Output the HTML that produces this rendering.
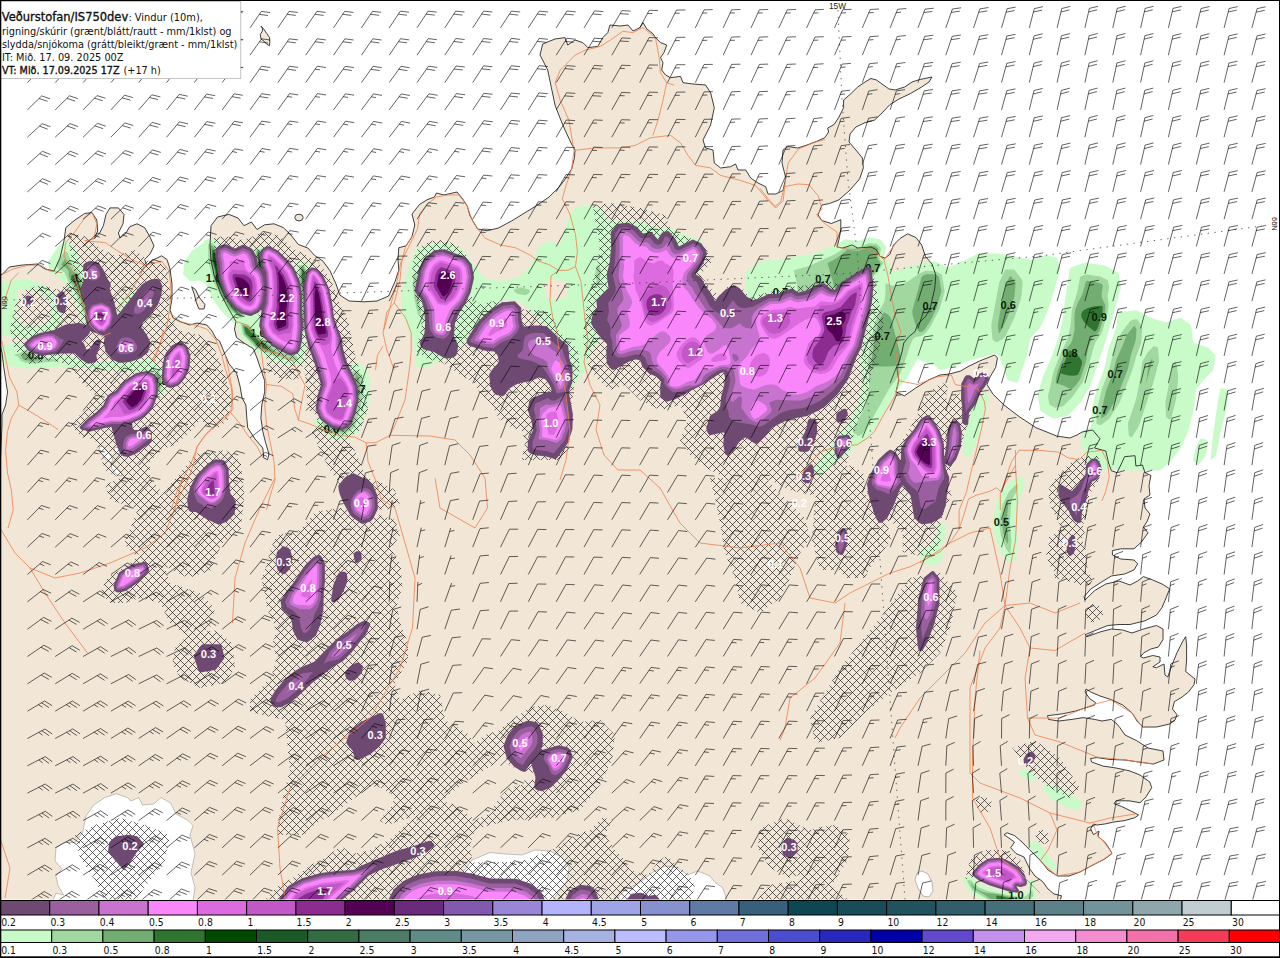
<!DOCTYPE html>
<html lang="is"><head><meta charset="utf-8"><title>Veðurstofan IS750dev</title>
<style>html,body{margin:0;padding:0;background:#fff}body{width:1280px;height:958px;overflow:hidden}</style>
</head><body>
<svg width="1280" height="958" viewBox="0 0 1280 958" style="display:block">
<defs>
<clipPath id="mapclip"><rect x="0" y="0" width="1280" height="900"/></clipPath>
</defs>
<rect width="1280" height="958" fill="#fff"/>
<g clip-path="url(#mapclip)">
<path d="M0 275 L2 274.6 L9.4 267 L22.5 265 L37.6 264 L45 269 L54 271 L60 258 L64 240.8 L65.8 227.6 L75 220 L84.6 213.5 L92 212.6 L96.8 220 L97.7 231 L94 239 L99.6 233 L103.4 225.7 L106 214.4 L110 207.9 L118.4 207.9 L124 214.4 L123 223.8 L118.4 233 L120 238 L126 233 L129.7 226.7 L137 223.8 L144.7 227.6 L150 237 L154 246 L150 254 L144.7 259.5 L146.6 265 L154 259.5 L161.6 255.8 L167 259.5 L170 269 L172 284 L172 299 L170 310 L173 317.8 L180 321.6 L189.8 325 L197 323 L206.8 325 L212 331 L216 338.5 L219.5 341 L225 354.4 L229 363.8 L236.5 373 L240 386 L242 397.7 L245.9 405 L246.8 418 L247.7 427.7 L255 439 L262.8 448 L263.7 457.8 L267.5 459.7 L269 454 L265.6 442.8 L262.8 431.5 L260.9 418 L261.8 405 L264.7 392 L264.7 380.7 L260.9 369.5 L257 358 L253.4 348.8 L244 343 L236.5 337.5 L234.5 329 L236 321.6 L227 306 L220 292 L214 275 L211 260 L210 246 L211 225.7 L217.6 217 L228.9 214.4 L238 218 L244 225.7 L251.4 222 L257 229.5 L264.6 224.8 L274 223.8 L283.4 227.6 L290.9 235 L298.4 244.5 L307.8 248 L315 255.8 L322.9 261 L330 270.8 L336 284 L339.8 295 L349 301 L364 301.8 L377 301 L388.6 296 L395 281.6 L398.8 270 L398 259 L398.8 247.7 L406 245.9 L412 236.5 L414.8 225 L412 214 L419.5 204.5 L427 199.8 L434.5 197 L436.4 193 L444 195 L457 192 L462.7 198.9 L467.4 206.4 L470 215.8 L474 223 L477.7 229 L487 230.8 L498.4 228 L511.6 221 L522.9 214 L536 206 L549 197 L558.6 187.6 L566 178 L571.7 168.8 L574.5 157.5 L575 150 L571.5 144 L565 130 L560 118 L555 105 L551.4 87.7 L547.7 70 L540 55 L542.7 44 L555 39 L565 37.6 L567.7 45 L575 40 L582.8 42.6 L587.8 47.6 L597.8 46.4 L602.8 37.6 L607.8 32.6 L610 25 L620 26 L628 25 L633 31 L640 27.6 L643 22.6 L646.7 28.8 L653 33.8 L655.4 37.6 L660.5 42.6 L666.7 45 L664 52.6 L660.5 57.6 L663 62.7 L661.7 70 L665.5 75 L670.5 77.7 L680.5 76.4 L683 82.7 L693 84 L705.6 85 L710.6 92.7 L714.3 107.8 L710.6 125 L703 140 L705.6 148 L713 150 L714.3 163 L720.6 168 L730.6 166.7 L735.6 164 L738 170 L745.7 170 L750.7 178 L758 183 L765.7 186.7 L768 194 L775.7 194 L783 190.5 L785.8 178 L782 163 L783 150 L788 146.6 L797.6 148 L807 145 L816.4 141.5 L824.8 137.7 L828.6 132 L827.7 128 L834 124.6 L839 117 L843.6 107.7 L843.6 100 L850 94.5 L857.7 87 L865 82 L871 78.5 L876.5 80 L882 84 L888.8 88.9 L895 90 L904.7 87 L912 82 L919.8 79.5 L932 77 L929 82 L921.7 87 L910.4 93.6 L899 99 L889.7 104.8 L882 113 L874.7 120 L865 122.7 L855.9 127 L850 134 L849 142 L855.9 150 L862.4 158 L863.4 167.8 L859.6 179 L850 190 L839 199.8 L829.5 203.5 L822 205 L818 214.8 L822 220.7 L831.4 223.5 L840.8 219.7 L840.8 230 L839 239.5 L837 247 L842.7 248 L852 245 L857.7 248 L871 247 L876.5 249.8 L880 256.4 L885 258 L889.7 254.5 L893.5 245 L900 238.5 L907.6 233.8 L916 237.6 L921.7 245 L925.4 256.4 L932 264 L935.8 275 L934.8 288 L930 309 L925.4 316.5 L917.9 324 L915 331.6 L908.5 337 L903.8 342.9 L902 352 L899 361.7 L897 369 L898.8 379.8 L896 392 L904.4 395.8 L915.7 388 L928.9 379.8 L940 375 L949.5 374 L960.8 371 L968 366.6 L979.6 361 L994.7 355 L997.5 358 L995.6 367.6 L990 377 L987 384.5 L992.8 394 L1004 405 L1019 416.5 L1036 427.7 L1056.7 436 L1069.8 438 L1077 435 L1082 432 L1092.6 430 L1100 438.8 L1094.5 448 L1105.8 451 L1108.6 463 L1111.4 470.8 L1117 472.6 L1120.8 465 L1124.6 456.7 L1135 455.7 L1135.9 466 L1142.4 465 L1145 472.6 L1150.9 475.5 L1149 485.8 L1150 495 L1144 499 L1145 508 L1150 514 L1147 521.5 L1143.4 527 L1148 532.8 L1141.5 542 L1134 548.8 L1120.8 548.8 L1112.4 550.6 L1112.4 555 L1120.8 559 L1134 560 L1137.7 563.8 L1134 570 L1124.6 574 L1111.4 576 L1102 581.7 L1090.8 589 L1084 596.7 L1085 600 L1094.5 590.7 L1105.8 584 L1119 581 L1130 585 L1137.7 581 L1143.4 576.6 L1152.8 580 L1162 584 L1169.7 588.8 L1166 598 L1162 607.6 L1156.5 615 L1145 620.8 L1130 624.5 L1119 624.5 L1107.7 625.5 L1096.4 630 L1085 634.8 L1087 636.7 L1100 632 L1111.4 629 L1122.7 630 L1132 633 L1143.4 629 L1156.5 625.5 L1163 629 L1163 639.5 L1158.4 647 L1150.9 649 L1144 652.7 L1140.6 656.5 L1143.4 658 L1152.8 655.5 L1160 657 L1160 662 L1152.8 666.8 L1156.5 667.7 L1164 664 L1165 675 L1167.8 677 L1171.6 665.9 L1177 652.7 L1182.9 641 L1185.7 636.7 L1186.6 645 L1186.6 660 L1185.7 671.5 L1190 675 L1195 679 L1194 684.7 L1188.5 692 L1181 697.8 L1174.4 701.6 L1172.5 709 L1177 714.7 L1175 720 L1169.7 724 L1156.5 727 L1143.4 727 L1137.7 722 L1132 712.9 L1122.7 705 L1111.4 699.7 L1100 696 L1090.8 692 L1086 689 L1085 692 L1089.8 698.8 L1095.5 702.5 L1094.5 705 L1085 708 L1075.7 711 L1062.6 713.8 L1047.5 715.7 L1048.5 719.4 L1058.8 721 L1072 719.4 L1083 717.6 L1094.5 719.4 L1102 721 L1111.4 719.4 L1117 724 L1119.8 727.5 L1125 735 L1136.7 740.7 L1148 748 L1163 751 L1164 760 L1153.6 764 L1138.6 762 L1125 760 L1110 759.5 L1097 757.6 L1090.6 758.5 L1091.6 762 L1102.8 766 L1116 768 L1129 770.7 L1140 775 L1149.8 782 L1151.7 787.7 L1146 797 L1140 802.7 L1129 800.8 L1116 800.8 L1114 803.6 L1121.6 806.5 L1133 812 L1138.6 815 L1134.8 817.7 L1125 820.5 L1114 822 L1104.7 824 L1097 825 L1093.5 824 L1090.6 829 L1093.5 834.7 L1099 831 L1098 836.5 L1104.7 842 L1110 849.7 L1112 853.5 L1104.7 859 L1091.6 865.7 L1080 872 L1069 876 L1057.7 876 L1048 870 L1040.8 861 L1035 855 L1029.5 849.7 L1022 842 L1014.5 835.6 L1007 832.8 L1004 834.7 L1008.9 838 L1014.5 842 L1010.7 847.8 L1016 853.5 L1024 857 L1029.5 868.5 L1035 876 L1042.7 881.6 L1048 889 L1054 894 L1061.5 895.7 L1060 901 L0 901 L0 470 L2 424 L2 414.6 L5.6 405 L7.5 392 L3.8 367.6 L2 352.6 L0 345.0Z" fill="#f2e7d7"/>
<path d="M261.1 26.2 L263.5 28.8 L266.8 33.5 L269.6 37.7 L269.8 42.9 L269.4 45.7 L266.8 44.3 L264.4 41.5 L261.1 39.1 L260.2 34.4 L262.1 31.6 L262.6 28.8Z" fill="#f2e7d7"/>
<path d="M191.7 286.8 L195.5 289.6 L199 297 L205 304.7 L204 309 L199 309 L196.4 302.8 L194.5 295.0Z" fill="#f2e7d7"/>
<path d="M294.7 217.5 L296 215 L299 214.2 L302 215 L303.2 217.5 L302 220 L299 221 L296 220.0Z" fill="#f2e7d7"/>
<path d="M52.5 901 L56 893 L63.7 895 L58 885.6 L56 876 L61.9 868.7 L55 861 L56 848 L63.7 842.5 L75 842.5 L82.5 833 L86 816 L93.7 805 L105 797.5 L116 793.7 L127.5 797.5 L131 801 L138.7 797.5 L142.5 805 L153.7 804 L161 797.5 L170.6 803 L176 814 L187.5 820 L193 825.6 L190 835 L195 853.7 L191 872.5 L195 887.5 L193 901.0Z" fill="#fff" stroke="#999" stroke-width="0.6"/>
<path d="M455 901 L463 872 L472 860 L490 852.5 L505 854 L522 855 L535 850 L550 851 L562 857.5 L569 867.5 L567.5 880 L560 890 L552 901.0Z" fill="#fff" stroke="#999" stroke-width="0.6"/>
<path d="M615 901 L625 890 L640 882.5 L652.5 872.5 L665 866 L677.5 867.5 L687.5 875 L697.5 871 L710 876 L715 882.5 L722.5 887.5 L727.5 901.0Z" fill="#fff" stroke="#999" stroke-width="0.6"/>
<path d="M917 873 L922 871 L928 874 L932 882 L933 891 L929 897 L923 896 L918 888 L915 880.0Z" fill="#fff" stroke="#777" stroke-width="0.5"/>
<path d="M99 447 L103 446 L108 452 L113 459 L111 463 L106 460 L101 453.0Z" fill="#fff" stroke="#777" stroke-width="0.5"/>
<path d="M111 463 L116 467 L121 472 L122 476 L117 475 L112 469.0Z" fill="#fff" stroke="#777" stroke-width="0.5"/>
<path d="M115 447 L119 448 L120 453 L116 454 L114 450.0Z" fill="#fff" stroke="#777" stroke-width="0.5"/>
<g id="green">
<path d="M579.2 206.2L590.8 205.2L600.4 209.2L610.2 221.9L624.8 222L626.2 221.6L640.2 221.1L654.8 226.9L670.8 228.2L687.8 235.9L700.2 240.2L706.3 250.2L700.3 270.2L690.8 279.9L689.2 280.8L640.8 300.3L597.5 300.8L593.6 312.2L592.5 317.2L594.6 330.2L599.3 338.2L599.8 340.8L591.8 350.5L590.1 353.2L584.3 372.2L572.2 387.9L571.2 387.8L560.8 380.8L560.1 379.8L564.9 350.2L545.6 325.8L521.8 301.9L518.8 300.9L515.2 300.5L500.8 300.5L496.8 303.4L480.2 318.5L470.8 335.9L460.5 345.2L456.3 356.2L454.8 358.3L440.2 360.6L424.8 368.4L417.8 366.8L416.2 365.9L415.6 362.8L413.9 341.8L408.2 329.8L403.2 317.8L401 299.2L403.7 283.8L409.7 261.2L418.1 248.2L429.8 244.2L445.8 242.2L460.8 248.6L473.2 263.1L485.2 278.9L502.8 281L517.8 277.4L519.8 276.6L530 266.2L538.6 247.8L548.8 240.6L550.2 240.7L559.2 245.4L560.2 245L563.7 232.2L570.2 212.2ZM549.2 279.6L544.4 284.2L543.7 285.8L546.9 298.2L549.2 299.4L556.8 300.5L565.8 297.1L566.9 295.2L568.5 285.8L568.2 285L560.8 279.6ZM211.7 236.8L213.2 237.2L224.3 248.2L226.5 271.2L231.1 289.8L235.2 297.6L250.2 310L280.8 320.2L297.2 328.5L298 327.8L298 298.8L296 282.2L296 263.2L296.8 262.2L297.8 262L305.2 262L306.8 263.1L312.5 275.2L312.5 302.2L310.3 325.8L304.8 337.2L303.5 338.2L306.4 346.2L303 356.2L305.8 361.2L305.3 362.8L291.8 366.3L273.2 360.8L254.8 350.8L240.2 336.2L237.8 326L235.2 324.3L224.8 314.8L220.2 309.8L212.7 299.2L206.1 284.8L200.2 280.5L190.2 281.3L183.2 274.3L184.2 262.2L191.8 250.7L203.1 243.2L204.8 240.2L207.8 239.5ZM868.7 237.2L880.2 239.2L885.3 245.8L886.1 247.8L883.7 256.8L884.2 257.9L885.3 258.2L888.8 261.8L889 264.8L892.5 270.8L893.8 271.6L895.2 271.5L911.2 265.7L918.8 263.7L925.2 262.1L929.8 262.6L934.8 261.3L948.2 267.5L963.2 261L978.2 253.6L996.8 253.6L1008.2 255.1L1032.2 260.1L1045.8 255.1L1055.2 257.2L1056.8 258.2L1060.4 267.8L1053.2 294.2L1046.7 313.2L1040.2 327.8L1030.5 337.8L1026.8 355.7L1017.8 382.2L1015.8 382.4L1009.3 380.8L1007.3 379.2L1002.5 364.8L998.5 355.2L997.8 354L996.8 353.6L971.2 360L956.7 365.8L940.8 370.1L939.8 369.7L935.2 365.5L921.2 360.7L917.8 358.5L905.8 379.8L895 392.8L884.8 411.8L867.8 438.8L843.8 456.8L831.4 465.2L823.3 472.8L820.8 474.8L819.8 474.9L812.8 470.8L812.7 469.2L823.8 453.2L848 425.2L858.5 403.8L862.1 385.8L860.1 359.8L872.1 300.8L872.1 284.8L871.8 284.2L871.2 284.4L850.2 300.3L799.2 305.4L760.8 310.4L745.3 300.2L745.1 272.8L745.7 271.8L760.2 261.2L782.8 259.1L797.8 256.1L812.8 254L823.8 249.2L834.2 245.5L845.2 239.2L858.2 241.1ZM65.7 240.8L67.2 241.1L73.9 247.8L75.8 251.2L80.3 261.8L91.3 296.2L96.4 317.8L92.8 331.2L92.2 331.8L90.8 331.3L84.2 326.2L77.9 307.8L70 290.2L60.2 278.4L50.8 272.8L49.7 270.8L48.1 262.8L49.2 260.2L57.8 246.7ZM254.8 247.6L261.9 246.2L262.9 247.8L266.5 262.2L266.5 279.2L265.9 280.8L260.8 284L259.1 282.2L254.1 270.8L253 249.8L253.2 248.6ZM1084.7 262.8L1103.8 265.2L1117.8 272.2L1118.9 275.2L1120.9 287.8L1106.3 339.2L1090.8 384.2L1088.8 388.2L1080.8 402.3L1068.2 415.3L1065.8 416.4L1053.2 418.4L1040.2 410.8L1037.6 395.2L1042.7 377.2L1050 360.8L1057.5 340.8L1062.5 320.8L1064.6 302.8L1069.7 269.2L1071.2 267.2ZM13.6 279.2L17.8 279.1L19.2 279.5L30.2 280.1L44.2 285.2L46.8 286.6L57.9 297.8L62.4 314.2L58.8 328.8L57.9 330.8L43.8 338.4L23.2 338.4L8.2 336.4L2.6 334.2L2.1 332.8L2.1 283.2L3.8 281.7ZM18.8 290L18 290.8L17.5 293.8L16 314.2L22 326.2L40.2 326.5L50.1 318.8L50.5 317.8L50.5 302.2L38.8 290.4L37.8 290ZM131.8 290.8L133.2 290.8L139.2 295.3L139.9 297.2L134.2 310.2L125.8 317.2L123.8 317.8L116.7 312.6L116.7 310.3L120.3 300.2ZM1120.8 312.1L1136.2 310.3L1151.8 318L1165.2 322.5L1180.8 317.8L1189.8 324.3L1190.7 325.3L1191.4 327.8L1193 340.8L1193.8 342.7L1208.2 347.8L1215.7 355.2L1213.2 370.2L1202.8 380.8L1196 390.2L1193.4 410.8L1188.2 431.2L1180.8 448.2L1171.3 460.2L1161.2 469.8L1159.8 470.4L1093.3 470.3L1084.3 453.8L1080.2 443.7L1082.8 432.3L1084.2 430.3L1091 427.2L1092 408.8L1095.6 392.8L1097.1 387.2L1103.9 369.8L1108.6 348.2L1116 328.2L1118.2 313.3ZM3.2 345.7L15.2 342.1L26.2 344.2L37.2 350.5L42.2 352.5L67.8 355.6L99.8 362.1L130.8 362.1L150.2 358.2L159.8 365.7L166.3 378.2L164.3 392.2L157.2 397.8L155.7 397.8L150.2 388.2L150 373.2L149.2 372.4L132.2 371.4L130.8 370.9L124.8 370.9L123.2 370.4L117.2 370.4L115.8 369.9L109.8 369.9L108.2 369.4L102.2 369.4L100.8 368.9L94.8 368.9L93.2 368.4L87.2 368.4L85.8 367.9L79.8 367.9L78.2 367.4L72.2 367.4L70.8 366.9L64.8 366.9L63.2 366.4L29.2 368.4L10.2 366.3L3.2 362.8L2.2 361.8L2.1 347.2ZM347.2 365.7L357.8 362.4L358.8 362.8L368.4 372.8L370.4 392.8L366.3 412.8L359.3 430.2L357.8 432.8L344.8 440.4L330.2 438.3L317.6 427.8L312.7 421.2L312.7 420.2L325.2 415.5L339.8 405.1L340.5 403.8L344.1 385.8L346.2 366.8ZM1220.9 388.2L1222.8 388.2L1227.2 389.7L1228.3 390.8L1227.4 405.2L1220.5 432.2L1216.3 454.2L1215.3 456.2L1211.2 460.1L1210.6 458.8L1212.1 442.2L1217.6 402.8L1220.1 389.8ZM984.9 390.8L985.8 390.9L989.3 397.8L987.8 404.2L980.3 430.2L974.3 446.8L969.3 456.8L967.8 457.3L963.2 454.2L962.6 452.2L964.6 434.8L969.7 410.2L970.2 408.7L981.8 395.6ZM1200.4 438.8L1202.2 438.6L1207.2 440.2L1208.2 441.8L1205.7 455.8L1198.2 465.4L1193.1 460.2L1195.7 447.8ZM1018.7 476.8L1023.8 477.7L1024.8 478.8L1024.9 479.8L1023.3 491.8L1017.5 502.8L1016.9 506.8L1015.9 523.8L1017.4 537.8L1017.4 542.2L1016.4 550.2L1016.4 555.2L1015.2 559.4L1008.8 562.6L1007.8 562.2L1001.2 552.8L994.7 537.2L992.6 521.2L996.7 502.2L1003.7 488.2L1011.7 480.2ZM940.2 522.2L941.2 522.2L943.8 523.7L945.9 525.8L944.3 540.2L939.2 549.8L943.2 552.3L941.9 560.2L940.2 562.7L930.2 566.2L926.8 564L924.8 564.3L920.2 559.8L920.6 552.8L920.1 549.2L920.8 548.3L922.3 547.8L929.2 546.5L933.2 542.1L935 539.2ZM1018.9 769.2L1028.2 770.2L1036.6 775.8L1036.8 776.8L1034.2 780.3L1032.8 781.1L1023.2 777.8L1021.7 776.8L1018.7 770.8ZM1044.8 784.2L1056.2 786.2L1069.8 793.7L1081.6 801.8L1081.8 803.2L1078.7 809.2L1078.2 809.8L1076.2 809.9L1065.2 806.8L1050.7 798.8L1043.3 790.2L1043.7 785.8ZM1030.2 841.7L1035.8 840.4L1037.2 841.2L1046.8 852.7L1055.8 865.2L1055.3 867.8L1052.8 870.8L1051.7 870.8L1043.8 863.8L1032.2 852.2L1029.7 844.8L1029.6 842.8ZM963.8 877.2L971.4 876.2L981.8 885.4L993.2 888.9L1007.8 892.4L1022.8 894.5L1023.8 894.4L1027.2 891.5L1029.3 888.8L1026.1 881.8L1026.2 880.2L1032.8 880.1L1033.9 881.8L1036.4 896.8L1030.2 903.8L988 903.8L987.8 903.1L969.8 892.8L968.7 891.8L962.1 878.2Z" fill="#c8fbc8" fill-rule="evenodd"/>
<path d="M209.7 243.2L212.8 243L220.2 252.2L222.5 271.8L225.2 279.8L227.5 289.8L235.8 305.2L244.3 315.8L240.8 318.5L239.8 318.5L236.2 315.6L230.4 310.8L228.8 308.6L220.4 295.8L213.7 282.2L208.2 260.8L208.2 244.2ZM869 243.2L876.8 243.8L880.6 247.8L880.8 249.2L879.3 257.2L880.6 260.2L883 262.2L883.4 263.2L877.2 272.8L867.2 281.8L847.2 292.9L824.8 293.5L811.8 292.5L799.2 292.8L797.6 292.2L796.5 281.8L793.6 270.2L808.2 266.2L815.2 263.3L834.8 254.3L846.8 246.5L856.2 247.5L859.2 247.4ZM255.8 249.9L260.2 249L260.8 249.6L264.2 263.2L264.2 278.2L263.2 279.6L261.2 280.6L256.4 269.8L255.8 263.2L255.3 250.7ZM64.8 251.2L65.8 250.9L67.6 252.8L74.2 268.2L79 272.8L81.5 278.2L88.9 301.2L92.4 316.8L92.4 319.2L90.2 325.9L87.1 323.8L81.2 306.2L73.5 288.2L68 280.8L64.7 272.8L57 267.2L56.7 263.2ZM299.1 265.2L304.3 265.2L309.5 276.2L309.5 301.2L308 320.2L307.4 324.8L303.8 332.2L302.8 331.5L301 328.8L301 298.2L299 280.8ZM597.5 265.2L598.8 265.4L601.1 269.8L599.9 280.2L599.2 282.8L597.8 284.3L596.6 282.8L595.3 272.8L596.5 266.2ZM1005 269.8L1006.2 269.4L1014.2 269.5L1022.2 280L1022.6 283.8L1021.6 294.8L1020.9 299.2L1014 318.8L1005.1 336.8L1004.2 337.9L997.2 342.2L993.5 340.8L992.6 339.8L991.2 325.8L999.2 282.6ZM925.4 270.8L935.8 271.2L942 274.8L944.6 291.8L939.5 309.2L930.7 326.2L926.2 332.4L922.2 335.7L915.2 337.2L912.9 339.2L910.4 344.8L905.2 360.8L899.5 375.2L889 388.8L878.6 407.8L866.8 428.1L862.2 434.3L858.2 436.2L852.8 432L852.7 431.2L858.2 419.3L864.4 408.3L865.5 405.2L869.2 386.8L867.6 361.2L867.9 359.2L871.9 336.2L875.3 321.2L878.8 311.8L883.6 303.2L884.5 300.8L885.4 293.2L885.6 283.2L891.8 285.5L898.8 285.7L907.8 281.4L918.2 274.3ZM414 274.2L415.8 273.6L416.2 274.2L419.6 281.2L418.1 297.2L421.5 311.8L419.8 315.8L418.2 315.2L417.5 313.2L414.5 299.8L413 288.8L412.6 285.2L413 281.8ZM1085.2 274.8L1087.2 274.5L1100.2 276.4L1107.8 280.2L1109.2 287.2L1107.6 295.8L1108.7 305.7L1107.7 312.8L1102.3 331.2L1100.8 334.4L1096 341.2L1094.1 345.8L1089.2 363.8L1083 381.8L1072.5 396.8L1063.8 405.8L1062.2 406.6L1054.8 407.8L1049.3 404.2L1047.9 396.2L1050.5 386.2L1052.2 376.8L1054.4 369.2L1060.8 352.8L1066.5 341.2L1068.5 335.2L1070.6 324.8L1072 308.8L1077.1 292.8L1080.2 276.8ZM514.3 289.2L520.8 287.3L528.8 289.6L529.7 290.7L529.9 292.2L526 295.2L517.8 294.1L514.8 291.9L513.7 290.2ZM1132.6 319.8L1137.2 319.3L1142.3 327.8L1141.2 342.7L1136.5 355.8L1132.1 370.8L1120.2 401.3L1109.7 418.2L1101.8 424.4L1099.8 425.1L1096.5 423.8L1096.4 415.8L1097 409.8L1101.8 389.2L1108.6 371.2L1111.8 358.3L1114.3 350.3L1121.3 332.8L1130.2 321ZM240.5 322.8L248.8 324.9L260.8 338.7L268.8 343.3L275.2 348.6L279.8 351L296.8 356L298.7 359.2L292.8 361.3L289.8 360.7L274.8 356.2L261.8 351L256.2 348.1L243 334.8ZM1153.6 346.2L1157.2 347L1158.1 348.2L1159.1 360.2L1158.8 361.8L1153.8 381.2L1140.3 421.8L1137.9 427.8L1132.5 436.2L1131.2 437L1129.3 436.2L1128.8 435.3L1127.9 423.2L1136 399.8L1140.1 379.2L1142.3 361.8L1147.2 353.1ZM24.2 350.2L26.8 350.5L38.8 356.8L54.8 359.5L58.4 360.2L58.4 360.8L53.8 361.6L31.8 363.4L25.2 362.7L21 360.8L18.2 356.9L13.7 354.8L19.8 353.2ZM1175 361.2L1175.8 361.2L1176 361.8L1178 373.8L1178.1 380.2L1176 399.8L1171.3 418.2L1169.2 419.7L1166 416.8L1165.4 401.8L1172.9 364.2ZM352.8 371.1L356.8 370.2L361.7 375.2L363.5 391.8L359.9 410.2L354.9 425.8L353.8 428.4L344.2 434.5L333.2 433.3L324.8 426.8L321.5 423.2L328.2 420.1L342.2 411.1L345.8 407.9L347 405.2L350.6 387.2L352.2 371.8ZM153.8 374.1L158.8 371.3L159.2 371.8L162.7 379.2L161.1 390.2L157.2 393.2L153.4 386.8L153.4 375.2ZM1016.5 484.8L1017.8 484.8L1017.3 489.8L1011.9 500.2L1010.9 505.8L1009.9 524.8L1011.4 540.8L1010.4 553.2L1009.8 554L1005.8 548.2L1000.7 535.2L999 521.8L1002.8 503.8L1008.9 491.8L1014.7 485.8ZM967.2 880.2L970.2 879.9L978.8 887.8L988.8 891.2L1010.3 895.5L1023.8 897.1L1025.2 896.6L1028.7 893.8L1032.2 889.8L1033.4 895.8L1027.9 902.2L1027.5 903.8L990.9 903.8L990.5 901.8L989.2 900.3L971.8 889.9L967.2 881.2ZM1030.1 882.8L1031.2 883L1031.8 886.5L1030.2 884.4Z" fill="#a0d8a0" fill-rule="evenodd"/>
<path d="M210.8 245.2L212.2 245.5L218.1 252.8L220.4 271.8L223.5 279.8L225.9 290.2L234.8 306.2L242.1 315.2L240.8 316.9L239.8 316.7L234.2 312.1L229.9 307.8L221.7 294.8L215.3 281.8L213.5 271.8L210.3 260.8L210.2 246.2ZM870 245.8L875.8 246.2L878.2 248.8L877.1 257.2L878.1 259.8L880.8 263.8L875.4 271.8L870.2 276.6L865.8 279.9L846.7 288.8L844.8 289.1L834.8 288.2L828.2 265.6L827.8 263.8L828.2 262.8L836.2 258.4L847.2 250L855.8 250.8L859.8 250.5ZM257.4 250.8L259.8 250.8L263 263.2L263 277.2L262.2 278.8L260.9 277.2L257.5 269.2L256.5 251.8ZM65 258.8L67.4 264.2L70.4 269.2L72.5 271.2L76.8 273.5L79 277.2L88.1 305.2L90.8 317.8L89.2 323L88.2 321.8L82.9 305.8L77.5 291.8L74.9 286.8L69.6 279.2L68.7 275.8L68.5 270.8L66.2 267.9L61.1 264.8ZM300.6 266.8L303.4 266.8L308 276.8L308 301.2L306.5 319.8L305.9 324.2L303.2 329.2L302.5 327.8L302.5 298.2L300.5 280.8ZM925.8 274.2L934.2 274.3L938.8 276.6L941.4 291.2L936.5 308.2L930.8 320.2L924.6 329.8L922.2 331.8L919.8 332.3L918.2 330.8L914.7 322.2L912.6 314.8L912.3 310.8L921.5 277.2L922.9 275.8ZM1009.8 276.2L1011.2 276.6L1015.7 282.7L1014.3 297.2L1007.8 316.8L1000.2 332.2L998.8 333.4L997.8 325.8L999.6 314.2L1005.7 284.8ZM1086.1 280.8L1098.7 282.8L1102.3 284.2L1102.8 286.8L1101.8 291.2L1101.6 296.2L1102.2 298.8L1105.3 304.8L1105.5 309.2L1103.2 319.2L1099.7 330.3L1097.7 333.2L1092.5 337.2L1090.1 342.2L1087.7 350.2L1085.7 362.8L1080.4 378.8L1076.3 384.8L1073.2 388.1L1071.2 389.4L1064.1 385.8L1056.2 383.2L1055.7 382.2L1056 377.8L1057.7 370.8L1065.5 350.8L1067.6 347.2L1070.6 343.8L1072.2 340.2L1074.6 329.8L1074.4 317.2L1075.3 309.2L1076.8 304.9L1082.6 293.8ZM883.5 312.8L884.8 312.5L888.2 314.7L890 316.8L891.2 319.2L900.6 355.8L900.8 359.3L898.8 364.7L896.2 365.8L890.2 366.4L872.2 366.4L871.7 365.8L871.3 360.7L876.1 332.2L879.5 319.8ZM242.5 325.2L243.8 325L247.8 326.2L259.6 339.8L267.8 344.6L273.8 350.4L279.9 354.2L275.8 353.7L266.8 351.2L257 346.8L244.5 334.2ZM1126.5 335.2L1134.2 325.8L1134.8 326.2L1136.4 329.2L1136 337.8L1135.3 341.8L1131.1 354.2L1127.8 369.2L1115.9 399.8L1106.6 414.8L1101.2 418.5L1101.5 410.8L1105.8 391.8L1112.9 372.8L1116.5 359.2L1122.6 345.8ZM24.2 352.8L27.8 353.6L39.6 359.8L38.8 360.4L31.2 361L24.8 360L22.6 358.8L21.7 357.2L22.7 353.8ZM1152.2 358.2L1152.2 360.8L1146.2 383.3L1146.8 378.2L1147.2 377.8L1147.2 373.7L1147.7 373.2L1147.8 369.7L1148.2 369.2L1148.2 365.2ZM157.6 373.8L158.8 374.5L161 379.8L159.8 388.8L158.8 390.2L157.8 390.7L155.4 387.2L155 385.8L155.1 375.8L155.7 374.8ZM355.6 374.2L356.8 374.7L358.9 377.2L360.2 391.8L356.8 409.2L352.2 425L350.8 427.2L343.2 431.9L334.2 430.8L326.4 424.2L344.9 412.8L347.4 410.8L349.2 408.2L350.2 405.8L353.8 388.2ZM1008.7 499.2L1006.9 518.8L1006.9 525.2L1008.4 540.2L1007.8 543.8L1006.4 541.8L1003.6 534.2L1002 521.8L1005.5 505.2ZM970.7 883.2L977.2 889.5L981.8 891.7L987.2 893.1L997.2 893.9L1006.8 896.2L1016.2 897.4L1018.9 898.2L1020.5 903.8L992.2 903.8L991.8 901.2L990.8 899.6L984.2 894.4L973.2 888.3Z" fill="#72ae72" fill-rule="evenodd"/>
<path d="M212.2 249.8L212.8 249.3L213.2 249.7L216.3 253.8L218.6 272.2L222 280.2L224.7 291.2L233.6 306.8L239.1 313.8L238.2 313.7L234.8 310.9L230.8 306.8L223.1 294.2L216.9 281.8L215.3 271.2L212.2 260.2ZM257.7 252.2L258.8 251.8L259.2 252.9L261.9 263.8L261.8 275.2L260.2 273L258.6 268.8ZM302.1 268.2L303.2 269.5L306.6 277.2L306.6 300.8L304.2 324.1L303.9 297.8L301.9 280.2ZM71.2 275.8L74.2 274.3L75.2 274.8L77.2 277.9L84.2 298.7L85.2 305.1L83.2 301.7L77 286.8L71.2 278.2ZM1100.6 305.8L1102.2 306L1102.8 307.2L1102.4 312.2L1097.8 328.1L1096.2 330.6L1094.8 331.5L1089 327.2L1083.9 321.8L1081.4 317.2L1081.2 313.8L1083 310.8L1087 308.2L1093.2 306.5ZM244.2 327.2L244.8 326.8L247.2 327.8L258.6 340.8L267.2 346.2L268 347.8L267.2 348.9L266.2 349.2L263.2 348.4L257.4 345.2L245.8 333.5ZM1070.2 350.2L1073.1 351.8L1076.9 354.8L1079.8 357.8L1082.1 361.2L1081.8 364.5L1079.8 370.9L1078.2 374.3L1076.8 375.2L1072.8 375.8L1068.2 375.5L1061.8 373.8L1060.8 372.8L1067.1 355.2L1068.8 351.6ZM996.2 895.8L999.4 895.8L1011.2 898.5L1011.9 899.2L1009.8 903.8L998.3 903.8L996.6 899.8Z" fill="#2f752f" fill-rule="evenodd"/>
<path d="M213.2 252.2L213.8 252.1L214.9 253.2L215.8 255.4L216.9 268.8L217.9 273.2L221.2 280.5L224.1 291.8L229.2 300.7L229.8 303L223.7 293.8L217.2 280.3L216.3 271.2L213.2 260.2ZM258.7 255.2L259.2 255.5L261.3 263.8L261.2 272.8L259.2 268.8Z" fill="#004a00" fill-rule="evenodd"/>
</g>
<clipPath id="hclip"><path d="M380 821 L395 802.5 L425 783.7 L455 757.5 L485 735 L507.5 727.5 L515 742.5 L492.5 765 L462.5 783.7 L440 802.5 L410 817.5 L387.5 825.0ZM124 544 L139 506.5 L161.6 495 L180.5 472.6 L195.5 453.8 L225.6 450 L240.6 461.4 L244.4 495.2 L240.6 529 L221.8 544 L210.5 570.4 L188 577.9 L165.4 566.6 L150.4 551.6 L135.3 555.3ZM1085 610 L1092 604 L1100 606 L1104 614 L1098 622 L1090 622 L1086 617.0ZM976 800 L984 795 L992 802 L990 811 L982 814 L977 808.0ZM1035 834 L1042 829 L1050 835 L1048 843 L1040 845.0ZM800 840 L815 828 L835 825 L850 835 L848 860 L835 880 L820 901 L800 901.0ZM501.7 727.6 L516.7 716.3 L531.7 706.9 L546.8 705 L565.6 712.6 L580 722 L600 720 L615 735 L612 760 L600 785 L580 810.3 L565.6 814 L546.8 810.3 L528 819.7 L509.2 819.7 L490.4 810.3 L501.7 795.3 L509.2 787.7 L524.2 784 L535.5 791.5 L535.5 772.7 L520.5 770.8 L509.2 765.2 L503.6 752.0ZM68 232 L84 236 L100 248 L115 256 L135 250 L150 262 L165 265 L170 290 L168 315 L178 330 L200 335 L215 350 L225 375 L232 400 L228 420 L215 430 L200 420 L190 432 L175 445 L160 450 L150 462 L150 478 L160 490 L155 505 L135 508 L110 500 L105 485 L120 478 L105 470 L100 455 L95 440 L80 435 L70 425 L85 410 L95 395 L80 380 L70 365 L50 360 L30 365 L15 350 L10 330 L15 305 L25 290 L40 285 L60 290 L75 275 L70 250.0ZM214 238 L225 236 L240 240 L250 238 L262 232 L280 236 L292 248 L304 254 L318 262 L328 275 L335 290 L340 305 L348 320 L352 340 L356 360 L365 385 L368 410 L360 430 L345 440 L352 445 L360 462 L366 478 L380 482 L395 490 L400 505 L385 510 L365 508 L350 500 L340 485 L330 470 L322 455 L312 432 L318 425 L316 415 L308 410 L306 385 L304 362 L298 380 L280 378 L268 372 L266 354 L255 345 L262 330 L258 312 L240 314 L225 300 L218 280 L214 258.0ZM413 262 L418 248 L430 241 L445 240 L458 246 L466 255 L472 270 L470 295 L480.2 304.4 L495.3 300.7 L514 304.4 L525.3 310 L540.4 310 L551.7 313.8 L559.2 332.6 L570.5 340.2 L578 351.4 L579.8 370.2 L574.2 385.3 L570.5 411.6 L570.5 430.4 L568.6 449.2 L559.2 460 L521.6 460 L525.3 441.7 L521.6 430.4 L510.3 426.6 L499 419.1 L491.5 404.1 L480.2 392.8 L472.7 381.5 L465.2 377.7 L453.9 370.2 L442.6 362.7 L427.6 358.9 L416.3 351.4 L418.2 340.2 L422 327 L418.2 308.2 L414 291 L412 275.0ZM593 206 L610 203 L640 208 L665 215 L672 232 L690 238 L706 248 L712 262 L700 275 L712 290 L720 296 L730 284 L742 288 L750 298 L765 293 L790 287 L810 285 L827 281 L838 284 L850 276 L868 265 L875 280 L878 300 L884 320 L880 345 L872 370 L868 392 L862 410 L855 430 L850 450 L845 470 L830 490 L810 495 L790 490 L770 480 L750 485 L730 480 L710 470 L690 455 L680 440 L688 420 L680 405 L660 410 L640 400 L625 385 L610 390 L598 380 L588 365 L583 340 L586 310 L590 290 L596 270 L600 245 L596 225.0ZM100 593 L107.5 578 L130 563 L150 548 L165 538 L175 553 L165 568 L170 583 L200 593 L215 608 L210 628 L190 638 L170 623 L160 603 L140 598 L125 603 L110 603.0ZM175 648 L190 633 L215 630.5 L232.5 643 L235 668 L225 683 L200 688 L180 678 L172.5 663.0ZM276.4 535.6 L300 530 L315 512 L340 508 L370 512 L395 520 L400 535 L391 548.8 L400.5 563.8 L402.3 586.4 L396.7 605.2 L400.5 624 L408 642.8 L408 661.6 L400.5 672.9 L394.8 684.1 L400 700 L420 690 L440 695 L445 720 L470 735 L479 760 L479 771 L465 779 L446 779 L437 792 L427 797 L409 807 L399 816 L386 824 L381 818 L390 809 L395 797 L382 788 L371 786 L360 794 L345 805 L330 816 L315 824 L304 835 L278 835 L278 824 L281 807 L285 788 L290 771 L287 740 L285 720 L250 712 L250 699.2 L261.4 687.9 L272.6 672.9 L276.4 657.8 L272.6 642.8 L276.4 631.5 L272.6 620.2 L267 608.9 L265.1 593.9 L261.4 578.9 L267 563.8 L270.8 548.8ZM264 901 L277 887 L296 876 L311 865 L326 857 L341 846 L352 854 L371 850 L390 839 L409 822 L427 807 L442 801 L456 805 L475 820 L497.5 810 L515 795 L525 780 L575 780 L580 800 L570 810 L555 817.5 L522.5 817.5 L490 825 L475 830 L470 845 L472.5 862.5 L490 862 L520 862 L557.5 847.5 L575 835 L590 830 L602.5 817.5 L612.5 820 L605 835 L615 850 L625 860 L630 870 L647.5 875 L660 860 L667.5 855 L675 865 L690 875 L695 887.5 L690 901.0ZM75 835 L95 825 L120 818 L145 825 L170 835 L165 860 L150 880 L135 901 L105 901 L95 880 L80 858.0ZM710 478 L765 478 L785 498 L805 518 L810 538 L800 553 L790 578 L780 598 L760 613 L740 603 L735 578 L725 553 L720 523 L715 498.0ZM830 528 L850 523 L870 538 L875 558 L865 578 L845 578 L832.5 558.0ZM910 578 L940 573 L957.5 593 L950 628 L940 653 L920 673 L890 693 L865 713 L840 738 L815 743 L810 718 L825 693 L840 668 L860 643 L880 618 L895 598.0ZM1047.5 538 L1065 528 L1085 543 L1087.5 568 L1075 583 L1055 578.0ZM1012.5 748 L1035 740.5 L1060 758 L1080 788 L1070 798 L1050 788 L1030 773.0ZM760 828 L785 818 L805 828 L840 838 L845 858 L830 878 L805 873 L790 878 L770 868 L757.5 848.0ZM755 901 L770 885 L800 880 L830 885 L850 901.0ZM965 880 L970 860 L985 850 L1005 850 L1020 860 L1025 875 L1000 870 L985 872.0ZM899 446.4 L910.2 427.6 L921.5 408.8 L936.5 408.8 L951.6 397.5 L966.6 390 L976 397.5 L970.4 414.4 L966.6 427.6 L961 446.4 L951.6 465.2 L947.8 480.2 L951.6 495.3 L944 510.3 L940.3 525.3 L940.3 540.4 L932.8 555.4 L917.7 555.4 L902.7 551.7 L902.7 532.9 L891.4 521.6 L876.4 517.8 L867 502.8 L867 480.2 L876.4 465.2 L887.7 453.9ZM820 474.6 L835 469 L850 465.2 L863.2 472.7 L865.1 487.7 L867 502.8 L876.4 517.8 L887.7 525.3 L891.4 540.4 L882 551.7 L867 570 L820 570 L812 540 L815 500.0ZM919.5 405.2 L928.9 392 L942 382.6 L947.7 386.4 L945.8 397.7 L955.2 408.9 L962.7 418.3 L962.7 435.3 L955.2 442.8 L945.8 435.3 L942 424 L934.5 420.2 L925.1 420.2 L917.6 414.6ZM1057 476 L1070 463 L1083 456 L1098 456 L1102 469 L1098 482 L1089 495 L1087 514 L1083 525 L1085 536 L1078 542 L1075 560 L1090 575 L1093 585 L1078 585 L1065 578 L1052 570 L1046 555 L1055 540 L1060 525 L1050 505 L1048 490.0Z" clip-rule="nonzero"/></clipPath>
<path id="hatch" clip-path="url(#hclip)" d="M-904.00 0L-4.00 900M-896.00 0L4.00 900M-888.00 0L12.00 900M-880.00 0L20.00 900M-872.00 0L28.00 900M-864.00 0L36.00 900M-856.00 0L44.00 900M-848.00 0L52.00 900M-840.00 0L60.00 900M-832.00 0L68.00 900M-824.00 0L76.00 900M-816.00 0L84.00 900M-808.00 0L92.00 900M-800.00 0L100.00 900M-792.00 0L108.00 900M-784.00 0L116.00 900M-776.00 0L124.00 900M-768.00 0L132.00 900M-760.00 0L140.00 900M-752.00 0L148.00 900M-744.00 0L156.00 900M-736.00 0L164.00 900M-728.00 0L172.00 900M-720.00 0L180.00 900M-712.00 0L188.00 900M-704.00 0L196.00 900M-696.00 0L204.00 900M-688.00 0L212.00 900M-680.00 0L220.00 900M-672.00 0L228.00 900M-664.00 0L236.00 900M-656.00 0L244.00 900M-648.00 0L252.00 900M-640.00 0L260.00 900M-632.00 0L268.00 900M-624.00 0L276.00 900M-616.00 0L284.00 900M-608.00 0L292.00 900M-600.00 0L300.00 900M-592.00 0L308.00 900M-584.00 0L316.00 900M-576.00 0L324.00 900M-568.00 0L332.00 900M-560.00 0L340.00 900M-552.00 0L348.00 900M-544.00 0L356.00 900M-536.00 0L364.00 900M-528.00 0L372.00 900M-520.00 0L380.00 900M-512.00 0L388.00 900M-504.00 0L396.00 900M-496.00 0L404.00 900M-488.00 0L412.00 900M-480.00 0L420.00 900M-472.00 0L428.00 900M-464.00 0L436.00 900M-456.00 0L444.00 900M-448.00 0L452.00 900M-440.00 0L460.00 900M-432.00 0L468.00 900M-424.00 0L476.00 900M-416.00 0L484.00 900M-408.00 0L492.00 900M-400.00 0L500.00 900M-392.00 0L508.00 900M-384.00 0L516.00 900M-376.00 0L524.00 900M-368.00 0L532.00 900M-360.00 0L540.00 900M-352.00 0L548.00 900M-344.00 0L556.00 900M-336.00 0L564.00 900M-328.00 0L572.00 900M-320.00 0L580.00 900M-312.00 0L588.00 900M-304.00 0L596.00 900M-296.00 0L604.00 900M-288.00 0L612.00 900M-280.00 0L620.00 900M-272.00 0L628.00 900M-264.00 0L636.00 900M-256.00 0L644.00 900M-248.00 0L652.00 900M-240.00 0L660.00 900M-232.00 0L668.00 900M-224.00 0L676.00 900M-216.00 0L684.00 900M-208.00 0L692.00 900M-200.00 0L700.00 900M-192.00 0L708.00 900M-184.00 0L716.00 900M-176.00 0L724.00 900M-168.00 0L732.00 900M-160.00 0L740.00 900M-152.00 0L748.00 900M-144.00 0L756.00 900M-136.00 0L764.00 900M-128.00 0L772.00 900M-120.00 0L780.00 900M-112.00 0L788.00 900M-104.00 0L796.00 900M-96.00 0L804.00 900M-88.00 0L812.00 900M-80.00 0L820.00 900M-72.00 0L828.00 900M-64.00 0L836.00 900M-56.00 0L844.00 900M-48.00 0L852.00 900M-40.00 0L860.00 900M-32.00 0L868.00 900M-24.00 0L876.00 900M-16.00 0L884.00 900M-8.00 0L892.00 900M0.00 0L900.00 900M8.00 0L908.00 900M16.00 0L916.00 900M24.00 0L924.00 900M32.00 0L932.00 900M40.00 0L940.00 900M48.00 0L948.00 900M56.00 0L956.00 900M64.00 0L964.00 900M72.00 0L972.00 900M80.00 0L980.00 900M88.00 0L988.00 900M96.00 0L996.00 900M104.00 0L1004.00 900M112.00 0L1012.00 900M120.00 0L1020.00 900M128.00 0L1028.00 900M136.00 0L1036.00 900M144.00 0L1044.00 900M152.00 0L1052.00 900M160.00 0L1060.00 900M168.00 0L1068.00 900M176.00 0L1076.00 900M184.00 0L1084.00 900M192.00 0L1092.00 900M200.00 0L1100.00 900M208.00 0L1108.00 900M216.00 0L1116.00 900M224.00 0L1124.00 900M232.00 0L1132.00 900M240.00 0L1140.00 900M248.00 0L1148.00 900M256.00 0L1156.00 900M264.00 0L1164.00 900M272.00 0L1172.00 900M280.00 0L1180.00 900M288.00 0L1188.00 900M296.00 0L1196.00 900M304.00 0L1204.00 900M312.00 0L1212.00 900M320.00 0L1220.00 900M328.00 0L1228.00 900M336.00 0L1236.00 900M344.00 0L1244.00 900M352.00 0L1252.00 900M360.00 0L1260.00 900M368.00 0L1268.00 900M376.00 0L1276.00 900M384.00 0L1284.00 900M392.00 0L1292.00 900M400.00 0L1300.00 900M408.00 0L1308.00 900M416.00 0L1316.00 900M424.00 0L1324.00 900M432.00 0L1332.00 900M440.00 0L1340.00 900M448.00 0L1348.00 900M456.00 0L1356.00 900M464.00 0L1364.00 900M472.00 0L1372.00 900M480.00 0L1380.00 900M488.00 0L1388.00 900M496.00 0L1396.00 900M504.00 0L1404.00 900M512.00 0L1412.00 900M520.00 0L1420.00 900M528.00 0L1428.00 900M536.00 0L1436.00 900M544.00 0L1444.00 900M552.00 0L1452.00 900M560.00 0L1460.00 900M568.00 0L1468.00 900M576.00 0L1476.00 900M584.00 0L1484.00 900M592.00 0L1492.00 900M600.00 0L1500.00 900M608.00 0L1508.00 900M616.00 0L1516.00 900M624.00 0L1524.00 900M632.00 0L1532.00 900M640.00 0L1540.00 900M648.00 0L1548.00 900M656.00 0L1556.00 900M664.00 0L1564.00 900M672.00 0L1572.00 900M680.00 0L1580.00 900M688.00 0L1588.00 900M696.00 0L1596.00 900M704.00 0L1604.00 900M712.00 0L1612.00 900M720.00 0L1620.00 900M728.00 0L1628.00 900M736.00 0L1636.00 900M744.00 0L1644.00 900M752.00 0L1652.00 900M760.00 0L1660.00 900M768.00 0L1668.00 900M776.00 0L1676.00 900M784.00 0L1684.00 900M792.00 0L1692.00 900M800.00 0L1700.00 900M808.00 0L1708.00 900M816.00 0L1716.00 900M824.00 0L1724.00 900M832.00 0L1732.00 900M840.00 0L1740.00 900M848.00 0L1748.00 900M856.00 0L1756.00 900M864.00 0L1764.00 900M872.00 0L1772.00 900M880.00 0L1780.00 900M888.00 0L1788.00 900M896.00 0L1796.00 900M904.00 0L1804.00 900M912.00 0L1812.00 900M920.00 0L1820.00 900M928.00 0L1828.00 900M936.00 0L1836.00 900M944.00 0L1844.00 900M952.00 0L1852.00 900M960.00 0L1860.00 900M968.00 0L1868.00 900M976.00 0L1876.00 900M984.00 0L1884.00 900M992.00 0L1892.00 900M1000.00 0L1900.00 900M1008.00 0L1908.00 900M1016.00 0L1916.00 900M1024.00 0L1924.00 900M1032.00 0L1932.00 900M1040.00 0L1940.00 900M1048.00 0L1948.00 900M1056.00 0L1956.00 900M1064.00 0L1964.00 900M1072.00 0L1972.00 900M1080.00 0L1980.00 900M1088.00 0L1988.00 900M1096.00 0L1996.00 900M1104.00 0L2004.00 900M1112.00 0L2012.00 900M1120.00 0L2020.00 900M1128.00 0L2028.00 900M1136.00 0L2036.00 900M1144.00 0L2044.00 900M1152.00 0L2052.00 900M1160.00 0L2060.00 900M1168.00 0L2068.00 900M1176.00 0L2076.00 900M1184.00 0L2084.00 900M1192.00 0L2092.00 900M1200.00 0L2100.00 900M1208.00 0L2108.00 900M1216.00 0L2116.00 900M1224.00 0L2124.00 900M1232.00 0L2132.00 900M1240.00 0L2140.00 900M1248.00 0L2148.00 900M1256.00 0L2156.00 900M1264.00 0L2164.00 900M1272.00 0L2172.00 900M1280.00 0L2180.00 900M1288.00 0L2188.00 900M1.00 0L-899.00 900M9.00 0L-891.00 900M17.00 0L-883.00 900M25.00 0L-875.00 900M33.00 0L-867.00 900M41.00 0L-859.00 900M49.00 0L-851.00 900M57.00 0L-843.00 900M65.00 0L-835.00 900M73.00 0L-827.00 900M81.00 0L-819.00 900M89.00 0L-811.00 900M97.00 0L-803.00 900M105.00 0L-795.00 900M113.00 0L-787.00 900M121.00 0L-779.00 900M129.00 0L-771.00 900M137.00 0L-763.00 900M145.00 0L-755.00 900M153.00 0L-747.00 900M161.00 0L-739.00 900M169.00 0L-731.00 900M177.00 0L-723.00 900M185.00 0L-715.00 900M193.00 0L-707.00 900M201.00 0L-699.00 900M209.00 0L-691.00 900M217.00 0L-683.00 900M225.00 0L-675.00 900M233.00 0L-667.00 900M241.00 0L-659.00 900M249.00 0L-651.00 900M257.00 0L-643.00 900M265.00 0L-635.00 900M273.00 0L-627.00 900M281.00 0L-619.00 900M289.00 0L-611.00 900M297.00 0L-603.00 900M305.00 0L-595.00 900M313.00 0L-587.00 900M321.00 0L-579.00 900M329.00 0L-571.00 900M337.00 0L-563.00 900M345.00 0L-555.00 900M353.00 0L-547.00 900M361.00 0L-539.00 900M369.00 0L-531.00 900M377.00 0L-523.00 900M385.00 0L-515.00 900M393.00 0L-507.00 900M401.00 0L-499.00 900M409.00 0L-491.00 900M417.00 0L-483.00 900M425.00 0L-475.00 900M433.00 0L-467.00 900M441.00 0L-459.00 900M449.00 0L-451.00 900M457.00 0L-443.00 900M465.00 0L-435.00 900M473.00 0L-427.00 900M481.00 0L-419.00 900M489.00 0L-411.00 900M497.00 0L-403.00 900M505.00 0L-395.00 900M513.00 0L-387.00 900M521.00 0L-379.00 900M529.00 0L-371.00 900M537.00 0L-363.00 900M545.00 0L-355.00 900M553.00 0L-347.00 900M561.00 0L-339.00 900M569.00 0L-331.00 900M577.00 0L-323.00 900M585.00 0L-315.00 900M593.00 0L-307.00 900M601.00 0L-299.00 900M609.00 0L-291.00 900M617.00 0L-283.00 900M625.00 0L-275.00 900M633.00 0L-267.00 900M641.00 0L-259.00 900M649.00 0L-251.00 900M657.00 0L-243.00 900M665.00 0L-235.00 900M673.00 0L-227.00 900M681.00 0L-219.00 900M689.00 0L-211.00 900M697.00 0L-203.00 900M705.00 0L-195.00 900M713.00 0L-187.00 900M721.00 0L-179.00 900M729.00 0L-171.00 900M737.00 0L-163.00 900M745.00 0L-155.00 900M753.00 0L-147.00 900M761.00 0L-139.00 900M769.00 0L-131.00 900M777.00 0L-123.00 900M785.00 0L-115.00 900M793.00 0L-107.00 900M801.00 0L-99.00 900M809.00 0L-91.00 900M817.00 0L-83.00 900M825.00 0L-75.00 900M833.00 0L-67.00 900M841.00 0L-59.00 900M849.00 0L-51.00 900M857.00 0L-43.00 900M865.00 0L-35.00 900M873.00 0L-27.00 900M881.00 0L-19.00 900M889.00 0L-11.00 900M897.00 0L-3.00 900M905.00 0L5.00 900M913.00 0L13.00 900M921.00 0L21.00 900M929.00 0L29.00 900M937.00 0L37.00 900M945.00 0L45.00 900M953.00 0L53.00 900M961.00 0L61.00 900M969.00 0L69.00 900M977.00 0L77.00 900M985.00 0L85.00 900M993.00 0L93.00 900M1001.00 0L101.00 900M1009.00 0L109.00 900M1017.00 0L117.00 900M1025.00 0L125.00 900M1033.00 0L133.00 900M1041.00 0L141.00 900M1049.00 0L149.00 900M1057.00 0L157.00 900M1065.00 0L165.00 900M1073.00 0L173.00 900M1081.00 0L181.00 900M1089.00 0L189.00 900M1097.00 0L197.00 900M1105.00 0L205.00 900M1113.00 0L213.00 900M1121.00 0L221.00 900M1129.00 0L229.00 900M1137.00 0L237.00 900M1145.00 0L245.00 900M1153.00 0L253.00 900M1161.00 0L261.00 900M1169.00 0L269.00 900M1177.00 0L277.00 900M1185.00 0L285.00 900M1193.00 0L293.00 900M1201.00 0L301.00 900M1209.00 0L309.00 900M1217.00 0L317.00 900M1225.00 0L325.00 900M1233.00 0L333.00 900M1241.00 0L341.00 900M1249.00 0L349.00 900M1257.00 0L357.00 900M1265.00 0L365.00 900M1273.00 0L373.00 900M1281.00 0L381.00 900M1289.00 0L389.00 900M1297.00 0L397.00 900M1305.00 0L405.00 900M1313.00 0L413.00 900M1321.00 0L421.00 900M1329.00 0L429.00 900M1337.00 0L437.00 900M1345.00 0L445.00 900M1353.00 0L453.00 900M1361.00 0L461.00 900M1369.00 0L469.00 900M1377.00 0L477.00 900M1385.00 0L485.00 900M1393.00 0L493.00 900M1401.00 0L501.00 900M1409.00 0L509.00 900M1417.00 0L517.00 900M1425.00 0L525.00 900M1433.00 0L533.00 900M1441.00 0L541.00 900M1449.00 0L549.00 900M1457.00 0L557.00 900M1465.00 0L565.00 900M1473.00 0L573.00 900M1481.00 0L581.00 900M1489.00 0L589.00 900M1497.00 0L597.00 900M1505.00 0L605.00 900M1513.00 0L613.00 900M1521.00 0L621.00 900M1529.00 0L629.00 900M1537.00 0L637.00 900M1545.00 0L645.00 900M1553.00 0L653.00 900M1561.00 0L661.00 900M1569.00 0L669.00 900M1577.00 0L677.00 900M1585.00 0L685.00 900M1593.00 0L693.00 900M1601.00 0L701.00 900M1609.00 0L709.00 900M1617.00 0L717.00 900M1625.00 0L725.00 900M1633.00 0L733.00 900M1641.00 0L741.00 900M1649.00 0L749.00 900M1657.00 0L757.00 900M1665.00 0L765.00 900M1673.00 0L773.00 900M1681.00 0L781.00 900M1689.00 0L789.00 900M1697.00 0L797.00 900M1705.00 0L805.00 900M1713.00 0L813.00 900M1721.00 0L821.00 900M1729.00 0L829.00 900M1737.00 0L837.00 900M1745.00 0L845.00 900M1753.00 0L853.00 900M1761.00 0L861.00 900M1769.00 0L869.00 900M1777.00 0L877.00 900M1785.00 0L885.00 900M1793.00 0L893.00 900M1801.00 0L901.00 900M1809.00 0L909.00 900M1817.00 0L917.00 900M1825.00 0L925.00 900M1833.00 0L933.00 900M1841.00 0L941.00 900M1849.00 0L949.00 900M1857.00 0L957.00 900M1865.00 0L965.00 900M1873.00 0L973.00 900M1881.00 0L981.00 900M1889.00 0L989.00 900M1897.00 0L997.00 900M1905.00 0L1005.00 900M1913.00 0L1013.00 900M1921.00 0L1021.00 900M1929.00 0L1029.00 900M1937.00 0L1037.00 900M1945.00 0L1045.00 900M1953.00 0L1053.00 900M1961.00 0L1061.00 900M1969.00 0L1069.00 900M1977.00 0L1077.00 900M1985.00 0L1085.00 900M1993.00 0L1093.00 900M2001.00 0L1101.00 900M2009.00 0L1109.00 900M2017.00 0L1117.00 900M2025.00 0L1125.00 900M2033.00 0L1133.00 900M2041.00 0L1141.00 900M2049.00 0L1149.00 900M2057.00 0L1157.00 900M2065.00 0L1165.00 900M2073.00 0L1173.00 900M2081.00 0L1181.00 900M2089.00 0L1189.00 900M2097.00 0L1197.00 900M2105.00 0L1205.00 900M2113.00 0L1213.00 900M2121.00 0L1221.00 900M2129.00 0L1229.00 900M2137.00 0L1237.00 900M2145.00 0L1245.00 900M2153.00 0L1253.00 900M2161.00 0L1261.00 900M2169.00 0L1269.00 900M2177.00 0L1277.00 900M2185.00 0L1285.00 900" fill="none" stroke="#222" stroke-width="0.68"/>
<g font-family="'Liberation Sans',sans-serif" font-weight="bold" font-size="11" text-anchor="middle">
<text x="81.0" y="282.3" fill="#0a1a0a">1.0</text>
<text x="35.7" y="358.5" fill="#0a1a0a">0.8</text>
<text x="213.5" y="282.3" fill="#0a1a0a">1.0</text>
<text x="258" y="336.9" fill="#0a1a0a">1.0</text>
<text x="358" y="393.2" fill="#0a1a0a">0.7</text>
<text x="331.4" y="432.7" fill="#0a1a0a">0.6</text>
<text x="160" y="384.8" fill="#0a1a0a">0.8</text>
<text x="780.5" y="295.7" fill="#0a1a0a">0.7</text>
<text x="823" y="283.3" fill="#0a1a0a">0.7</text>
<text x="872.8" y="272" fill="#0a1a0a">0.7</text>
<text x="930.1" y="309.7" fill="#0a1a0a">0.7</text>
<text x="882.2" y="339.7" fill="#0a1a0a">0.7</text>
<text x="1070" y="357.4" fill="#0a1a0a">0.8</text>
<text x="1115.2" y="378.2" fill="#0a1a0a">0.7</text>
<text x="1100" y="414.3" fill="#0a1a0a">0.7</text>
<text x="1008.2" y="308.7" fill="#0a1a0a">0.6</text>
<text x="1099.2" y="321" fill="#0a1a0a">0.9</text>
<text x="1001.5" y="526.3" fill="#0a1a0a">0.5</text>
<text x="1016" y="898.5" fill="#0a1a0a">1.0</text>
</g>
<g id="purple">
<path d="M617.2 223.8L628.2 222.8L636.8 226.8L642.8 233.5L651.8 232.3L658.2 239.9L660.8 234.2L662.8 232.3L667.2 231.1L668.8 231.3L675.7 239.3L678.8 246.4L692.8 239.6L701.2 243.2L705.8 250.3L706.9 253.2L703.2 263.7L695.6 274.2L699.8 276.8L702.2 279.2L705.4 285.8L710.7 292.8L715.2 301.3L717.7 297.2L725.8 289.2L733.8 285.2L735.7 285.8L740.2 288.7L746.8 296.8L753.2 299.9L759.2 298.6L768.2 294.1L778.2 294.1L783.8 290.8L791.8 288.6L793.7 289.2L798.2 292.4L805.2 291.1L808.8 289.6L816.7 284.8L823.2 283.2L824.8 283.8L830.2 288.6L834.8 290L839.2 284.2L842.2 281.8L860.3 270.2L867.3 266.8L869.8 266.8L871.4 269.2L873.4 284.2L872.4 298.8L869.4 315.2L861.2 347.7L856 358.2L848.2 379.2L837.7 394.3L824.8 406.8L818.2 410.8L806.2 416.2L796.2 417.9L784.2 421.4L773.2 426.9L770.8 429.3L766.3 435.2L757.8 443.7L755.8 443.8L754.3 443.2L745.8 437.5L744.2 437.9L739 442.2L734.2 450.2L732.8 451.8L728.2 455.2L726.8 455.3L725.7 454.8L724.8 453.1L723.2 443.8L724.5 432.8L722.8 432.4L709.9 435.2L707.8 433.2L706.2 428.2L709.8 416.3L711.2 414.8L716.8 411.5L720.1 407.2L721.1 396.8L723.6 387.8L725.1 378.2L723.8 372.5L722.2 372.5L719.8 373.4L702.8 384.8L691.2 390.5L684.2 394.8L675.2 399.2L666.8 401.8L661.8 398.7L660.2 397.1L660.2 386.2L661 380.8L657.2 376.9L649.2 373.8L642.3 366.8L640.6 361.8L639.2 359.9L635.2 359.4L629.2 361.4L614.2 369.7L611.8 369.7L607.3 364.3L606.7 362.8L606.2 350.8L607.1 344.2L600.8 337.8L591.3 324.2L591.2 322.2L592.3 315.8L597.1 307.2L596.3 299.8L608.5 287.8L606.7 274.2L609.6 262.8L611.1 248.2L610.8 231.8ZM224.3 244.2L226.2 244.3L234.8 248.4L243.2 244.6L251.2 248.3L253.2 250.2L256.7 257.2L258 265.8L261.8 268.4L262 267.8L259.1 258.2L260.8 250.8L261.8 249.2L263.8 247.8L266.8 246.2L269.7 246.2L278.2 250.7L287.3 259.8L294.2 268.2L299.8 281.3L300.9 287.2L301.9 293.8L301.9 312.8L302.9 321.8L302.9 328.8L302.4 330.2L301.9 341.2L299.7 350.8L297.2 353.7L290.2 355.4L285.3 353.2L272.2 346.2L263.3 337.2L259.1 325.8L261.5 310.8L261.2 309.5L258.8 312.2L251.7 315.8L250.2 315.9L243.3 314.2L240.8 313.2L234.2 308.3L227.3 299.8L222.8 290.8L218.8 279.2L217 264.8L215.1 256.8L215.6 250.2L216.3 248.2L218.2 246.3ZM434.2 250.3L444.7 249.2L455.2 253.5L465.2 256.8L471.7 264.2L473.9 276.2L473.9 278.8L470.7 292.2L465.2 304.2L459.9 311.8L454.9 323.2L453.9 336.2L458.3 345.2L456.8 354.2L455.8 355.8L453.8 357.2L447.2 358.8L443.8 357.8L433.8 351.9L423.3 349.2L421.8 347.8L419.8 344.2L419.8 342.8L424.1 334.2L424.6 331.2L425.1 324.2L424.6 314.8L424.1 310.2L421.5 300.2L414.6 291.2L418.8 269.3L423.8 258.8ZM89.8 260.8L97.2 262.2L99.3 263.8L103.2 269.3L107.4 278.8L110.2 282.8L110.8 284.8L109.9 287.8L109.9 289.8L114.2 301.8L117.2 314.9L119.2 313.2L138.3 288.8L142.8 283.8L148.8 280.2L152.2 279.2L157.8 278.7L159.8 280.3L162.2 285.4L162.3 287.8L161.3 295.8L159.2 301.6L157.7 305.2L153.2 311.2L142.9 322.2L141.4 327.2L146.8 334.8L150.2 341.8L150.3 343.2L148.2 352.2L140.7 358.2L130.6 361.8L122.2 362.8L119.4 362.8L112.3 359.8L105.8 352.1L103.7 343.2L104.6 337.2L104.2 336.3L90.2 331L89.3 333.8L83.8 339.8L81.6 341.2L84.2 343.8L86 349.2L86.8 349.6L90.8 348.5L93.8 342.8L96.2 340.3L98.2 339.3L99.6 339.2L100.7 340.2L100.8 342.8L99.2 348.7L96.4 355.2L97.2 360.2L95.2 362.2L88.8 363.8L86.8 363.2L80.8 359.2L74.8 353.4L62.2 353.4L42.2 355.4L34.8 353.8L28.3 350.8L24.3 345.8L24.3 343.2L31.8 336.3L40.8 332.7L54.2 330.1L65.2 324.8L67.8 324.2L79.2 322.7L85.8 325.1L87 324.8L85.2 318.2L85.6 306.8L80.2 289.2L84.6 278.2L84.6 276.8L83.1 273.2L83.2 264.8L84.7 263.3ZM311.8 267.2L316.8 268.8L319.2 270.8L323.7 276.8L329.2 288.8L332.4 304.8L334 317.8L338 329.2L341.2 336.8L343 348.2L344.5 354.2L347.5 363.8L352.7 374.2L357.4 385.8L358.4 400.8L355.2 413.7L350.7 424.8L349.2 426.2L341.8 430.4L331.2 427.7L321.8 420.7L319.8 418.7L315.6 409.2L317.6 395.2L320.9 384.8L314.5 363.2L308.2 346.2L304.6 331.2L304.1 308.2L303.6 306.2L304.1 283.2L305.6 274.2L306.7 271.8ZM61.3 291.2L62.8 291.3L64.2 292.8L66.3 297.2L66.3 307.2L65.2 311.8L63.2 313.3L59.8 312.2L57.3 309.7L55.7 303.2L56.8 294.8ZM28.4 295.2L31.8 296.7L33.7 298.8L33.8 300.2L32.8 303.7L31.2 305.3L27.2 306.3L23.3 302.7L23.2 300.2L23.8 298.2L25.2 296.7ZM502.2 302.3L514.8 301.3L521.2 307.8L521.4 319.2L523.3 326.2L526.2 326.6L531.2 325.7L538.8 325.6L546.8 326.3L559.8 338.7L568.2 345.4L569.4 358.8L572.4 367.8L572.4 382.2L569 391.2L568.9 392.8L572.9 414.2L572.4 429.2L567.8 443.2L559.7 454.8L556.8 458.2L555.2 459.2L546.2 456.4L535.8 455.2L529.8 453.2L527.7 450.8L527.8 440.8L533 430.2L531.1 419.2L527.7 410.2L529.2 401.3L531.8 398.2L548.8 391.3L551.9 392.2L550.6 386.8L546.2 380.3L544.8 378.9L538.8 377.6L530.2 381.2L519.8 382.9L515.2 384.9L509.8 388.2L504.3 395.2L502.8 396.2L495.8 394.7L493.3 392.3L490.2 386.1L489.2 374.2L492.8 368.8L498.9 362.2L498.1 357.2L497.1 354.8L494.2 351.5L483.8 350.4L469.2 345.7L467.3 343.8L466.8 342.2L466.6 340.2L467.8 337.8L478.3 321.2L491.2 308.7ZM179.3 341.8L180.8 341.8L184.2 343.8L186.3 345.2L187.7 347.2L190.4 355.8L189.4 368.2L185.2 377.7L180.8 383.2L177.8 385.7L170.2 387.9L166.8 386.7L164.7 384.8L161.8 378.2L162.6 364.8L164.8 355.3L166.3 352.2L172.2 345.3ZM135.8 373.3L147.2 370.8L153.2 373.8L155.7 375.8L157.9 383.8L157.8 394.7L153.3 406.7L148.3 413.2L140.8 419.2L133.2 422.5L132 423.8L133 429.8L133.8 430.1L138.8 430L145.8 426.6L148.2 427.2L151.8 431.8L151.8 441.2L149.8 443.2L136.7 453.2L128.2 456.9L123.3 456.2L120.3 453.8L116.8 445.8L111.2 426.5L90.2 431.4L81.8 429.7L79.8 428.2L79.8 426.8L88.2 418.2L96.8 411.7L103.2 405.2L107.7 395.8L109.8 393.8L115.8 390.7L123.8 381.2ZM982.8 372.3L985.7 372.2L986.8 373.2L988.8 377.8L988.8 379.2L985.2 386.2L979.9 393.2L975.2 404.8L969.4 412.2L968.9 413.8L968.2 424.2L967.2 425.2L965.3 425.2L963.2 423.8L962.1 422.2L962.1 406.8L961.1 398.2L961.2 383.8L964.8 376.8L966.3 375.3L969.8 375.3L974.2 378.4L979.2 373.8ZM843.8 408.8L845.6 408.8L846.7 409.8L847.8 413.2L847.7 414.8L844.7 420.2L843.2 421.7L837.8 422.7L836.2 420.8L836.3 413.8L837.8 412.3ZM926.8 415.2L929.2 415.2L930.2 416.2L934.7 422.2L940.2 431.8L943.9 444.2L944.2 458.3L945.6 450.8L948.1 427.8L949.3 425.2L952.8 420.3L955.2 420.3L958.2 421.8L959.7 423.3L961.9 432.2L960.9 446.8L956.2 459.2L950.8 466.2L948.8 466.2L945.8 463.3L945.2 463.1L944.9 463.8L946 469.2L949.2 477.3L949.3 479.8L947.4 491.2L945.8 505.2L942.2 515.8L940.2 518.2L931.2 523.2L921.8 524.3L919.2 522.7L914.2 518.1L910.6 495.8L902.8 485.2L899.9 489.2L894.2 504.2L887.2 518.2L881.7 522.7L879.2 522.7L878.2 521.7L874.2 513.7L868.2 493.8L867.1 483.8L870.8 473.2L878.3 459.8L886.2 452.2L889.8 449.8L890.8 449.8L894.7 451.8L896.8 453.8L900.8 461.2L901.1 448.2L902.8 444.8L906.3 438.8L914.5 428.8L919.8 420.2L921.7 418.3ZM809.4 418.8L814.2 418.7L816.2 420.2L816.8 423.2L817.2 432.7L814.2 442.2L808.8 450.8L807.2 451.8L799.9 451.8L798.2 449.8L798.2 442.3L803.1 435.8L804.6 432.8L806.6 427.8L807.8 420.4ZM838.8 435.8L848.2 434.7L849.8 436.3L851.9 443.8L851.8 445.2L845.8 450.8L841.8 456.3L839.3 458.7L838.3 458.8L836.8 457.2L834.6 452.8L834.8 441.8L836.8 437.8ZM1091.3 458.8L1096.2 458.6L1098.2 460.2L1100.8 464.8L1101.9 472.8L1097.2 479.3L1092 481.8L1088.4 491.2L1086.2 500.2L1081.9 512.2L1081.2 521.7L1080.2 522.8L1078.2 522.9L1075.2 521.7L1072.8 519.2L1068.6 510.8L1062.3 502.8L1059.2 497.7L1058.2 495.2L1058.7 488.2L1059.7 485.2L1061.8 484.7L1071.2 490.7L1072.2 490.7L1079.2 482.7L1085.5 474.2L1086.2 464.8ZM215.3 459.2L223.8 460.3L225.2 461.8L228.7 468.8L228.9 481.2L230.4 493.2L235.8 501.2L234.7 513.8L226.8 521.7L218.8 524.8L206.8 519.2L195.8 511.9L190.2 511.7L188.8 510.2L188.2 508.7L187.2 500.8L187.2 498.8L190.3 486.8L196.8 474.8L208.2 463.3ZM810.3 464.2L811.8 464.3L813.2 466.2L814.3 472.8L810.2 481.8L808.8 483.2L806.8 483.3L803.8 482.2L801.8 480.2L801.7 479.2L803.8 469.8ZM351.8 473.8L354.7 473.8L362.2 477.6L365.7 478.2L367.2 479.2L373.2 485.8L377.4 495.2L377.9 508.8L373.2 518.7L370.7 521.2L362.8 523.9L360.8 523.2L352.3 517.2L350.3 515.2L342.8 501.8L339.8 494.2L338.7 489.8L338.3 485.8L343.3 479.3L345.8 476.8ZM842.3 528.2L844.2 528.3L845.7 529.8L847.8 533.8L847.9 536.8L846.9 544.8L844.7 550.8L843.3 553.8L842.2 554.7L840.8 554.9L838.2 553.7L836.2 551.7L835.1 539.8L837.3 532.2ZM1072.4 534.8L1073.2 534.8L1074.7 536.2L1076.4 543.2L1074.2 552.2L1073.3 553.8L1070.2 556.3L1068.3 554.8L1066.8 550.7L1066.6 542.2L1069.8 537.2ZM283.4 546.2L288.2 547.8L290.2 549.8L292.3 557.2L292.3 559.2L290.2 568.2L287.3 571.8L284.2 574.3L281.8 573.7L277.8 570.2L275.7 562.2L276.8 552.2L281.8 547.2ZM356.3 551.2L359.2 551.2L360.3 551.8L361.2 553.8L361.8 557.2L361.3 559.2L356.8 563.3L354.8 561.6L353.7 555.2L353.8 553.2ZM317.3 555.2L319.8 555.1L321.3 556.2L324.9 563.2L324.9 582.2L323.9 591.2L323.3 609.8L320.2 625.2L315.8 635.7L308.2 641.7L306.2 642.3L299.2 640.2L296.8 638.2L292.8 630.2L291.6 620.8L288.2 615.3L281.8 609.2L280.6 601.2L285.8 592.2L294.1 581.8L301.8 569.8L306.3 563.8L313.8 556.8ZM132.2 564.3L145.2 561.8L147.2 563.8L149.3 570.2L148.3 572.2L137.8 582.7L126.8 590.2L123.8 591.4L117.8 592.4L115.8 591.8L114.2 589.7L113.6 585.2L119.2 572.2ZM931.8 571.2L933.2 571.1L934.2 571.7L939.4 578.2L939.4 603.8L934.2 624.2L927.2 642.8L923.2 649.2L921.2 651.2L920.2 651.3L918.8 650.2L918.1 648.2L916.1 630.2L916.1 625.2L918.6 597.2L923.8 577.8ZM340.4 571.8L344.8 571.7L346.7 573.2L347.3 577.2L347.2 581.7L344.2 589.8L338.7 599.8L335.2 602.2L332.4 602.2L331.3 601.2L331.2 599.8L333.2 585.3L338.2 573.8ZM363.8 620.8L365.7 620.8L368.8 622.3L370.3 624.8L366.2 633.7L351.8 652.2L342.8 661.3L333.8 666.4L311.8 683.2L298.2 696.3L290.2 702.7L280.8 707.3L274.2 707.3L272.2 705.8L270.2 699.8L270.8 697.8L275.8 689.8L285.8 678.2L295.2 670.8L301.3 667.2L314.2 661.8L336.8 638.8L347.2 631.8L356.8 624.3ZM202.4 644.2L219.8 644.2L221.7 645.8L224.3 657.2L224.2 658.6L215.8 669.7L201.8 672.3L200.2 672.2L198.3 670.2L193.7 655.8L200.3 646.2ZM355.8 662.8L358.8 662.8L362.7 665.8L362.8 667.8L361.8 673.1L354.8 680.2L348.9 680.8L346.8 678.7L345.2 675.7L345.3 673.8L348.7 667.2ZM379.3 713.2L381.6 713.2L383.2 714.8L385.8 723.2L385.8 737.2L385.2 738.7L379.3 746.8L370.3 754.2L358.8 759.7L356.2 759.7L354.8 758.2L352.6 750.8L347.8 745.2L346.2 742.6L349.8 730.8L360.3 722.2ZM527.3 720.8L529.2 720.7L536.8 722.3L538.2 723.8L542.7 732.8L542.8 744.8L540.8 749.9L541.8 750.1L557.8 745.6L566.8 747.1L568.2 747.8L570.2 749.8L572.9 757.2L567.2 769.2L560.3 778.2L551.2 787.2L541.8 791.3L536.2 789.7L534.2 787.6L535.6 777.2L531.8 766.1L531.3 762.2L525.2 771.7L523.2 771.8L520.8 770.8L514.2 766.8L506.8 758.2L503.7 746.8L504.2 743.8L507.8 734.8L513.7 727.8L516.3 725.2ZM1030.3 751.8L1032.6 751.8L1034.2 753.3L1035.3 755.8L1035.2 758.2L1032.2 763.3L1026.9 765.8L1024.8 764.2L1023.2 761.2L1023.2 759.8L1026.2 754.2ZM115.9 836.2L129.2 834.7L137.2 836.3L143.7 843.2L143.8 844.8L136.8 852.3L131.2 861.2L126.3 867.2L124.8 868.7L123.2 868.8L120.7 866.8L109.8 854.2L108.2 852.1L108.2 849.8L109.2 842.4L112.2 839.2ZM787.9 837.8L794.8 840.3L796.7 842.3L797.3 844.8L797.7 851.3L794.3 855.2L790.8 858.3L788.8 858.2L784.8 856.2L782.8 854.2L781.2 846.8L781.2 845.4L782.3 843.8L785.7 839.2ZM429.3 840.8L431.2 841.2L432.2 842.2L434.2 844.2L434.3 845.8L433.2 847.3L426.8 852.2L423.2 854.2L412.2 858.8L381.2 869.4L368.8 875.4L352.8 891.3L346.3 896.2L338.1 903.8L277.1 903.8L277.3 901.8L287.2 887.2L288.8 885.8L302.2 878.3L320.8 873.1L336.2 871.1L352.2 870.1L356.8 869L359.2 866.8L362.2 865.3L395.3 851.2L413.8 846.1ZM987.8 858.8L1000.7 857.8L1007.2 860.3L1012.8 863.3L1018.8 867.2L1024.7 874.8L1026.9 881.2L1026.7 884.3L1025.2 885.7L1020.8 886.9L1016.6 886.3L1016.5 886.8L1019.3 890.8L1017.8 892.7L1009.8 891.8L989.2 885.2L979.2 880.7L972.3 875.2L972.3 872.8L978.8 864.8ZM435.3 871.2L456.8 871.1L471.2 873.6L490.8 878.6L516.2 878.8L530.7 883.8L540.2 890.7L542.7 894.2L545.2 901.3L545.4 903.8L387.1 903.8L387.3 901.8L393.8 889.2L403.2 881.3L407.8 878.8L417.3 874.8ZM579.8 884.8L590.8 886.1L593.2 887.7L594.2 888.8L597.8 896.3L598.9 903.8L564.1 903.8L564.3 901.2L568.8 891.8L570.2 890.3ZM631.8 893.8L641.1 892.8L648.2 896.1L655.2 894.8L656.8 895.8L661.2 901.8L661.4 903.8L624.1 903.8L624.2 902.4L625.3 900.8Z" fill="#6e4a72" fill-rule="evenodd"/>
<path d="M621.4 227.8L626.8 227.3L633.8 230.5L639.2 236.7L641.2 238L645.2 238.3L649.8 237.6L654.4 243.2L657.2 244.8L659.2 244.7L661.3 243.8L662.6 242.2L664.9 236.8L667 236.2L672 241.8L675 248.8L677.2 250.2L679.8 250L692.8 243.4L699 245.8L702.9 252.2L703.1 253.8L700.4 261.8L691.8 272.8L691.2 274.8L691.4 276.8L693 279.2L696.9 282.2L699.8 289.2L705.1 296.8L709.8 306.2L715.8 311.7L719.2 313.6L722.2 313.2L725.2 311.1L732.8 300.1L735.8 304L738.8 306.8L741.2 307.8L745.8 307.9L753.2 306.5L769.2 298.2L779.3 297.9L785.2 294.6L790.8 293.1L791.8 293L795.2 295.4L797.8 296.3L806.2 294.8L810.8 292.9L817.8 288.4L822.2 287L823.2 287L829.2 291.4L832.8 292.6L835.2 292.6L837.2 291.3L842.2 284.9L861.8 272.6L868.2 269.7L869.7 275.2L870.8 287.8L869.4 301.8L866.7 314.2L858.2 346.8L852.8 356.8L843.8 377.8L832.2 391.2L820.2 400.7L810.3 405.6L803.8 407.9L791.8 409.5L782.7 412.1L780.2 413.4L763.2 425.4L759.2 426.7L751.2 424.4L736.2 422.1L732.2 419.9L729.1 417.2L728.6 412.8L726.7 406.8L725.8 401.7L726.1 397.8L729 386.2L730.2 378.2L728 371.8L726 369.8L721.8 369.4L717.8 370.9L709.9 375.8L701.9 383.8L697 386.2L680.2 391.7L674.2 392.3L672.3 391.8L665.8 385.9L664.5 383.8L664.1 379.2L659.8 374.2L651.8 369.7L647.2 363.8L645.1 357.8L642.8 355.5L640.8 354.7L635.2 354.4L624.2 357.5L618.2 357.5L614.2 354.5L613.4 352.8L612.5 348.2L612.4 341.8L610 334.8L610.7 330.8L610.5 327.8L609.5 324.2L607 320.2L609.1 311.2L607.9 303.8L614.8 293.3L615.7 290.2L615.5 286.8L612.9 275.2L614.8 263.8L615.6 249.2L615.2 233.8L619.2 228.4ZM219.2 249.3L225.8 247.4L234.2 251.5L235.8 251.4L243.2 248L249.8 251L253.8 258.2L254.7 264.8L255.6 267.2L260.2 270.8L262.8 276.2L264.2 288.2L262.2 302.2L258.3 309.8L251.2 313.6L242.2 311.6L235.2 306.4L229.1 298.8L224.9 290.2L220.8 278.2L219.7 264.2L217.9 255.8L218.5 251.2ZM267.2 248.2L269.2 248.2L276.8 252L285.6 260.8L292.5 269.2L298 282.2L300 294.8L299.8 312.8L300.7 327.8L299.5 340.2L297.4 349.8L296.2 351.3L292.8 352.4L290.2 352.7L279.8 347.8L273.2 343.9L265.2 336L261.3 325.2L263.3 312.2L266 303.2L267 285.8L265.9 272.2L263 265.2L261.1 257.8L263 250.8ZM442.6 251.8L464.2 259.4L469.2 265.7L471.3 277.2L468.1 291.2L466.6 294.8L462.8 302.3L456.8 309.8L454.9 313.2L451.2 322.2L450.1 331.2L448.8 334.4L446.8 336.9L443.8 338.7L438.8 338L436.2 336.9L433.2 334.7L430.7 330.8L429.5 327.8L428.6 313.8L427.3 307.2L424.4 298.8L417.9 290.2L421.4 270.2L426.1 260.2L435.2 253ZM87.2 266.6L91.2 264.9L96.1 266.2L99.7 271.8L100.2 273.8L99.8 276.2L98.3 278.2L95.8 280.2L91.2 280.4L90.1 279.8L89 278.2L87 272.2L86.9 267.8ZM311.5 269.2L313.2 269.2L317.6 271.2L322.4 277.8L327.7 289.2L330.9 305.2L332.5 318.2L339.2 337.8L340.3 348.8L341.9 355.2L344.9 364.8L350.2 374.8L355.3 386.2L356.4 399.8L353.3 412.8L348.9 423.8L341.8 428.1L331.8 425.6L322.6 418.8L320.6 415.8L317.7 408.8L319.8 395.8L323.5 384.2L317.1 362.2L310.5 345.2L307.9 337.2L306.2 330.8L306.1 323.2L305.6 321.2L305.1 293.2L305.7 283.8L307.7 273.2ZM152.5 287.2L154.1 287.2L154.2 290.8L153.5 294.8L150.3 302.2L144.4 309.8L141.2 312.5L138.2 313.8L134.8 313.5L134 311.8L134 309.2L134.5 307.2L136.2 304.2L146.8 290.7ZM92.2 305.1L101.8 302.8L109.2 306.6L110.7 308.2L112.7 315.8L110.7 324.8L104.8 331.7L97.8 330.9L91.2 324.8L88.3 317.7L88.2 311.2L88.8 309.7ZM512.2 304.8L513.8 305.1L517.8 309.2L518 320.2L519.5 326.8L516.8 332.8L511.2 338.4L501.8 342.3L493.8 347.9L484.8 346.9L470.7 342.2L470.3 341.2L470.7 339.8L481.2 323.2L493.2 311.6L503.2 305.7ZM536.1 332.8L543.8 333.3L555.4 344.2L562 348.8L568.9 369.2L568.8 381.2L566.2 388.8L565.2 390.8L564.2 391.4L556.8 393.6L553.7 384.8L547.8 374.5L543.2 368L538 363.8L531.8 360.9L520.7 358.8L518.4 357.8L517.8 356.8L517.6 354.8L521.2 351.7L522.9 349.2L524.2 339.2L525.7 335.8L529.8 333.8ZM48.1 333.8L53.8 334.2L56.6 335.8L60.2 338.8L64 339.8L58.7 348.2L54.8 351.3L44.2 353.1L40.2 352.5L34.2 351L30.2 349L28.8 347.9L27.3 345.8L26.8 344.8L27.2 343.8L33.2 338.3L43.2 334.6ZM125.7 337.2L129.8 337.8L133.5 340.2L137.1 345.8L137 348.2L135.8 350.7L133.2 352.2L128.2 353.8L121.2 354.3L117.2 351.9L116.3 348.8L116.5 346.2L119.8 339.5L122.2 337.9ZM178.9 344.2L180.8 344.1L184.9 346.8L185.9 348.2L188.4 356.8L187.3 367.8L183.4 376.8L179 382.2L177 383.8L170.8 385.8L167.8 384.8L166.2 383.4L163.7 377.2L164.7 365.2L166.7 356.2L168.1 353.2L173.1 347.2ZM146.1 372.8L147.2 372.9L153.8 376.3L156.1 385.2L156 393.8L154.5 398.2L151.6 405.8L146.2 412.8L139.8 417.5L136.2 419.2L129.8 421.8L122.2 423.7L111.8 423.9L90.2 429.2L82.8 427.6L82.8 426.8L89.2 420.2L97.8 413.7L104.8 406.7L109.2 397.2L110.8 395.7L116.8 392.4L124.8 382.8L136 375.2ZM983.4 375.8L984.2 375.9L985.1 377.8L984.8 379.7L982.2 384.5L977 391.8L972.4 402.8L965.8 411.7L964.4 397.3L964.4 385.8L964.8 384.2L967.8 378.6L968.8 378.6L972.8 381.5L974.7 381.8L976.8 380.9L981 376.8ZM563.9 395.2L564.8 395.2L565 395.8L569.4 416.2L568.8 428.2L564.7 440.2L553.8 453.2L547.2 451.2L537.8 450.1L533.2 448.7L532.7 447.8L532.6 442.2L536.8 430.2L535.6 422.2L535.4 415.8L533.8 409.8L535 403.8L547.8 398L551.2 400.6L554.8 400.7ZM927.7 417.2L928.2 417.3L932.9 423.2L937.2 430.2L941.5 442.8L942 445.2L942 458.2L944.3 476.2L944.1 478.8L939.7 485.8L938.5 488.8L935.3 501.8L930.8 504.4L924.8 508.9L923.2 509.1L921.8 508.4L920.5 506.2L918.7 495.2L917.6 492.2L916.1 490.2L910.4 485.8L906.2 481.1L902.6 472.2L905.9 462.2L904 449.8L905 446.2L908.3 439.8L916 430.2L921.8 421.1ZM954.2 423.2L956.7 424.2L957.5 425.8L959.1 433.3L958.6 441.8L958 446.2L954.3 456.8L950.3 462.2L949.2 462.7L947.1 460.2L950.4 431.2L951.2 427.8ZM139.8 433.2L146.2 430.5L148.4 433.2L148.7 438.8L148.2 440.1L134.2 450.7L127.8 452.9L124.3 451.8L123.2 447.8L123.1 443.8L124.6 438.8L126 436.8L130.8 434.3ZM839.8 438.1L847.2 437.2L847.8 437.8L849.3 444.2L844 449.2L839.9 454.8L838.8 455.4L837 451.8L837.2 442.2ZM890.2 452.8L893.2 454.1L894.5 455.2L897.7 461.2L897.8 473.2L900.9 481.8L893.8 490.6L888.8 494L882.2 491.2L876.8 489.7L872.2 485.1L871.6 481.8L873.5 473.8L880.5 461.2ZM1091.8 461.2L1094.8 460.8L1096.2 461.4L1098.7 465.8L1099.6 472.2L1095.8 477.7L1090.2 480.2L1087.3 485.8L1083.4 490.2L1081.9 494.8L1080.8 501.2L1077.4 511.2L1076.8 515.9L1070.2 504.6L1069.5 500.8L1070.1 499.8L1076.5 495.8L1079.2 492.8L1081 489.8L1083.7 481.2L1087.7 474.8L1088.4 465.8ZM215.5 462.2L220.2 462.4L222.6 463.2L225.9 469.8L226 488.2L223.6 497.8L221.4 501.2L215.2 506.4L208.7 509.6L206.8 508.7L201.2 503.9L197.2 502L194 493.2L193.6 487.8L194.8 484.3L199.3 475.8L209.2 465.9ZM362 488.2L367.2 488.5L370.2 490.3L374 496.2L374.7 503.8L374.6 508.2L370.2 517.1L368.8 518.3L362.8 520.1L353.8 513.7L351.8 509.8L350.6 504.8L351.6 499.2L354.1 494.8L357.2 491.5ZM839.7 533.8L843.2 531.6L843.8 532.2L845.1 535.8L844 544.2L842 549.8L840.8 551.7L838.9 550.2L837.9 540.8ZM315.2 559.6L318.2 558.3L319.2 558.8L321.8 564.2L321.9 580.8L320.6 599.2L318.2 607.2L314.3 614.2L312.2 622.6L309.1 630.2L305.2 633.2L303.2 632.5L301 628.2L299.5 618.8L298 615.8L294 611.2L286.9 606.8L285.2 601.8L288.8 594.1L296.4 583.8L304.6 571.2L311.2 563ZM132.8 566.4L144.2 564L145.2 564.8L146.9 570.2L145.9 571.8L136.8 580.8L125.8 588.3L120.2 589.8L116.8 589.8L115.8 585.8L120.8 573.7ZM931.7 574.8L932.8 574.5L936.6 579.2L936.6 595.2L936 602.2L932.2 616.8L928.8 623.8L922.8 639.1L922.2 637.8L921.2 628.2L921.6 624.2L920.9 614.8L921.6 598.2L926 579.8ZM364.7 624.8L365.6 625.2L365.6 625.8L361.9 633.2L348.8 650L341.8 657L340.2 658.3L336.2 660.1L329.2 661.3L323.8 663.5L329.6 651.8L338.2 642.5L349.2 634.9L357.2 628.6ZM302.2 673.5L312.9 671.8L309.5 675.8L307.1 679.8L295.2 692.1L286.8 698.7L279.8 702.2L277.2 702.3L276.2 701.8L275.7 699.8L278.6 694.8L288.8 682.4L298.8 674.9ZM527.5 726.8L530.8 726.6L533.2 727.1L534 727.8L537.4 734.8L537.4 743.2L534.5 749.2L526.7 758.8L523.2 764.6L522.2 765L517.2 762.1L511.8 755.5L509.4 746.2L512.6 737.8L518.4 730.8L519.8 729.7ZM557.3 749.2L560.8 749.3L566.7 750.7L569.3 757.2L564.8 766.8L563.1 769.2L558.8 773.6L556.2 774.9L554.8 775.1L552.8 774.4L551.2 773.2L548.2 765.8L544 759.8L543.8 757.2L544.7 754.8L547.2 752.6L550.8 751.1ZM991.8 860L999.8 859.5L1006.8 862.2L1017.6 868.8L1023.6 876.8L1025 881.8L1024.8 883.6L1020.2 884.9L1017.2 884.1L1015.8 884.3L1014.8 885.2L1014.6 886.7L1016.4 890.2L1013.2 890.5L989.8 883.3L980.2 879L974.1 874.2L974.4 873.3L979.2 866.9L987.8 861ZM376.7 864.2L377.9 864.2L367.8 873L351.5 889.2L336.8 901.5L335.6 903.8L279.4 903.8L280.2 901.7L289.5 888.2L302.8 880.7L321.8 875.4L337.2 873.4L353.2 872.3L361.2 870.2ZM436.1 876.2L455.2 876L470.2 878.6L489.8 883.4L514.8 883.6L528.6 888.2L537.2 894.7L540.5 903.8L392 903.8L398.2 891.8L407.2 884.6L418.8 879.6ZM580.3 889.8L583.2 889.7L590.2 891.2L593.2 897.8L594.3 903.7L568.6 903.8L572.8 894.4Z" fill="#9a5f9f" fill-rule="evenodd"/>
<path d="M622.5 231.8L626.2 231.6L630.8 233.5L638.2 241.1L642.2 242.5L647.8 242.4L651.8 247L655.2 248.8L658.8 249.1L662.2 248L664.7 246.2L667.2 242.9L668.5 244.2L671.4 251.2L673.2 253.1L675.2 254L679.8 253.3L692.8 246.5L696.8 247.8L700.1 253.2L699.3 256.8L698.1 260.2L687.8 273.2L686.7 277.8L687.3 281.8L689 284.8L692.1 287.2L694.6 292.8L705.5 308.8L713.2 315.8L721.8 325.9L724.2 327.5L727.2 328.5L730.2 328.5L732.8 327.8L739.8 323.3L742.6 326.2L744.8 327.6L747.8 328.3L750.2 328L751.6 325.8L751.7 317.2L753.8 312.8L758.2 308.2L769.8 301.6L780.2 301L786.8 297.7L790.8 296.6L795.2 299L797.8 299.5L807.2 297.9L812.2 295.9L818.2 291.7L821.8 290.3L828.8 294L832.8 295L835.8 294.7L838.7 292.8L843.2 286.7L863.2 274.3L866.8 273.2L868.1 279.8L868.7 287.3L867.3 301.2L864.4 314.2L855.7 345.8L850 355.8L840.7 375.2L833.8 382.4L827.8 387.3L820.4 391.2L815.8 394.7L806.8 398.8L800.8 400.6L797.2 400.8L776.7 399.7L770.7 401.8L769.4 402.8L769.2 403.8L771.6 408.8L771.5 410.8L770.6 412.7L762.2 419.9L759.2 421.8L756.8 422.5L752.8 421L749.5 418.8L741.2 407.8L742.1 399.8L741.6 397.2L740.8 396.3L738.8 396.5L733.2 401.8L731.8 401.8L731 400.8L730.8 397.2L735 383.8L735.5 380.2L734.3 372.2L733.3 369.2L732.2 368.2L724.8 366.8L721.2 367.1L718.2 368L706.3 373.8L703.4 376.8L701.1 382.2L698.3 384.2L694.2 385.4L688.2 385.4L679.2 388.6L675.2 389.3L668.6 386.2L667.3 384.2L667.1 379.8L665.9 376.8L661.2 371.3L654.4 366.2L651.8 360.8L650.9 354.2L648.8 351.6L644.2 350L636.8 350L633.2 350.4L622.2 354L619.8 354.1L618.2 353.5L617.2 352.2L616.4 348.8L615.9 335.2L621 328.2L621.9 325.2L621.1 321.8L617.5 313.8L617.4 308.2L622.6 301.2L623.6 298.2L618.4 275.2L619.7 264.8L619.2 256.8L619.7 248.8L619.2 235.3L620.9 232.8ZM733.2 353.7L732.3 355.8L733.2 359.2L734.8 361.3L736.2 361.4L738.4 359.8L738.7 357.2L736.2 354.6ZM267.7 249.8L268.8 249.7L275.8 253.2L284.5 261.8L291.3 270.2L296.5 282.8L298.5 295.2L298.1 313.2L298.8 327.2L297.5 339.8L295.5 348.8L294.8 349.6L292.2 350.4L290.8 350.6L286.3 348.8L274.2 342.1L266.8 334.8L263.2 325.2L265 312.8L267.7 303.2L268.5 285.2L267.4 272.2L264.5 264.8L262.8 257.8L264.3 251.8ZM224 250.2L225.8 250.2L234.2 254.2L236.8 253.9L243.2 250.9L248.2 253.2L251.2 258.9L252.2 265.2L253.2 267.8L254.9 269.8L258.7 272.2L260.9 276.8L262.5 287.8L260.5 301.8L257.2 308.3L251.3 311.7L243.2 310.2L236.2 305.1L230.5 297.8L226.5 289.8L222.6 277.8L222.2 263.8L220.6 255.8L221.2 251.2ZM435.8 255.3L443.2 254.1L462.9 261.2L467.2 266.8L468.9 277.2L466 290.2L464.3 294.2L460.8 301L454.2 308.2L451.9 311.8L448.1 321.2L446.8 331.2L444.9 334.2L442.8 335.4L439.2 335L436.2 333.9L434.8 332.8L433.5 330.8L432.6 328.2L432 313.8L431.2 308.8L426.7 297.8L420.5 289.8L423.5 271.2L427.8 261.8ZM90.4 268.8L91.2 268.4L94.2 269.2L96.8 273L97.1 275.8L95.2 278.2L93.2 278L92.2 277.1L90.3 271.8ZM311.6 270.8L312.8 270.3L316.8 272.2L321.3 278.2L326.6 289.8L329.7 305.8L331.3 318.2L337.4 337.8L338 349.2L339.6 355.8L342.8 365.8L348.4 375.8L353.6 386.8L354.7 399.2L351.7 412.2L347.4 422.8L341.8 426.2L332.2 424L326 419.2L322.8 416.3L319.5 408.2L321.6 396.2L325.4 385.8L325.6 383.8L323.4 374.8L318 357.2L309.2 336.8L307.4 330.2L306.8 321.2L306.8 307.8L306.3 304.2L306.8 284.2L308.8 273.9ZM148.1 296.2L147 299.8L141.2 307L138.8 309L138.6 308.2L140.5 305.2ZM101.2 304.2L107.2 306.9L109.1 308.2L111.3 315.8L109.4 324.2L105.2 329.6L103.8 330.4L98.8 329.9L94.8 326.6L92.2 323.8L89.6 317.2L89.7 310.8L93.1 306.2ZM504.1 308.8L512.2 308.1L514.6 310.2L514.9 311.2L515 320.2L516.3 326.8L514 331.2L510.1 335.2L500 339.8L493.2 344.6L485.2 343.9L474.4 340.2L476.4 336.2L483.8 325L488.2 320.4L495.5 313.8ZM48.2 335.8L51.8 336L53.8 336.8L57.4 340.8L57.9 343.2L57.2 345.8L55.9 347.8L53.8 349.5L48.8 350.7L43.2 351.1L34.8 349.1L30.8 347L29.4 345.2L29.5 344.2L34.2 340L42.8 336.8ZM534 339.2L540.8 339.6L542.8 340.9L551.2 349.2L556.1 352.2L557.3 354.8L560.2 358.1L562.8 362.2L565.7 369.2L565.8 379.8L563.4 387.2L562.4 388.8L559.3 389.7L558.5 389.2L556.4 383.2L549.6 371.2L547.8 366.8L547.2 363.2L546.2 361.4L543.8 359.6L533.9 355.2L530.2 351.2L528 346.2L528.2 342.9L530.2 340.5ZM124.3 340.8L129.2 340.9L132.2 342L134.3 345.2L133.8 347.2L132.2 348.4L127.8 350L122.2 350.4L120.2 349.7L118.7 346.8L119.8 343.2L121.2 341.6ZM178.6 346.2L180.2 345.9L182.2 347L184 348.2L184.8 350.2L186.8 357.2L185.7 367.2L182.2 375.4L177.6 381.2L176.2 382.3L170.2 383.9L167.5 382.2L165.3 376.7L166.3 365.8L167.8 358.8L168.9 355.2L173.8 348.9ZM136.2 376.8L146.8 374.4L152.4 377.2L154.6 385.2L154.6 393.2L153.1 397.8L150.4 404.8L145.2 411.5L138.2 416.5L127.8 420.6L121.2 422L111.8 422L90.2 427.2L86.1 426.2L90.2 421.7L99.2 414.8L106.3 407.7L110.8 398.2L117.8 393.6L125.8 383.9ZM969.1 382.8L971.8 384.2L974.2 384.7L976.2 384.4L979.8 382.8L974.5 390.2L970.2 400.8L968.2 403.2L967.3 396.7L967.3 386.2ZM556.8 403.6L561.8 400.8L562.6 401.8L566.3 416.8L565.8 427.8L561.8 438.7L556.8 443.1L547.8 440.2L538.8 439.3L538.6 437.8L539.9 431.2L538.7 421.2L539.8 413.2L539.8 408.5L540.2 407.7L546.2 404.4L549.8 404.9L553.8 404.5ZM926.6 419.8L928.2 419.9L935.8 430.8L940 443.2L940.5 445.7L940.5 458.2L941.5 466.2L941.4 473.8L939.8 478.2L937.8 480.2L914.8 482.8L913.2 482L910.2 478.5L908.2 472.8L909.5 468.2L910 462.8L907 453.8L906.2 449.2L907.8 444.8L911.1 438.8L917.2 431.2L923.2 421.9ZM953.4 428.7L954.8 426.9L955.2 427.4L956.7 433.8L955.7 445.2L952.2 455.4L950.2 458.1L949.8 457.2L952.8 431.8ZM144.2 434.2L145.6 434.2L145.7 438.2L141.8 441.8L132.8 448.3L128.2 449.4L126.4 448.8L125.9 442.8L128.5 438.2L131.8 436.6L140.2 435.9ZM841.5 439.8L845.8 439.5L846.5 440.8L847 443.8L839.2 451.7L839 443.2L840.5 440.2ZM889.8 455.8L891.2 455.6L892.8 456.6L895.4 461.8L895.6 473.8L897.9 481.2L897.2 482.6L892.8 487.3L889.2 489L877.2 486.1L874.9 483.8L874.2 480.8L875.8 474.3L882.2 462.7ZM1093.1 462.8L1094.8 462.8L1096.7 465.8L1097.6 472.2L1094.8 476L1089.2 478.6L1085.8 482.8L1089.4 475.2L1090.2 466.3ZM210.3 467.8L216.7 464.4L220.8 465L223.7 470.3L224.2 484.3L223.9 488.8L221.5 496.2L219.2 499.2L214.8 502.8L210.8 503.7L208.8 502.9L198.5 495.2L196.5 491.8L195.9 488.2L198.3 481.8L201.1 476.8ZM362 491.2L363.8 490.9L366.2 491.2L369.3 493.8L371.2 496.8L372.1 504.2L371.8 507.8L368.2 515.2L363.2 517L355.7 511.8L354.1 508.8L353 504.2L353.5 499.8L355.1 496.8L357.8 493.9ZM842.1 535.2L842.5 535.8L842.2 540.2L841.2 544.5L840.3 541.2ZM317 561.8L317.8 561.9L319.2 564.8L319.3 580.2L317.9 598.8L315.8 603.8L313.2 606.8L309.8 609.3L299.8 609.1L290.8 604.9L289.5 602.8L289.7 600.8L292.4 593.8L311.3 566.7ZM141.7 566.2L143.8 566.2L144.9 570.2L136.2 578.9L124.2 587.1L119.2 588.1L118 587.8L117.7 585.8L122.2 574.7L133.2 568.1ZM928.3 580.8L932.2 577.8L932.8 578L934.2 580.2L934.1 597.8L929.2 615.8L927.9 618.2L926.2 619.5L925.2 618.9L924.1 615.2L924.7 606.2L924.2 598.2ZM356.2 633.8L357.1 633.8L348.2 645.4L340.2 653.9L337.2 656.1L334.2 657.1L331.8 657.1L331.6 655.8L333.1 652.8L340.1 645.2ZM300.7 679.2L300.9 679.8L299.7 681.2L292.8 688.2L286 693.2L291.8 685.9ZM528.3 731.8L530.3 731.8L532.2 735.3L532.4 742.2L530.5 746.2L520.8 758.3L516.2 753.1L514.7 746.2L517 740.2L521.8 734.6ZM549.2 755L558.8 751.9L564.8 753.2L566.4 757.2L561.1 767.2L558.2 769.9L555.2 771L552.7 769.8L547.4 760.2L547.2 758.8L547.8 756.8ZM988.7 862.2L999.2 861L1006.2 863.7L1016.8 870L1022.1 877.2L1023.2 882.3L1020.2 883.2L1017.2 882.6L1015.2 882.9L1013.4 884.8L1013.2 888.2L1011.2 888.5L990.2 881.8L981.2 877.8L976.5 874.2L976.7 872.8L980.2 868ZM360.2 872.6L368.4 869.8L350.2 887.7L335.3 900.2L334.1 901.8L333.7 903.8L281.5 903.8L290.8 889.8L303.8 882.4L321.8 877.4L337.8 875.4L353.8 874.2ZM436.1 880.8L454.8 880.4L469.2 882.9L489.2 887.8L513.8 887.9L526.8 892.3L533.8 897.8L536 903.8L396.9 903.8L401.5 894.8L409.8 888.2L420.4 883.8ZM582.1 893.8L587.3 894.8L589.2 898.8L590 903.8L572.9 903.8L575.8 897.5Z" fill="#c873cf" fill-rule="evenodd"/>
<path d="M623.7 235.2L625.8 235.2L628.8 236.4L636.2 243.9L640.8 246L646.2 246.8L649.2 250.2L652.2 252L655.8 252.7L659.8 252.5L662.8 251.6L666.2 249.8L669.8 255L671.9 256.8L674.2 257.7L677.8 257.2L692.8 249.1L693.8 249.1L695.7 250.2L697.5 253.8L696.2 258.4L690.8 265.8L685.8 270.8L683.8 273.8L682.3 279.2L682.7 284.8L684.5 288.2L687.9 291.2L690.3 295.8L698 306.8L704.3 313.2L711.7 318.8L715.6 323.8L716.1 327.2L715.4 329.8L713.8 331.2L706.9 335.2L704.5 338.8L704.2 341.8L704.7 345.2L707.8 352.1L709.8 353.6L712.8 353.2L717.4 350.8L723.8 345.5L725.2 345L726.2 345.2L727.2 346.3L728.5 349.2L730.5 358.8L730.7 361.8L729.8 363.8L727.8 364.7L720.2 365.3L712.8 367.9L704.2 370L699.9 372.8L695 379.8L686.8 382.2L678.8 386.4L674.2 386.8L671.2 386.2L669.9 385.2L669.5 379.2L668.4 376.2L663.2 369.4L657.8 363.2L656.9 361.2L656.8 357.7L659.1 353.2L661.6 350.2L668.2 344.2L670.5 340.8L670.7 338.8L669.9 336.2L666.2 332.4L662.8 331.2L659.4 332.2L655.2 335.4L648.2 342.2L643.9 344.8L640.2 345.9L632.8 346.9L621.2 350.9L619.9 350.8L619.8 343.2L619.1 335.8L621.2 333.5L627.9 328.8L629.7 326.2L629.9 321.2L626.9 311.8L630.6 307.2L632.3 302.2L631.4 298.8L626.6 290.2L622.9 276.2L624.1 265.8L622.9 257.2L623.1 240.8L622.7 236.8ZM267.6 251.2L268.8 251.2L275.2 254.5L283.2 262.4L290.2 271L295.1 282.8L297.2 295.2L296.6 313.2L297.2 326.8L295.8 339.8L294.2 346.8L293.8 347.9L291.8 348.8L286.8 347L275.2 340.6L268.3 334.2L264.8 325.2L266.5 313.2L269 303.8L269.8 290.7L268.7 271.8L265.7 264.2L264.2 257.8L265.4 252.8ZM223.6 252.8L225.2 252.5L231.8 255.9L234.2 256.4L237.2 256.1L243.2 253.5L246.2 254.6L249.1 259.8L250 265.8L251.4 268.8L253.3 270.8L257.3 273.2L259.5 277.8L261 287.8L259.1 301.2L256.2 307.2L255.2 308L250.2 310.3L243.8 308.8L237.2 304L231.5 296.8L227.6 288.8L224.1 277.8L223.9 274.2L224.6 267.2L224.4 263.2L222.9 255.8ZM436.8 256.9L443.2 256.1L461.8 262.8L465.5 267.8L467 277.2L464.6 288.2L462.7 293.2L458.9 300.2L452 307.2L449.4 310.8L445.3 320.8L444.2 330.8L443 332.8L441.8 333.5L437.8 332.6L435.6 330.8L435 328.2L434.7 313.2L433.8 308.2L428.4 296.8L422.6 289.2L425.3 271.8L429.2 263.1ZM312.1 271.8L313.2 271.6L315.8 272.7L320.4 278.8L325.7 290.2L328.7 305.8L330.4 318.8L335.5 335.8L335.7 346.2L336.6 352.8L341 366.8L348.1 378.8L352.2 387.2L353.3 399.2L350.3 411.8L346.4 421.8L341.2 424.8L332.8 422.6L324.6 416.2L321 408.2L323 396.8L326.9 386.2L327.3 383.2L325.4 374.2L319.8 356.2L316.3 348.2L311.2 338.6L308.4 329.8L307.8 320.8L307.8 307.7L307.3 305.2L307.8 284.8L309.6 274.8ZM864.8 275.8L865.6 276.2L866.9 286.2L865.5 301.2L854.3 343.2L853.4 345.8L847.7 354.8L838.9 371.8L835 376.2L830.2 380L825.8 382.5L816.2 386L811.8 389.3L805.8 392.4L798.8 394.6L793.8 394.4L788.8 393L781.2 389.2L777.2 385.6L773.8 384.4L769.8 384.4L765.8 385.1L754.2 389.7L747.8 388.5L741.1 385.8L740 382.8L738.5 372.8L738.4 366.8L739.9 363.8L746.8 356.6L751.4 349.2L757 343.8L758.9 340.8L759.4 335.8L757.5 329.8L755.5 319.2L756.5 314.8L759.2 311L770.2 304.2L781.2 303.6L789.8 299.7L794.8 301.7L797.8 302.2L810.2 300L813.8 298.4L819.2 294.1L821.2 293.2L828.2 296.3L832.2 297.1L836.2 296.5L839.2 294.6L844.8 287.8ZM94.2 306.9L101.8 305.5L107.8 308.5L109.9 314.8L109.8 318.2L108.6 323.2L103.8 329.3L99.2 328.8L95.5 325.8L93.2 323.2L90.7 317.2L91 310.8ZM507.6 310.8L511.2 310.8L512.2 311.8L512.4 320.8L513.6 326.2L511.9 329.8L508.4 333.2L498.8 337.5L492.8 341.8L485.8 341.3L478.3 338.8L485.8 326.7L489.8 322.6L496.8 316.1L504.8 311.4ZM45.5 337.8L48.7 337.3L51.8 337.6L55.2 339.8L56.1 341.2L56.4 343.2L55.8 345.3L54.2 347.3L52.8 348.1L48.8 349L43.8 349.5L35.8 347.7L31.5 345.2L35.2 341.4ZM121.6 343.8L129.8 343.4L131.2 343.8L132 345.2L127.2 347.2L122.2 347.7L120.7 346.2ZM178.8 347.8L180.2 347.5L182.8 349.2L185.2 356.8L184.2 367.1L181 374.8L176.6 380.2L174.2 381.4L170.2 382.4L168.6 381.2L166.7 376.2L167.7 366.2L169.6 357.2L170.8 354.9L174.8 350ZM555.3 360.2L557.2 360.9L559.9 363.2L563 369.8L563.1 380.2L560.8 386.1L560.2 385.9L557.5 379.8L552.8 372.4L551.3 368.8L552.8 364.5ZM145.2 375.8L147.2 376L150.8 377.8L151.7 378.8L153.3 385.2L153.3 392.2L149.5 403.8L144.2 410.7L137.8 415.3L128.8 418.8L121.2 420.5L111.2 420.6L91.2 425.5L89.2 425.2L91.4 422.8L100.2 415.9L107.4 408.8L112.2 398.8L118.8 394.5L126.2 385.2L136.8 378ZM755.5 400.8L758.2 400.7L764.2 404.2L766.3 406.2L767.2 408.8L766.9 410.2L765.8 411.6L758.8 417.2L755.2 419.1L753.5 418.2L751.6 416.2L750.3 412.3L750.7 409.2L752.2 405.4L753.8 402.6ZM555.2 406.7L560.2 405L560.8 405.8L563.8 417.2L563.3 427.2L559.8 436.8L558.7 438.2L556.2 440L542.8 437.2L542 436.2L542.3 429.8L541.1 421.2L541.4 417.2L542.5 413.8L548.8 408.1ZM927.2 421.2L930.3 424.8L935.3 432.8L939.3 445.8L939.9 469.8L938.8 474.8L937.2 477.2L936.2 477.7L927.2 478L924.2 477.3L922.2 476L916.2 465.7L911.2 459.8L909 454.8L907.8 450.2L908.9 445.8L912.2 439.4L918.5 431.8L924.2 422.9ZM141.2 438.2L141.4 438.8L140.2 439.9L132.2 445.7L128.8 446.5L127.8 445.8L128.2 442.4L130 439.2L133.2 438.6ZM842.5 441.2L844.8 441.4L845.1 443.2L841.2 446.6L840.7 446.2L840.7 443.8L841.7 441.8ZM890.4 457.8L891.6 458.2L893.6 462.2L893.7 473.8L895.7 481.2L892.6 484.8L889.8 486.8L878.2 484.6L876.9 483.2L876.3 481.2L877.4 475.2L884.2 463.2ZM1093.6 464.8L1094.2 464.9L1095.4 466.8L1095.9 471.8L1093.7 474.8L1091.2 475.6L1091.6 467.2ZM211.3 469.2L217.3 466.3L219.8 466.7L221.9 470.8L222.7 484.8L222.5 489.2L220.7 495.2L218.8 498.1L214.8 501.2L211.2 502L208.2 500.7L200 494.8L198.1 491.2L197.7 488.2L199.8 482.2L202.4 477.8ZM361.9 492.7L364.8 492.8L367.7 495.2L369.1 497.8L369.8 504.2L369.8 506.8L366.8 513.1L365.8 514L363.8 514.6L357.3 510.2L355.8 507.4L354.5 503.2L354.6 500.2L355.7 497.8L358.2 495ZM313.2 567.9L316.8 565.4L317 566.2L317 580.2L315.7 597.8L313.8 602.2L311.8 604.5L309.8 605.6L296.8 604.8L294 603.8L293.1 602.8L293 600.2L293.5 597.2L294.7 594.8L308.4 574.2ZM133.8 569.5L142.8 567.9L143.2 569.8L135.2 577.8L123.8 585.7L119.5 586.2L119.8 584.2L123.4 575.8ZM931.6 580.8L932.2 581.8L932.1 597.2L930.8 601.2L928.2 606.5L926.4 599.2L926.4 597.2L929.8 582.8L930.2 581.7ZM527.1 736.8L528.2 737.2L528 741.8L525 746.2L521.2 750.6L520.2 751.2L519.1 747.2L520.3 743.2L524.8 737.8ZM551.2 756.6L558.8 754.3L562.2 754.9L563.2 755.6L563.8 757.2L559.2 765.8L556.2 768.2L554.2 768.4L553.2 767.7L551.2 764.3L549.1 759.2L549.9 757.8ZM989.2 863.5L999.2 862.4L1005.8 864.9L1015.8 870.9L1020.8 877.5L1021.7 881.2L1020.2 881.9L1016.8 881.2L1014.2 881.9L1012.4 883.8L1011.6 886.8L1010.8 886.9L990.8 880.6L982.2 876.9L978.2 873.8L978.4 872.8L981.2 868.9ZM358.5 874.8L360.7 874.8L349.4 886.2L333.9 899.2L332.5 901.2L332 903.8L283.4 903.8L292.2 890.8L304.2 884L322.2 879.1L337.8 877.1L353.2 876ZM437.8 884.2L454.2 884.2L468.2 886.5L488.8 891.5L513.2 891.7L524.8 895.6L530.3 899.8L532.1 903.8L401.1 903.8L404.5 897.2L412.2 891.2L421.8 887.3ZM578.6 899.8L582.8 897.4L584.8 897.9L585.9 900.2L586.5 903.8L576.8 903.8Z" fill="#f986fa" fill-rule="evenodd"/>
<path d="M268.1 254.8L269.2 254.8L273.8 257.2L280.9 264.2L285.9 270.2L287.8 272.8L292.2 283.8L294.2 295.8L293.2 313.2L293.8 324.2L291.7 339.3L290.2 344L284.2 341.3L278.1 337.8L271.8 332.8L268.5 325.2L269.5 316.2L272.2 304.8L272.7 285.2L271.6 271.2L268.6 263.2L267.3 258.2ZM638.7 257.2L641.2 257.4L646.2 261.3L651.8 263.3L653.8 263.2L657.8 261.1L662.7 260.8L665.8 263.7L672.3 266.8L673.8 271.2L672.6 284.2L674 305.2L673.4 310.2L671.7 312.7L667.9 315.8L657.2 323L652.2 325.3L650.2 325.4L648.2 324.8L646.5 323.2L645.2 321.2L640.2 300.6L635.5 289.8L633.5 276.2L634.5 267.2L634.1 260.8ZM236.2 261.6L242.8 259.4L243.8 260.8L244.7 266.2L245.9 268.8L248.6 271.8L254.5 275.8L255.9 278.2L256.8 281.8L257.6 287.2L255.9 300.2L253.8 304.8L250.2 306.7L244.8 305.4L239.7 301.8L235.5 296.8L230.6 287.8L227.5 277.8L227.7 273.8L230 267.2L229.8 260.9ZM439.2 260.8L442.8 260.6L458.8 266.2L461.2 269L461.9 272.2L462.6 277.8L460.4 287.2L458.7 291.8L456.1 296.8L454.2 299.2L446.2 305.5L437.8 304.1L431.2 293.4L427.1 287.8L429.4 273.2L432 267.2L433.2 265.2ZM311.8 275.8L313.2 274.3L314.2 274.8L318.5 280.2L323.3 290.8L326.4 306.2L328.1 319.2L330.5 326.2L332.1 333.2L332.4 337.2L331.2 346.2L331.4 350.2L335.1 364.2L338.1 371.2L346 382.2L349 388.2L350 398.8L348.1 407.2L343.9 419.2L340.8 421.2L334.2 419.6L328.8 415.4L326.5 413.2L324.5 407.8L326.2 397.1L331 384.8L331.1 378.8L329.8 372.8L324 354.2L320.4 346.8L313.9 337.8L310.8 329.8L310.1 320.2L309.6 293.8L310.2 284.8ZM847.2 290.7L861.8 282.4L862.2 282.7L862.9 286.2L861.7 300.7L859.9 307.8L853.7 326.8L849.5 343.2L846.8 347.4L839.1 356.2L831.5 369.2L828.8 371.6L825.8 373.1L820.8 374.1L813.2 373L805.8 365.5L803.7 361.2L804.1 357.2L808.4 343.2L809.7 341.8L816.5 337.2L818.8 334.3L820.1 331.2L820.4 328.2L819.8 325.4L816.8 319.5L815.2 317.7L812.8 317L806.2 319.4L798.2 324.1L779.8 336.8L774.8 338.8L771.8 338.5L768.2 336.2L764.8 332L760.7 325.2L760.1 320.8L761.5 316.8L764.2 314.2L771.8 309.9L783.2 309.3L789.8 306.7L794.2 308L798.2 308.5L806.8 307.2L812.8 306.9L815.8 305.7L820.8 301.3L830.3 302.3L835.2 301.5L838.2 300.2L841 298.2ZM95.8 309.3L101.8 308.3L105.8 310.4L107.3 315.2L106.2 322.3L102.8 326.3L100.2 326.1L95.8 322.3L93.3 316.2L93.3 312.2L94.8 310.2ZM505 318.2L506.2 318.2L507.2 325.2L505.2 328L495.9 332.2L490.8 335.8L487.8 335.2L490.2 330.7L493.5 327.2L500.2 321.1ZM691.9 337.2L695.8 337.9L699.2 341.2L703.7 350.2L704.1 354.8L703.2 357.3L700.8 360.1L688.8 368.1L687.8 368.3L682.8 364.8L678.7 360.2L676.8 356.8L676.6 353.2L678.5 348.8L683 343.2L687.8 339ZM46.7 341.2L49.8 340.9L51.9 341.2L52.8 343.8L48.2 345.3L43.8 345.6L38.7 344.2ZM177.2 352.2L179.8 351.1L180.3 351.8L181.9 357.2L181 366.2L178.6 372.2L176.5 375.2L174.2 377.8L171.2 378.7L170.2 376.2L170.4 370.8L172.9 357.8ZM720.8 353.2L723.2 353.4L725.2 354.6L727 357.2L726.6 359.2L725.2 360L714.8 361.9L712.8 361.8L711.6 361.2L711 359.8L712.6 357.8L716.7 354.8ZM761.7 353.2L765.8 353.5L768.8 355.9L770.1 360.2L769.8 365.4L767.8 371.1L765.2 374.4L761.2 376.4L756.8 376.4L752.9 374.8L750.5 372.2L749.5 369.8L749.6 366.2L751.2 361.8L754.2 357.4L757.8 354.6ZM145.6 378.8L148.3 379.8L149.2 380.8L150.4 385.8L150.4 392.2L147 402.2L142.2 408.4L136.1 412.8L127.8 415.6L120.8 417L111.2 417L103.2 418.5L111.1 409.8L114.8 401.2L120.3 397.2L128.4 387.2L137.8 380.8ZM550.2 412.1L555.8 411.6L556.6 412.2L558 418.8L557.5 426.2L556.6 429.2L554.2 434.7L553.2 435.1L549.2 434.5L548.2 433.8L546.2 416.8L546.5 414.8L548.2 413.3ZM926.1 425.8L926.8 425.6L927.9 426.8L932.5 433.8L936.3 446.2L936.8 467.2L935.8 471.3L934.7 473.3L933.8 473.8L928.2 473.2L923.8 470.3L913.2 457.8L910.8 451.2L911.6 447.2L913.3 443.2L920.8 433.7ZM888.6 465.2L889.3 465.8L889.5 474.2L890.8 480.4L886.8 481.4L881.2 480.9L880.9 479.2L881.8 476.2L887.5 466.2ZM216.9 470.8L217.9 471.2L218.4 473.2L219.6 489.2L219 493.2L217.8 496.2L215.8 498L212.8 499.3L210.2 499.2L207.2 497.8L202.4 494.2L201.2 491.8L201.1 488.8L205.2 480.1L213.8 472.3ZM361.3 496.8L362.7 496.8L364 498.8L364.6 505.2L363.2 508L360.8 506.4L358 500.8L358.2 499.2ZM311.1 579.8L311.8 579.8L310.2 597.5L309.8 597.9L307.2 597.7L301.2 596.1L301 595.2L301.8 593.6ZM990.2 866.4L998.8 865.5L1005.8 868.2L1013.7 873.2L1016.9 877.8L1012.2 879.6L1008.8 883.1L992.2 878L985.2 875L982.5 873.2L982.3 872.8L983.3 871.2ZM322.8 882.9L345.3 880.3L349.2 880.8L347 883.2L330.8 897L328.8 900.2L328.2 903.8L288 903.8L294.8 893.9L305.2 887.8ZM424.8 895.5L439.8 892.8L453.2 892.8L466.8 895.1L487.2 900.1L511.8 900.3L520.9 903.8L411 903.8L411.7 902.4L415.8 899.3L421.8 896.6Z" fill="#dc6bdf" fill-rule="evenodd"/>
<path d="M269 257.2L269.8 256.8L272.8 258.4L279.7 265.2L284.8 271.2L286.6 273.8L290.8 284.2L292.7 296.8L291.4 313.2L292 325.2L290.6 332.2L289.8 333.3L284.2 333.6L278.2 335.3L272.8 331.2L270.3 325.2L271.3 316.2L273.8 305.2L274.2 284.8L273.1 270.8L269.9 262.2ZM441.6 262.8L457.8 268.3L459.3 270.2L460.3 276.8L458 287.8L454.2 295.7L451.3 299.2L445.8 303.3L438.8 302L429.3 287.2L431.5 273.8L434.1 267.8L439.3 263.2ZM232.5 269.8L238.2 270.5L243.8 270.2L252.8 276.4L253.8 277.7L255.2 282.2L255.9 287.2L254.5 299.2L252.7 303.2L251.8 304.2L249.8 305L245.8 304.1L240.6 300.2L235.7 294.2L232.2 287.2L229.1 277.2L229.9 273.2ZM313.1 276.2L314.2 276.6L317.7 281.3L322.6 292.8L326.9 319.2L329.6 327.8L330.8 333.8L330.2 340.2L329.2 343.4L328.2 344.3L322.7 345.2L321.2 344.4L315.2 337.4L312.1 329.8L311.3 319.8L310.8 294.2L311.4 285.2ZM656 285.2L659.2 284.8L662.8 285.5L665.8 287.1L667.8 289.2L669.2 292L670.7 296.8L671.5 302.2L671.5 306.8L669.8 311.2L665.7 315.2L657.2 320.6L654.2 321.7L651.8 321.9L648.2 320.3L645.5 315.8L643 305.8L642.2 297.2L642.9 294.8L644.8 292.5L651.8 287.5ZM848.5 292.2L860.2 285.5L860.8 286.8L859.4 302.2L851.4 326.2L848.8 338.2L847.2 342.8L844.2 346.7L838.7 351.2L835.5 354.8L829.5 365.8L827.6 368.2L825.2 369.8L821.8 370.8L818.8 370.9L815.6 370.2L808.6 363.2L807.4 360.7L807 357.8L808.1 351.2L810.2 345.2L817.8 337.9L820.2 334.1L821.6 330.8L821.4 325.8L817.2 313.8L817.9 309.8L820.8 305.8L831.8 305.1L838.2 302.8L843.2 298.8ZM96.2 310.6L101.2 309.6L104.6 311.2L106 315.8L104.9 321.8L103.5 323.8L101.8 325L100.6 324.8L96.8 321.5L94.6 316.2L94.6 312.8L95.6 311.2ZM781.8 312.5L788.2 311.9L789.6 316.8L790.2 320.2L789.7 323.2L788.3 325.8L786.1 328.2L779.8 332.7L774.8 334L770.2 332.9L766.2 329.6L762.4 323.8L762.1 321.2L763.7 318.2L772.2 312.9ZM690.1 341.8L693.8 341.4L697.2 342.9L700.8 347.1L702.4 351.8L701.2 354.6L698.8 356.8L689.8 362.3L687.2 363.2L684.8 361.2L682.6 358.2L681.7 355.8L681.5 352.8L682.3 349.8L684.4 346.2L687.2 343.4ZM178.2 353.8L179 353.8L180.2 357.2L179.4 365.8L176.8 372.2L173.2 376.4L172.2 376.6L172.1 371.2L174.3 358.8ZM333.8 380.5L339.8 378L340.8 378.7L344.2 382.9L346.6 386.8L347.8 391.8L348.3 398.8L345.6 410.2L343.2 416.8L342.2 418.4L340.2 419.5L334.8 417.9L329.8 414.1L327.9 412.2L326.2 407.2L327.9 397.2L332.3 386.2ZM138.2 382.2L145.8 380.3L147.7 381.2L148.9 385.8L148.9 392.2L145.5 401.8L141.2 407.3L135.7 411.2L127.2 414L124 414.2L120.8 407.9L116.9 402.2L121.5 398.2L129.5 388.2ZM926.5 428.2L931 434.2L934.8 446.2L935.2 466.7L934 470.8L932.8 472.1L927.2 470.8L922.8 467.4L913.8 456.8L912.1 451.2L912.9 447.7L914.7 443.8ZM215.1 473.8L216.2 473.5L216.7 474.8L218.1 489.8L217.7 493.2L216.9 495.8L215.8 496.8L213.2 498L210.8 498.1L207.8 497L203.8 494.2L202.6 492.2L202.5 489.8L206.7 481.2ZM990.8 867.9L999.2 867.3L1004.8 869.4L1012.2 874.1L1014.2 876.8L1007.8 881.3L992.8 876.5L984.5 872.8L985.2 871.8ZM320.8 885.3L344 882.8L329.2 895.8L327.1 899.2L326.2 903.8L290.4 903.8L296.2 895.2L305.8 889.7ZM440.1 898.8L452.4 898.8L464.4 900.8L476.4 903.8L420.7 903.8L426.7 901.2L428.8 901.2Z" fill="#c257c7" fill-rule="evenodd"/>
<path d="M274.1 264.2L277.2 266.8L284 275.2L287.9 284.8L289.8 296.2L288.1 312.8L288.7 324.8L288.2 327.1L287.2 328.8L278.8 331.4L275.8 329.6L273.5 324.2L277 305.8L276.6 301.8L277.1 290.2L276.6 276.2L275.9 270.2ZM440.9 267.2L442.2 267.2L454.9 271.8L455.5 272.8L456.1 276.8L454.2 286.2L450.7 293.8L448.4 296.8L444.8 299.7L440.8 298.8L433.6 286.2L435.5 274.8L437.8 269.8ZM233.7 273.8L245.2 274.7L250.9 278.8L252.1 282.2L252.7 287.2L251.5 298.2L249.8 301.6L247.2 301.2L243.2 298.4L238.2 292.4L235.2 286.2L232.6 278.8L232.4 275.8ZM314.4 281.8L315.2 281.7L316 282.8L320.2 292.2L322.9 306.8L324.7 319.8L328 331.8L328.1 335.2L327.2 337.5L320.2 338.8L318.8 337.9L316.8 335.3L314.2 328.8L313.5 319.8L313 295.8L313.6 285.8ZM855.9 292.2L856.7 292.8L856.6 295.8L855.2 304.2L854.2 307.2L851.5 311.8L849.3 319.2L846.6 325.8L845.5 334.2L843.5 341.2L840.2 344.2L834.7 345.2L832.8 346.7L828.3 351.8L825.1 359.8L823 363.2L821.2 365L819.2 365.1L816 362.8L813.8 360.1L812.5 357.2L812.2 353.8L813.6 348.2L818.2 342.3L824.1 331.2L824.2 328.2L821.9 317.8L822 314.8L824.8 312.2L832.8 310.4L840.8 306.9L850.8 295.3ZM655.2 294.2L658.8 294.2L661.8 295.4L665.8 301.2L666.3 304.8L665.4 308.8L662.8 312.2L659.1 314.8L654.8 315.8L651.2 314.9L648.8 312.4L646.8 308.2L646.3 303.8L646.9 300.2L648.5 297.8L651.2 295.6ZM99.8 312.2L102.2 312.9L103.5 315.8L102.5 320.8L101.8 321.8L99.1 320.2L97.1 315.8L97.3 313.2ZM139.6 384.8L145.2 383.5L146.1 387.2L146 392.2L143.1 400.2L138 406.2L133.8 409.1L129.2 410.2L122.9 402.2L122.8 401.2L131.6 390.2ZM916.8 445.6L926.8 433.4L928.6 435.8L932 446.8L932.4 464.8L931.2 468.4L926.8 467.1L921.8 463.3L915.5 455.8L914.4 452.2L915.1 449.2ZM212.9 480.2L213.6 480.8L214.3 485.8L214.7 493.2L214.3 494.2L213.5 494.8L210.2 495L206.5 493.2L205.5 492.2L205.5 491.2L209.2 483.7ZM994.2 871.8L998.3 871.8L1002.3 873.2L1006.3 875.8L997.2 873.2L994.2 872.2ZM320.2 889.2L332 887.8L326.5 893.2L324.2 896.8L322.9 900.2L322.5 903.8L295 903.8L298.6 898.2L307 893.2Z" fill="#8d2c90" fill-rule="evenodd"/>
<path d="M441.4 270.8L442.8 270.6L452.2 274.2L453 276.8L451.4 284.8L450 288.2L447.6 293.2L444.2 296.4L442.2 295.6L436.8 285.8L438.5 275.8L440.3 271.8ZM278.7 272.2L281.8 275.8L285.8 285L287.7 297.2L287.3 302.2L285.6 311.8L286.1 324.8L285.8 325.6L283.9 326.8L278.8 328.6L277.8 328L276.1 323.8L279.4 307.2L278.7 301.8L279.2 285.2L278.3 273.2ZM235.2 277.2L238.8 277.3L243 278.8L245.9 280.8L248.4 283.8L249.8 286.6L249.9 289.8L248.8 297.8L248.2 298.4L244.6 296.2L240.2 291.1L237.2 285.1L235.2 278.8ZM314.7 294.8L315.8 286.9L316.8 288.5L318.8 293.5L321.3 307.2L322.5 317.2L326.2 331.2L325.8 333.6L319.2 334.7L318.2 334.2L317.2 332.5L315.8 328.2L314.7 303.8ZM839.1 311.8L841.8 311.6L845.5 314.2L845.8 316.9L844.8 321.2L841.9 325.2L842.8 331.2L841.3 338.2L839.9 340.8L837.8 341.5L835.7 340.2L832.8 334.6L828.8 331.1L827.2 329L825.5 324.2L825 319.2L825.3 316.8L826.2 315.9L833.8 314.6ZM141.7 386.2L143.9 386.2L144.1 390.8L141.2 399.2L137.2 404.2L132.8 407.2L131.6 407.2L127.2 402.8L126 400.8L133.1 391.8ZM926.2 437.2L927.4 438.8L929.9 447.2L930.2 462.8L929.8 464.8L929.2 464.9L925.2 463.2L921.5 460.2L918.2 456.1L916.3 451.7L918.7 446.2Z" fill="#540055" fill-rule="evenodd"/>
</g>
<path d="M0 275 L2 274.6 L9.4 267 L22.5 265 L37.6 264 L45 269 L54 271 L60 258 L64 240.8 L65.8 227.6 L75 220 L84.6 213.5 L92 212.6 L96.8 220 L97.7 231 L94 239 L99.6 233 L103.4 225.7 L106 214.4 L110 207.9 L118.4 207.9 L124 214.4 L123 223.8 L118.4 233 L120 238 L126 233 L129.7 226.7 L137 223.8 L144.7 227.6 L150 237 L154 246 L150 254 L144.7 259.5 L146.6 265 L154 259.5 L161.6 255.8 L167 259.5 L170 269 L172 284 L172 299 L170 310 L173 317.8 L180 321.6 L189.8 325 L197 323 L206.8 325 L212 331 L216 338.5 L219.5 341 L225 354.4 L229 363.8 L236.5 373 L240 386 L242 397.7 L245.9 405 L246.8 418 L247.7 427.7 L255 439 L262.8 448 L263.7 457.8 L267.5 459.7 L269 454 L265.6 442.8 L262.8 431.5 L260.9 418 L261.8 405 L264.7 392 L264.7 380.7 L260.9 369.5 L257 358 L253.4 348.8 L244 343 L236.5 337.5 L234.5 329 L236 321.6 L227 306 L220 292 L214 275 L211 260 L210 246 L211 225.7 L217.6 217 L228.9 214.4 L238 218 L244 225.7 L251.4 222 L257 229.5 L264.6 224.8 L274 223.8 L283.4 227.6 L290.9 235 L298.4 244.5 L307.8 248 L315 255.8 L322.9 261 L330 270.8 L336 284 L339.8 295 L349 301 L364 301.8 L377 301 L388.6 296 L395 281.6 L398.8 270 L398 259 L398.8 247.7 L406 245.9 L412 236.5 L414.8 225 L412 214 L419.5 204.5 L427 199.8 L434.5 197 L436.4 193 L444 195 L457 192 L462.7 198.9 L467.4 206.4 L470 215.8 L474 223 L477.7 229 L487 230.8 L498.4 228 L511.6 221 L522.9 214 L536 206 L549 197 L558.6 187.6 L566 178 L571.7 168.8 L574.5 157.5 L575 150 L571.5 144 L565 130 L560 118 L555 105 L551.4 87.7 L547.7 70 L540 55 L542.7 44 L555 39 L565 37.6 L567.7 45 L575 40 L582.8 42.6 L587.8 47.6 L597.8 46.4 L602.8 37.6 L607.8 32.6 L610 25 L620 26 L628 25 L633 31 L640 27.6 L643 22.6 L646.7 28.8 L653 33.8 L655.4 37.6 L660.5 42.6 L666.7 45 L664 52.6 L660.5 57.6 L663 62.7 L661.7 70 L665.5 75 L670.5 77.7 L680.5 76.4 L683 82.7 L693 84 L705.6 85 L710.6 92.7 L714.3 107.8 L710.6 125 L703 140 L705.6 148 L713 150 L714.3 163 L720.6 168 L730.6 166.7 L735.6 164 L738 170 L745.7 170 L750.7 178 L758 183 L765.7 186.7 L768 194 L775.7 194 L783 190.5 L785.8 178 L782 163 L783 150 L788 146.6 L797.6 148 L807 145 L816.4 141.5 L824.8 137.7 L828.6 132 L827.7 128 L834 124.6 L839 117 L843.6 107.7 L843.6 100 L850 94.5 L857.7 87 L865 82 L871 78.5 L876.5 80 L882 84 L888.8 88.9 L895 90 L904.7 87 L912 82 L919.8 79.5 L932 77 L929 82 L921.7 87 L910.4 93.6 L899 99 L889.7 104.8 L882 113 L874.7 120 L865 122.7 L855.9 127 L850 134 L849 142 L855.9 150 L862.4 158 L863.4 167.8 L859.6 179 L850 190 L839 199.8 L829.5 203.5 L822 205 L818 214.8 L822 220.7 L831.4 223.5 L840.8 219.7 L840.8 230 L839 239.5 L837 247 L842.7 248 L852 245 L857.7 248 L871 247 L876.5 249.8 L880 256.4 L885 258 L889.7 254.5 L893.5 245 L900 238.5 L907.6 233.8 L916 237.6 L921.7 245 L925.4 256.4 L932 264 L935.8 275 L934.8 288 L930 309 L925.4 316.5 L917.9 324 L915 331.6 L908.5 337 L903.8 342.9 L902 352 L899 361.7 L897 369 L898.8 379.8 L896 392 L904.4 395.8 L915.7 388 L928.9 379.8 L940 375 L949.5 374 L960.8 371 L968 366.6 L979.6 361 L994.7 355 L997.5 358 L995.6 367.6 L990 377 L987 384.5 L992.8 394 L1004 405 L1019 416.5 L1036 427.7 L1056.7 436 L1069.8 438 L1077 435 L1082 432 L1092.6 430 L1100 438.8 L1094.5 448 L1105.8 451 L1108.6 463 L1111.4 470.8 L1117 472.6 L1120.8 465 L1124.6 456.7 L1135 455.7 L1135.9 466 L1142.4 465 L1145 472.6 L1150.9 475.5 L1149 485.8 L1150 495 L1144 499 L1145 508 L1150 514 L1147 521.5 L1143.4 527 L1148 532.8 L1141.5 542 L1134 548.8 L1120.8 548.8 L1112.4 550.6 L1112.4 555 L1120.8 559 L1134 560 L1137.7 563.8 L1134 570 L1124.6 574 L1111.4 576 L1102 581.7 L1090.8 589 L1084 596.7 L1085 600 L1094.5 590.7 L1105.8 584 L1119 581 L1130 585 L1137.7 581 L1143.4 576.6 L1152.8 580 L1162 584 L1169.7 588.8 L1166 598 L1162 607.6 L1156.5 615 L1145 620.8 L1130 624.5 L1119 624.5 L1107.7 625.5 L1096.4 630 L1085 634.8 L1087 636.7 L1100 632 L1111.4 629 L1122.7 630 L1132 633 L1143.4 629 L1156.5 625.5 L1163 629 L1163 639.5 L1158.4 647 L1150.9 649 L1144 652.7 L1140.6 656.5 L1143.4 658 L1152.8 655.5 L1160 657 L1160 662 L1152.8 666.8 L1156.5 667.7 L1164 664 L1165 675 L1167.8 677 L1171.6 665.9 L1177 652.7 L1182.9 641 L1185.7 636.7 L1186.6 645 L1186.6 660 L1185.7 671.5 L1190 675 L1195 679 L1194 684.7 L1188.5 692 L1181 697.8 L1174.4 701.6 L1172.5 709 L1177 714.7 L1175 720 L1169.7 724 L1156.5 727 L1143.4 727 L1137.7 722 L1132 712.9 L1122.7 705 L1111.4 699.7 L1100 696 L1090.8 692 L1086 689 L1085 692 L1089.8 698.8 L1095.5 702.5 L1094.5 705 L1085 708 L1075.7 711 L1062.6 713.8 L1047.5 715.7 L1048.5 719.4 L1058.8 721 L1072 719.4 L1083 717.6 L1094.5 719.4 L1102 721 L1111.4 719.4 L1117 724 L1119.8 727.5 L1125 735 L1136.7 740.7 L1148 748 L1163 751 L1164 760 L1153.6 764 L1138.6 762 L1125 760 L1110 759.5 L1097 757.6 L1090.6 758.5 L1091.6 762 L1102.8 766 L1116 768 L1129 770.7 L1140 775 L1149.8 782 L1151.7 787.7 L1146 797 L1140 802.7 L1129 800.8 L1116 800.8 L1114 803.6 L1121.6 806.5 L1133 812 L1138.6 815 L1134.8 817.7 L1125 820.5 L1114 822 L1104.7 824 L1097 825 L1093.5 824 L1090.6 829 L1093.5 834.7 L1099 831 L1098 836.5 L1104.7 842 L1110 849.7 L1112 853.5 L1104.7 859 L1091.6 865.7 L1080 872 L1069 876 L1057.7 876 L1048 870 L1040.8 861 L1035 855 L1029.5 849.7 L1022 842 L1014.5 835.6 L1007 832.8 L1004 834.7 L1008.9 838 L1014.5 842 L1010.7 847.8 L1016 853.5 L1024 857 L1029.5 868.5 L1035 876 L1042.7 881.6 L1048 889 L1054 894 L1061.5 895.7 L1060 901 L0 901 L0 470 L2 424 L2 414.6 L5.6 405 L7.5 392 L3.8 367.6 L2 352.6 L0 345.0Z" fill="none" stroke="#2a2a2a" stroke-width="0.9" stroke-linejoin="round"/>
<path d="M261.1 26.2 L263.5 28.8 L266.8 33.5 L269.6 37.7 L269.8 42.9 L269.4 45.7 L266.8 44.3 L264.4 41.5 L261.1 39.1 L260.2 34.4 L262.1 31.6 L262.6 28.8Z" fill="none" stroke="#2a2a2a" stroke-width="0.9"/>
<path d="M191.7 286.8 L195.5 289.6 L199 297 L205 304.7 L204 309 L199 309 L196.4 302.8 L194.5 295.0Z" fill="none" stroke="#2a2a2a" stroke-width="0.9"/>
<path d="M294.7 217.5 L296 215 L299 214.2 L302 215 L303.2 217.5 L302 220 L299 221 L296 220.0Z" fill="none" stroke="#2a2a2a" stroke-width="0.9"/>
<g id="roads" fill="none" stroke="#f07f4c" stroke-opacity="0.85" stroke-width="0.95" stroke-linejoin="round">
<path d="M574 150.4 L595.3 147.9 L620.4 147.9 L635.4 145.4 L650.4 137.8 L670.5 135.3 L680.5 142.9 L688 155.4 L695.5 165.4 L710.5 167.9 L720.6 175.4 L740.6 180.5 L755.6 185.5 L768.2 200.5 L775.7 208 L783.2 200.5 L785.7 177.9 L788.2 162.9 L798.5 149 L814.5 142.4 L824.8 139.6"/>
<path d="M574 150.4 L572.7 142.9 L569 120.3 L560.2 100.3 L555.2 82.7 L560.2 70.2 L575.2 55.1 L585.3 50.1 L600.3 46.4 L610.3 40.1 L622.8 31.3 L632.9 32.6 L642.9 27.6 L655.4 37.6 L659.2 57.6 L660.4 72.7 L666.7 82.7 L674.2 85.2"/>
<path d="M666.7 82.7 L663 100.3 L658 120.3 L652.9 135.3"/>
<path d="M574 150.4 L571.7 168.8 L566 185.7 L562.3 198.9 L569.8 213.9 L575.5 234.6 L577.4 251.5 L575.5 266.5 L581 281.6 L583 300.4 L584.9 319.2 L588 340 L584 362 L590 385 L600 405 L596 430 L604 455 L618 470.0"/>
<path d="M784.4 186.6 L798 184 L808.9 184.7 L818.3 196 L822 209.2 L816.4 215 L825.8 224.4 L837 232 L837 247 L850.2 249.8 L865.3 248.9 L876.5 252.6 L884 260 L887.8 275.2 L891.6 297.7 L895.3 316.5 L901 331.6 L895.3 346.6 L897.2 361.7 L898.8 380.8 L895 395.8 L883.9 414.4 L874.5 431.4 L868.9 437 L857.6 444.5 L844.4 446.4 L831.3 448.3 L820 452 L805 470 L795 480.0"/>
<path d="M760 188.5 L767.5 197.9 L775 206.4 L780.7 201.7 L784.4 186.6"/>
<path d="M884 260 L891.6 248.9 L895.3 244.0"/>
<path d="M898.8 380.8 L917.6 384.5 L936.4 377 L951.4 375 L955.2 384.5 L964.6 386.4 L977.7 388.3 L984.3 401.4 L985.4 408.8 L981.7 427.6 L976 452 L970.4 474.6 L966.6 491.5 L959.1 510.3 L959.1 529.1 L951.6 540.4 L940.3 551.7 L925.3 559.2 L910.2 566.7 L890 573 L850 593 L835 603 L810 598 L800 568 L780 543 L740 548 L700 543 L680 523 L660 488 L640 470 L618 470.0"/>
<path d="M1000.3 510 L1000.3 493.5 L1011.6 461.6 L1019 450.3 L1039.8 450.3 L1058.6 452.2 L1068 457.8 L1079.2 459.7 L1086.8 452.2 L1101.8 450.3 L1107.4 461.6 L1109.3 476.6 L1105.6 491.7 L1101.8 501.0"/>
<path d="M1015.5 450.2 L1015.5 465.2 L1000.5 491.5 L996.7 487.7 L989.2 491.5 L976 495.3 L968.5 499 L964.7 512.2 L959.1 529.1"/>
<path d="M1015.5 465.2 L1017.4 502.8 L1015.5 540.4 L1011.7 559.2 L1009.8 570 L1005 605.5"/>
<path d="M1005 605.5 L1000 573 L990 528 L970 533 L950 543 L920 563.0"/>
<path d="M1005 605.5 L1030 603 L1055 613 L1080 603.0"/>
<path d="M1005 605.5 L1020 628 L1030 648 L1055 650.5 L1085 633.0"/>
<path d="M1005 605.5 L1000 628 L985 648 L970 688 L970 728 L970 773 L980 783 L1020 798 L1050 813 L1090 823 L1110 818 L1135 814.0"/>
<path d="M980 650.5 L975 698 L972.5 758 L972.5 798 L990 828 L1000 858 L1020 873 L1040 893.0"/>
<path d="M1005 605.5 L985 623 L965 653 L940 678 L920 698 L900 728 L895 738.0"/>
<path d="M1030 648 L1025 678 L1027.5 718 L1060 718 L1085 708 L1095 704 L1111 700 L1132 713 L1143 728.0"/>
<path d="M845 603 L840 643 L815 678 L790 698 L785 728 L780 740.5"/>
<path d="M1027.5 718 L1035 735 L1060 742 L1097 757 L1125 760 L1153 764.0"/>
<path d="M1050 813 L1057 830 L1048 850 L1040 861 L1057 876 L1080 872 L1104 859 L1112 853 L1104 842 L1098 836 L1093 824.0"/>
<path d="M0 528 L15 553 L30 568 L55 578 L80 573 L110 563 L145 548 L165 533 L175 508 L182.5 478 L187.6 480.4"/>
<path d="M30 568 L45 593 L65 623 L87.5 653.0"/>
<path d="M275 478 L260 508 L245 543 L235 578 L232.5 623.0"/>
<path d="M381.2 499.2 L395 508 L405 543 L415 578 L412.5 628 L400 668 L370 718 L320 758 L290 788 L277.5 828 L280 868 L285 898.0"/>
<path d="M435 478 L440 508 L475 528 L487.5 508 L485 478 L470 455 L455 440 L430 436 L390 435.3"/>
<path d="M0 838 L10 868 L5 898.0"/>
<path d="M383.8 330 L389.4 309.8 L396.9 281.6 L400.7 262.8 L408.2 247.7 L417.6 228.9 L419.5 213.9 L427 204.5 L436.4 197 L447.7 195 L458.9 195 L466.5 204.5 L472 219.5 L477.7 228.9 L485.3 238.3 L500.3 244.9 L515.3 247.7 L530.4 255.3 L537.9 260.9 L549.2 264.7 L558.6 270.3 L568 270.3 L575.5 266.5"/>
<path d="M558.6 270.3 L551 276 L550 300.4 L553 319.2 L556.7 330 L560 360 L566 395 L570 430 L566 460 L560 480.0"/>
<path d="M394.3 370 L386.8 349.8 L383 332.9 L386.8 312.2 L394.3 302.8 L399.9 280.2 L401.8 261.4 L405.6 246.4 L413 235.1"/>
<path d="M394.3 302.8 L405.6 317.8 L411.2 332.9 L411.2 351.7 L409.3 370 L405 400 L395 425 L390 435.3"/>
<path d="M375.5 370 L377.4 355.4 L383 346.0"/>
<path d="M236.4 321.6 L247.7 325.3 L258.9 338.5 L262.7 349.8 L260.9 346.9 L262.8 363.8 L266.5 384.5 L264.7 405.2 L266.5 424 L270.3 442.8 L274 461.6 L275 480.4 L270.3 495.4 L266.5 510.0"/>
<path d="M262.7 349.8 L277.7 353.5 L292.8 361 L296.5 370 L305 385 L300 410 L298.5 420.2"/>
<path d="M266.5 384.5 L281.6 386.4 L292.9 393.9 L294.7 408.9 L298.5 420.2 L309.8 424 L322.9 429.6 L338 435.3 L354.9 437.1 L366.2 442.8 L375.6 442.8 L390 435.3"/>
<path d="M366.2 442.8 L368 461.6 L375.6 480.4 L381.2 499.2"/>
<path d="M225.2 354.4 L228.9 371.4 L232.7 392 L230.8 412.7 L240.2 424 L247.7 435.3 L257.1 446.5 L262.8 457.8"/>
<path d="M230.8 412.7 L221.4 418.3 L208.3 431.5 L197 446.5 L193.2 465.3 L187.6 480.4 L180 495.4 L174.4 510.0"/>
<path d="M65.8 242.6 L75.2 231.4 L84.6 218.2 L92.1 212.6 L96.8 223.8 L94 238.9 L84.6 240.8 L105.3 242.6 L116.5 250.2 L131.6 259.5 L144.7 265.2 L161.7 261.4 L169.2 270.8 L171 291.5 L169.2 312.2 L167.3 325.3 L161.7 340.4 L156 353.5 L152.3 359.2 L156 361.0"/>
<path d="M65.8 242.6 L63.9 255.8 L73.3 272.7 L78.9 289.6 L84.6 310.3 L90.2 325.3 L101.5 336.6 L110.9 332.9"/>
<path d="M144.7 265.2 L139 278.3 L127.8 295.3 L116.5 312.2"/>
<path d="M1.9 274.6 L13.2 268.9 L28.2 265.2 L41.4 265.2 L48.9 270.8 L62 272.7"/>
<path d="M3.8 302.8 L11.3 280.2 L18.8 272.7"/>
<path d="M169.2 312.2 L180.5 321.6 L195.5 325.3 L206.8 329.1 L216.2 340.4 L221.8 355.4 L225.6 370 L231.2 386.4 L233.1 408.9 L225.6 418.3 L216.2 425.9 L204.9 435.3 L197.4 446.5 L191.7 461.6 L184.2 476.6 L176.7 491.7 L171 510.0"/>
<path d="M1.9 341.3 L5.6 358.2 L9.4 377 L16.9 392 L18.8 405.2 L11.3 418.3 L7.5 431.5 L5.6 450.3 L7.5 472.9 L11.3 489.8 L13.2 510 L8 528.0"/>
<path d="M18.8 405.2 L32 412.7 L47 422.1 L58.3 429.6"/>
<path d="M163.5 330 L159.8 345 L154.1 360.0"/>
</g>
<g fill="none" stroke="#444" stroke-width="0.8" stroke-dasharray="1.4 5.4">
<path d="M0 300 L190 298 L400 291 L640 283 L840 274 L1040 256 L1262 226.0"/>
<path d="M838 10 L842 100 L848 180 L857 250 L868 400 L880 560 L893 740 L905 900.0"/>
</g>
<path id="barbs" d="M27.4 0.6L40.1 -14.9M40.1 -14.9L48.7 -13.0M37.8 -12.1L46.4 -10.2M55.2 0.6L67.8 -15.0M67.8 -15.0L76.4 -13.2M65.5 -12.2L74.1 -10.4M83.1 0.6L95.4 -15.1M95.4 -15.1L104.1 -13.4M93.2 -12.3L101.8 -10.6M110.9 0.6L123.1 -15.3M123.1 -15.3L131.7 -13.7M120.9 -12.4L129.5 -10.8M138.7 0.6L150.7 -15.5M150.7 -15.5L159.3 -14.0M148.5 -12.6L157.2 -11.1M166.6 0.6L178.3 -15.6M178.3 -15.6L187.0 -14.3M176.2 -12.7L184.9 -11.4M194.4 0.6L205.9 -15.8M205.9 -15.8L214.6 -14.5M203.8 -12.8L212.5 -11.6M222.2 0.6L233.6 -15.9M233.6 -15.9L242.3 -14.7M231.5 -12.9L240.2 -11.8M250.0 0.6L261.3 -16.0M261.3 -16.0L270.0 -14.9M259.2 -13.0L268.0 -11.9M277.9 0.6L289.0 -16.0M289.0 -16.0L297.7 -15.0M287.0 -13.1L295.7 -12.0M305.7 0.6L316.8 -16.1M316.8 -16.1L325.5 -15.1M314.8 -13.1L323.5 -12.1M333.5 0.6L344.6 -16.1M344.6 -16.1L353.3 -15.1M342.6 -13.1L351.3 -12.1M361.4 0.6L372.3 -16.2M372.3 -16.2L381.1 -15.2M370.4 -13.1L379.1 -12.2M389.2 0.6L400.1 -16.2M400.1 -16.2L408.9 -15.3M398.1 -13.2L406.9 -12.2M417.0 0.6L427.9 -16.2M427.9 -16.2L436.6 -15.3M425.9 -13.2L434.7 -12.3M444.8 0.6L455.7 -16.2M455.7 -16.2L464.5 -15.3M453.8 -13.2L462.5 -12.3M472.7 0.6L483.6 -16.2M483.6 -16.2L492.3 -15.3M481.6 -13.2L490.4 -12.3M500.5 0.6L511.4 -16.2M511.4 -16.2L520.1 -15.3M509.4 -13.2L518.2 -12.3M528.3 0.6L539.2 -16.2M539.2 -16.2L548.0 -15.3M537.2 -13.2L546.0 -12.3M556.2 0.6L566.9 -16.3M566.9 -16.3L575.7 -15.4M565.0 -13.3L573.8 -12.4M584.0 0.6L594.5 -16.4M594.5 -16.4L603.3 -15.7M592.6 -13.4L601.4 -12.7M611.8 0.6L621.9 -16.7M621.9 -16.7L630.7 -16.2M620.1 -13.6L628.9 -13.1M639.7 0.6L649.2 -17.0M649.2 -17.0L658.0 -16.8M647.5 -13.9L652.3 -13.7M667.5 0.6L676.5 -17.3M676.5 -17.3L685.3 -17.3M674.9 -14.1L679.7 -14.1M695.3 0.6L704.0 -17.5M704.0 -17.5L712.8 -17.7M702.4 -14.2L707.2 -14.3M723.2 0.6L731.6 -17.5M731.6 -17.5L740.4 -17.8M730.1 -14.3L734.9 -14.4M751.0 0.6L759.4 -17.6M759.4 -17.6L768.2 -17.9M757.9 -14.3L762.7 -14.5M778.8 0.6L787.3 -17.6M787.3 -17.6L796.1 -17.9M785.7 -14.3L790.6 -14.5M806.6 0.6L815.1 -17.6M815.1 -17.6L823.9 -17.9M813.5 -14.3L818.4 -14.5M834.5 0.6L842.8 -17.6M842.8 -17.6L851.6 -18.0M841.3 -14.3L846.1 -14.5M862.3 0.6L870.4 -17.7M870.4 -17.7L879.1 -18.2M868.9 -14.4L873.7 -14.7M890.1 0.6L897.8 -17.9M897.8 -17.9L906.6 -18.6M896.4 -14.6L901.2 -15.0M918.0 0.6L925.2 -18.1M925.2 -18.1L933.9 -19.0M923.9 -14.7L932.6 -15.6M945.8 0.6L952.6 -18.2M952.6 -18.2L961.3 -19.3M951.4 -14.9L960.1 -15.9M973.6 0.6L980.0 -18.4M980.0 -18.4L988.7 -19.7M978.8 -15.0L987.5 -16.3M1001.5 0.6L1007.3 -18.6M1007.3 -18.6L1016.0 -20.1M1006.3 -15.1L1014.9 -16.6M1029.3 0.6L1034.7 -18.7M1034.7 -18.7L1043.3 -20.4M1033.7 -15.2L1042.3 -17.0M1057.1 0.6L1062.1 -18.8M1062.1 -18.8L1070.7 -20.7M1061.2 -15.3L1069.8 -17.2M1084.9 0.6L1089.7 -18.8M1089.7 -18.8L1098.3 -20.8M1088.9 -15.4L1097.4 -17.4M1112.8 0.6L1117.5 -18.9M1117.5 -18.9L1126.0 -20.9M1116.6 -15.4L1125.2 -17.4M1140.6 0.6L1145.3 -18.9M1145.3 -18.9L1153.9 -20.9M1144.5 -15.4L1153.0 -17.4M1168.4 0.6L1173.3 -18.8M1173.3 -18.8L1181.8 -20.8M1172.4 -15.3L1181.0 -17.3M1196.3 0.6L1201.2 -18.8M1201.2 -18.8L1209.8 -20.7M1200.3 -15.3L1208.9 -17.2M1224.1 0.6L1229.3 -18.8M1229.3 -18.8L1237.9 -20.6M1228.3 -15.3L1236.9 -17.1M1251.9 0.6L1257.3 -18.7M1257.3 -18.7L1265.9 -20.4M1256.3 -15.2L1264.9 -17.0M1279.7 0.6L1285.3 -18.6M1285.3 -18.6L1293.9 -20.3M1284.3 -15.2L1292.9 -16.9M27.4 27.9L40.4 12.7M40.4 12.7L49.0 14.8M38.1 15.5L46.6 17.6M55.2 27.9L68.1 12.6M68.1 12.6L76.7 14.6M65.8 15.4L74.4 17.4M83.1 27.9L95.8 12.5M95.8 12.5L104.4 14.4M93.5 15.2L102.1 17.2M110.9 27.9L123.4 12.3M123.4 12.3L132.0 14.0M121.1 15.1L129.7 16.8M138.7 27.9L150.9 12.1M150.9 12.1L159.6 13.7M148.7 14.9L157.4 16.5M166.6 27.9L178.5 11.8M178.5 11.8L187.2 13.3M176.3 14.7L185.0 16.2M194.4 27.9L206.1 11.7M206.1 11.7L214.8 13.0M204.0 14.6L212.7 15.9M222.2 27.9L233.7 11.5M233.7 11.5L242.4 12.7M231.6 14.5L240.3 15.7M250.0 27.9L261.4 11.4M261.4 11.4L270.1 12.6M259.3 14.4L268.1 15.5M277.9 27.9L289.1 11.4M289.1 11.4L297.8 12.5M287.1 14.3L295.8 15.4M305.7 27.9L316.9 11.3M316.9 11.3L325.6 12.4M314.9 14.3L323.6 15.4M333.5 27.9L344.7 11.3M344.7 11.3L353.4 12.4M342.7 14.3L351.4 15.4M361.4 27.9L372.5 11.3M372.5 11.3L381.2 12.3M370.5 14.3L379.2 15.3M389.2 27.9L400.3 11.2M400.3 11.2L409.0 12.2M398.3 14.2L407.0 15.2M417.0 27.9L428.0 11.2M428.0 11.2L436.7 12.1M426.0 14.2L434.8 15.1M444.8 27.9L455.7 11.1M455.7 11.1L464.5 12.0M453.8 14.1L462.5 15.1M472.7 27.9L483.6 11.1M483.6 11.1L492.3 12.0M481.6 14.1L490.4 15.1M500.5 27.9L511.4 11.1M511.4 11.1L520.2 12.0M509.4 14.1L518.2 15.1M528.3 27.9L539.2 11.1M539.2 11.1L548.0 12.0M537.3 14.1L546.0 15.0M556.2 27.9L566.9 11.0M566.9 11.0L575.7 11.9M565.0 14.1L573.8 14.9M584.0 27.9L594.5 10.9M594.5 10.9L603.3 11.6M592.6 13.9L601.4 14.7M611.8 27.9L621.9 10.6M621.9 10.6L630.7 11.1M620.1 13.7L628.9 14.2M639.7 27.9L649.2 10.3M649.2 10.3L658.0 10.5M647.5 13.5L652.3 13.6M667.5 27.9L676.5 10.0M676.5 10.0L685.3 10.0M674.9 13.2L679.7 13.2M695.3 27.9L704.0 9.9M704.0 9.9L712.7 9.6M702.4 13.1L707.2 13.0M723.2 27.9L731.6 9.8M731.6 9.8L740.4 9.5M730.1 13.0L734.9 12.9M751.0 27.9L759.4 9.8M759.4 9.8L768.2 9.5M757.9 13.0L762.7 12.9M778.8 27.9L787.3 9.8M787.3 9.8L796.1 9.5M785.7 13.0L790.6 12.9M806.6 27.9L815.1 9.8M815.1 9.8L823.9 9.4M813.6 13.0L818.4 12.9M834.5 27.9L842.8 9.7M842.8 9.7L851.6 9.3M841.3 13.0L846.1 12.8M862.3 27.9L870.2 9.5M870.2 9.5L879.0 9.0M868.8 12.8L873.6 12.5M890.1 27.9L897.6 9.3M897.6 9.3L906.3 8.5M896.2 12.7L901.0 12.2M918.0 27.9L925.0 9.2M925.0 9.2L933.7 8.2M923.7 12.5L932.4 11.5M945.8 27.9L952.4 9.0M952.4 9.0L961.1 7.8M951.2 12.4L959.9 11.2M973.6 27.9L979.8 8.9M979.8 8.9L988.5 7.5M978.7 12.3L987.4 10.9M1001.5 27.9L1007.1 8.7M1007.1 8.7L1015.7 7.1M1006.1 12.2L1014.7 10.5M1029.3 27.9L1034.3 8.6M1034.3 8.6L1042.9 6.7M1033.4 12.0L1042.0 10.2M1057.1 27.9L1061.8 8.5M1061.8 8.5L1070.3 6.4M1060.9 12.0L1069.5 9.9M1084.9 27.9L1089.4 8.4M1089.4 8.4L1098.0 6.3M1088.6 11.9L1097.1 9.8M1112.8 27.9L1117.2 8.4M1117.2 8.4L1125.7 6.2M1116.4 11.9L1124.9 9.7M1140.6 27.9L1145.1 8.4M1145.1 8.4L1153.6 6.3M1144.3 11.9L1152.8 9.8M1168.4 27.9L1173.0 8.4M1173.0 8.4L1181.6 6.4M1172.2 11.9L1180.8 9.9M1196.3 27.9L1201.0 8.5M1201.0 8.5L1209.6 6.5M1200.2 12.0L1208.8 10.0M1224.1 27.9L1229.1 8.5M1229.1 8.5L1237.7 6.6M1228.2 12.0L1236.8 10.1M1251.9 27.9L1257.1 8.6M1257.1 8.6L1265.7 6.8M1256.2 12.1L1264.8 10.3M1279.7 27.9L1285.2 8.6M1285.2 8.6L1293.8 6.9M1284.2 12.1L1292.8 10.4M27.4 55.2L40.9 40.4M40.9 40.4L49.4 42.8M38.4 43.1L46.9 45.4M55.2 55.2L68.6 40.3M68.6 40.3L77.1 42.6M66.2 43.0L74.7 45.3M83.1 55.2L96.2 40.1M96.2 40.1L104.7 42.2M93.8 42.8L102.3 45.0M110.9 55.2L123.7 39.9M123.7 39.9L132.3 41.8M121.4 42.6L130.0 44.6M138.7 55.2L151.2 39.6M151.2 39.6L159.8 41.4M149.0 42.4L157.6 44.2M166.6 55.2L178.7 39.3M178.7 39.3L187.3 40.9M176.5 42.2L185.2 43.8M194.4 55.2L206.2 39.1M206.2 39.1L214.9 40.5M204.1 42.0L212.8 43.4M222.2 55.2L233.8 38.9M233.8 38.9L242.5 40.2M231.7 41.9L240.4 43.2M250.0 55.2L261.5 38.8M261.5 38.8L270.2 40.0M259.4 41.8L268.1 43.0M277.9 55.2L289.2 38.8M289.2 38.8L298.0 39.9M287.2 41.7L295.9 42.9M305.7 55.2L317.1 38.8M317.1 38.8L325.8 39.9M315.0 41.7L323.7 42.9M333.5 55.2L344.9 38.8M344.9 38.8L353.6 40.0M342.9 41.7L351.6 42.9M361.4 55.2L372.8 38.8M372.8 38.8L381.5 40.0M370.7 41.8L379.4 42.9M389.2 55.2L400.5 38.7M400.5 38.7L409.2 39.9M398.5 41.7L407.2 42.8M417.0 55.2L428.2 38.6M428.2 38.6L436.9 39.7M426.2 41.6L434.9 42.7M444.8 55.2L455.8 38.5M455.8 38.5L464.6 39.5M453.8 41.5L462.6 42.5M472.7 55.2L483.6 38.5M483.6 38.5L492.3 39.4M481.6 41.5L490.4 42.4M500.5 55.2L511.4 38.4M511.4 38.4L520.1 39.4M509.4 41.5L518.2 42.4M528.3 55.2L539.2 38.4M539.2 38.4L547.9 39.3M537.2 41.4L546.0 42.3M556.2 55.2L566.9 38.3M566.9 38.3L575.6 39.2M565.0 41.4L573.7 42.2M584.0 55.2L594.4 38.2M594.4 38.2L603.2 38.8M592.5 41.2L601.3 41.9M611.8 55.2L621.8 37.9M621.8 37.9L630.6 38.4M620.0 41.0L628.8 41.5M639.7 55.2L649.1 37.6M649.1 37.6L657.9 37.8M647.4 40.8L652.3 40.9M667.5 55.2L676.5 37.4M676.5 37.4L685.3 37.3M674.9 40.6L679.7 40.6M695.3 55.2L704.0 37.2M704.0 37.2L712.8 37.0M702.4 40.4L707.2 40.3M723.2 55.2L731.6 37.1M731.6 37.1L740.4 36.8M730.1 40.4L734.9 40.2M751.0 55.2L759.4 37.1M759.4 37.1L768.2 36.8M757.9 40.4L762.7 40.2M778.8 55.2L787.2 37.1M787.2 37.1L796.0 36.8M785.7 40.4L790.6 40.2M806.6 55.2L815.0 37.1M815.0 37.1L823.8 36.7M813.5 40.3L818.3 40.1M834.5 55.2L842.6 36.9M842.6 36.9L851.4 36.5M841.1 40.2L846.0 40.0M862.3 55.2L869.9 36.7M869.9 36.7L878.6 36.0M868.5 40.1L873.3 39.6M890.1 55.2L897.2 36.5M897.2 36.5L905.9 35.5M895.9 39.9L900.7 39.3M918.0 55.2L924.7 36.4M924.7 36.4L933.4 35.2M923.5 39.8L932.2 38.6M945.8 55.2L952.2 36.3M952.2 36.3L960.9 35.0M951.1 39.7L959.8 38.4M973.6 55.2L979.7 36.2M979.7 36.2L988.3 34.7M978.6 39.6L987.2 38.1M1001.5 55.2L1006.9 36.0M1006.9 36.0L1015.5 34.3M1005.9 39.4L1014.5 37.7M1029.3 55.2L1034.1 35.8M1034.1 35.8L1042.7 33.8M1033.2 39.3L1041.8 37.3M1057.1 55.2L1061.5 35.7M1061.5 35.7L1070.1 33.6M1060.7 39.2L1069.3 37.1M1084.9 55.2L1089.2 35.7M1089.2 35.7L1097.7 33.5M1088.4 39.2L1097.0 37.0M1112.8 55.2L1117.0 35.7M1117.0 35.7L1125.5 33.4M1116.3 39.2L1124.8 37.0M1140.6 55.2L1144.9 35.7M1144.9 35.7L1153.4 33.5M1144.1 39.2L1152.7 37.0M1168.4 55.2L1172.9 35.7M1172.9 35.7L1181.4 33.6M1172.1 39.2L1180.6 37.1M1196.3 55.2L1200.9 35.8M1200.9 35.8L1209.5 33.7M1200.1 39.3L1208.6 37.2M1224.1 55.2L1229.0 35.8M1229.0 35.8L1237.5 33.9M1228.1 39.3L1236.7 37.4M1251.9 55.2L1257.0 35.9M1257.0 35.9L1265.6 34.0M1256.1 39.4L1264.7 37.5M1279.7 55.2L1285.1 36.0M1285.1 36.0L1293.7 34.2M1284.1 39.4L1292.7 37.7M27.4 82.6L41.3 68.2M41.3 68.2L49.7 70.8M38.8 70.8L47.2 73.4M55.2 82.6L69.0 68.1M69.0 68.1L77.4 70.6M66.5 70.7L75.0 73.2M83.1 82.6L96.6 67.8M96.6 67.8L105.1 70.2M94.2 70.5L102.6 72.8M110.9 82.6L124.1 67.5M124.1 67.5L132.6 69.7M121.7 70.2L130.2 72.4M138.7 82.6L151.5 67.2M151.5 67.2L160.1 69.1M149.2 69.9L157.8 71.9M166.6 82.6L178.9 66.9M178.9 66.9L187.6 68.6M176.7 69.7L185.3 71.4M194.4 82.6L206.4 66.6M206.4 66.6L215.1 68.1M204.2 69.5L212.9 71.0M222.2 82.6L234.0 66.4M234.0 66.4L242.7 67.7M231.8 69.3L240.5 70.7M250.0 82.6L261.6 66.2M261.6 66.2L270.3 67.5M259.5 69.2L268.2 70.5M277.9 82.6L289.4 66.2M289.4 66.2L298.1 67.4M287.3 69.1L296.0 70.4M305.7 82.6L317.2 66.2M317.2 66.2L325.9 67.5M315.2 69.2L319.9 69.9M333.5 82.6L345.2 66.3M345.2 66.3L353.9 67.6M343.1 69.2L351.8 70.5M361.4 82.6L373.1 66.3M373.1 66.3L381.8 67.7M371.0 69.3L379.7 70.6M389.2 82.6L400.9 66.3M400.9 66.3L409.6 67.7M398.8 69.3L407.5 70.6M417.0 82.6L428.5 66.2M428.5 66.2L437.2 67.4M426.4 69.1L435.2 70.4M444.8 82.6L456.0 66.0M456.0 66.0L464.8 67.0M454.0 69.0L462.8 70.0M472.7 82.6L483.6 65.8M483.6 65.8L492.4 66.8M481.7 68.8L490.4 69.8M500.5 82.6L511.3 65.8M511.3 65.8L520.1 66.6M509.4 68.8L518.2 69.7M528.3 82.6L539.1 65.7M539.1 65.7L547.8 66.5M537.1 68.7L545.9 69.6M556.2 82.6L566.7 65.6M566.7 65.6L575.5 66.3M564.8 68.6L573.6 69.4M584.0 82.6L594.3 65.4M594.3 65.4L603.0 66.0M592.4 68.5L601.2 69.1M611.8 82.6L621.7 65.2M621.7 65.2L630.5 65.6M619.9 68.3L624.8 68.5M639.7 82.6L649.1 64.9M649.1 64.9L657.9 65.1M647.4 68.1L652.2 68.2M667.5 82.6L676.5 64.7M676.5 64.7L685.3 64.7M674.9 67.9L679.7 67.9M695.3 82.6L704.0 64.5M704.0 64.5L712.8 64.4M702.4 67.8L707.3 67.7M723.2 82.6L731.6 64.4M731.6 64.4L740.4 64.2M730.1 67.7L734.9 67.5M751.0 82.6L759.4 64.4M759.4 64.4L768.2 64.1M757.9 67.7L762.7 67.5M778.8 82.6L787.1 64.4M787.1 64.4L795.9 64.0M785.6 67.6L790.5 67.4M806.6 82.6L814.8 64.3M814.8 64.3L823.6 63.8M813.3 67.6L818.1 67.3M834.5 82.6L842.1 64.1M842.1 64.1L850.9 63.4M840.7 67.4L845.6 67.0M862.3 82.6L869.3 63.8M869.3 63.8L878.0 62.8M868.0 67.2L872.8 66.6M890.1 82.6L896.7 63.7M896.7 63.7L905.4 62.5M895.5 67.1L900.3 66.4M918.0 82.6L924.4 63.6M924.4 63.6L933.1 62.4M923.2 67.0L931.9 65.8M945.8 82.6L952.1 63.6M952.1 63.6L960.8 62.2M950.9 67.0L959.6 65.7M973.6 82.6L979.6 63.5M979.6 63.5L988.3 62.0M978.5 66.9L987.2 65.4M1001.5 82.6L1006.8 63.3M1006.8 63.3L1015.5 61.6M1005.9 66.8L1014.5 65.0M1029.3 82.6L1034.0 63.1M1034.0 63.1L1042.5 61.1M1033.1 66.6L1041.7 64.6M1057.1 82.6L1061.4 63.0M1061.4 63.0L1069.9 60.8M1060.6 66.5L1069.2 64.3M1084.9 82.6L1089.1 63.0M1089.1 63.0L1097.6 60.7M1088.4 66.5L1096.9 64.3M1112.8 82.6L1116.9 63.0M1116.9 63.0L1125.5 60.7M1116.2 66.5L1124.7 64.3M1140.6 82.6L1144.8 63.0M1144.8 63.0L1153.3 60.8M1144.1 66.5L1152.6 64.3M1168.4 82.6L1172.8 63.0M1172.8 63.0L1181.3 60.9M1172.0 66.6L1180.5 64.4M1196.3 82.6L1200.8 63.1M1200.8 63.1L1209.4 61.0M1200.0 66.6L1208.6 64.5M1224.1 82.6L1228.9 63.1M1228.9 63.1L1237.5 61.2M1228.0 66.6L1236.6 64.7M1251.9 82.6L1257.0 63.2M1257.0 63.2L1265.6 61.3M1256.1 66.7L1264.7 64.8M1279.7 82.6L1285.0 63.3M1285.0 63.3L1293.6 61.5M1284.1 66.7L1292.7 65.0M27.4 109.9L41.7 95.9M41.7 95.9L50.1 98.8M39.2 98.5L47.5 101.3M55.2 109.9L69.5 95.8M69.5 95.8L77.8 98.6M66.9 98.4L75.2 101.1M83.1 109.9L97.0 95.6M97.0 95.6L105.4 98.2M94.5 98.2L102.9 100.8M110.9 109.9L124.5 95.2M124.5 95.2L132.9 97.6M122.0 97.8L130.5 100.2M138.7 109.9L151.8 94.8M151.8 94.8L160.4 96.9M149.5 97.5L158.0 99.6M166.6 109.9L179.2 94.4M179.2 94.4L187.8 96.2M176.9 97.2L185.5 99.0M194.4 109.9L206.6 94.1M206.6 94.1L215.2 95.7M204.4 96.9L213.0 98.5M222.2 109.9L234.1 93.8M234.1 93.8L242.8 95.3M232.0 96.7L240.6 98.2M250.0 109.9L261.7 93.7M261.7 93.7L270.4 95.0M259.6 96.6L268.3 97.9M277.9 109.9L289.5 93.6M289.5 93.6L298.2 94.9M287.4 96.5L292.2 97.2M305.7 109.9L317.4 93.6M317.4 93.6L326.1 95.0M315.3 96.6L320.1 97.3M333.5 109.9L345.4 93.8M345.4 93.8L354.1 95.2M343.2 96.7L348.0 97.5M361.4 109.9L373.4 93.9M373.4 93.9L382.0 95.4M371.2 96.8L376.0 97.6M389.2 109.9L401.2 93.9M401.2 93.9L409.9 95.5M399.1 96.8L407.7 98.3M417.0 109.9L428.9 93.8M428.9 93.8L437.6 95.3M426.8 96.7L435.5 98.2M444.8 109.9L456.4 93.6M456.4 93.6L465.1 94.8M454.3 96.5L463.0 97.8M472.7 109.9L483.8 93.3M483.8 93.3L492.5 94.3M481.8 96.3L490.5 97.3M500.5 109.9L511.3 93.1M511.3 93.1L520.1 93.9M509.4 96.1L518.1 97.0M528.3 109.9L538.9 92.9M538.9 92.9L547.7 93.7M537.0 96.0L545.8 96.8M556.2 109.9L566.5 92.8M566.5 92.8L575.3 93.4M564.7 95.9L573.5 96.5M584.0 109.9L594.1 92.6M594.1 92.6L602.9 93.1M592.3 95.7L601.1 96.2M611.8 109.9L621.6 92.4M621.6 92.4L630.4 92.8M619.8 95.6L624.7 95.8M639.7 109.9L649.1 92.2M649.1 92.2L657.9 92.4M647.4 95.4L652.2 95.5M667.5 109.9L676.6 92.1M676.6 92.1L685.4 92.1M674.9 95.3L679.8 95.3M695.3 109.9L704.1 91.9M704.1 91.9L712.9 91.7M702.5 95.1L707.3 95.1M723.2 109.9L731.6 91.8M731.6 91.8L740.4 91.5M730.1 95.0L735.0 94.9M751.0 109.9L759.3 91.7M759.3 91.7L768.1 91.3M757.8 95.0L762.6 94.8M778.8 109.9L786.9 91.6M786.9 91.6L795.7 91.1M785.4 94.9L790.3 94.6M806.6 109.9L814.3 91.4M814.3 91.4L823.1 90.7M812.9 94.7L817.8 94.4M834.5 109.9L841.5 91.2M841.5 91.2L850.2 90.2M840.2 94.5L845.0 94.0M862.3 109.9L868.8 91.0M868.8 91.0L877.5 89.7M867.6 94.4L872.4 93.7M890.1 109.9L896.4 90.9M896.4 90.9L905.1 89.6M895.3 94.3L900.1 93.6M918.0 109.9L924.2 90.9M924.2 90.9L932.9 89.5M923.1 94.3L931.8 93.0M945.8 109.9L952.0 90.9M952.0 90.9L960.7 89.5M950.9 94.3L959.6 92.9M973.6 109.9L979.6 90.8M979.6 90.8L988.3 89.4M978.5 94.2L987.2 92.8M1001.5 109.9L1006.9 90.6M1006.9 90.6L1015.5 88.9M1005.9 94.1L1014.5 92.4M1029.3 109.9L1034.0 90.5M1034.0 90.5L1042.6 88.4M1033.2 94.0L1041.7 91.9M1057.1 109.9L1061.4 90.4M1061.4 90.4L1069.9 88.1M1060.6 93.9L1069.2 91.7M1084.9 109.9L1089.1 90.3M1089.1 90.3L1097.6 88.1M1088.4 93.9L1096.9 91.6M1112.8 109.9L1116.9 90.3M1116.9 90.3L1125.4 88.1M1116.2 93.9L1124.7 91.6M1140.6 109.9L1144.8 90.3M1144.8 90.3L1153.3 88.1M1144.1 93.9L1152.6 91.6M1168.4 109.9L1172.8 90.4M1172.8 90.4L1181.3 88.2M1172.0 93.9L1180.5 91.7M1196.3 109.9L1200.8 90.4M1200.8 90.4L1209.4 88.3M1200.0 93.9L1208.6 91.8M1224.1 109.9L1228.9 90.5M1228.9 90.5L1237.5 88.5M1228.0 94.0L1236.6 92.0M1251.9 109.9L1257.0 90.5M1257.0 90.5L1265.6 88.7M1256.1 94.0L1264.7 92.1M1279.7 109.9L1285.0 90.6M1285.0 90.6L1293.6 88.8M1284.1 94.1L1292.7 92.3M27.4 137.2L42.1 123.7M42.1 123.7L50.4 126.7M39.5 126.1L47.7 129.2M55.2 137.2L69.9 123.6M69.9 123.6L78.1 126.6M67.2 126.0L75.5 129.0M83.1 137.2L97.4 123.3M97.4 123.3L105.8 126.2M94.8 125.8L103.2 128.7M110.9 137.2L124.8 122.9M124.8 122.9L133.2 125.5M122.3 125.5L130.7 128.1M138.7 137.2L152.1 122.4M152.1 122.4L160.6 124.7M149.7 125.0L158.2 127.3M166.6 137.2L179.4 121.9M179.4 121.9L188.0 123.9M177.1 124.7L185.7 126.7M194.4 137.2L206.8 121.6M206.8 121.6L215.4 123.3M204.6 124.4L213.2 126.1M222.2 137.2L234.3 121.3M234.3 121.3L242.9 122.8M232.1 124.1L240.8 125.7M250.0 137.2L261.8 121.1M261.8 121.1L270.5 122.5M259.7 124.0L264.5 124.7M277.9 137.2L289.5 121.0M289.5 121.0L298.2 122.3M287.4 123.9L292.2 124.6M305.7 137.2L317.5 121.0M317.5 121.0L326.1 122.4M315.3 123.9L320.1 124.7M333.5 137.2L345.5 121.2M345.5 121.2L354.2 122.7M343.4 124.1L348.1 124.9M361.4 137.2L373.6 121.4M373.6 121.4L382.2 123.0M371.4 124.2L376.1 125.1M389.2 137.2L401.4 121.4M401.4 121.4L410.1 123.1M399.2 124.3L404.0 125.2M417.0 137.2L429.2 121.3M429.2 121.3L437.8 122.9M427.0 124.2L435.7 125.8M444.8 137.2L456.7 121.1M456.7 121.1L465.3 122.5M454.5 124.0L463.2 125.4M472.7 137.2L483.9 120.7M483.9 120.7L492.7 121.8M481.9 123.7L490.6 124.8M500.5 137.2L511.3 120.4M511.3 120.4L520.0 121.2M509.3 123.4L518.1 124.3M528.3 137.2L538.8 120.2M538.8 120.2L547.6 120.9M536.9 123.2L545.7 123.9M556.2 137.2L566.3 120.0M566.3 120.0L575.1 120.6M564.5 123.1L573.3 123.7M584.0 137.2L593.9 119.9M593.9 119.9L602.7 120.3M592.1 123.0L597.0 123.2M611.8 137.2L621.5 119.7M621.5 119.7L630.3 120.0M619.8 122.9L624.6 123.0M639.7 137.2L649.1 119.6M649.1 119.6L657.9 119.7M647.4 122.8L652.2 122.8M667.5 137.2L676.6 119.4M676.6 119.4L685.4 119.5M675.0 122.6L679.8 122.6M695.3 137.2L704.2 119.3M704.2 119.3L713.0 119.2M702.6 122.5L707.4 122.4M723.2 137.2L731.7 119.1M731.7 119.1L740.5 118.9M730.1 122.4L735.0 122.2M751.0 137.2L759.2 119.0M759.2 119.0L768.0 118.6M757.7 122.3L762.6 122.0M778.8 137.2L786.6 118.8M786.6 118.8L795.4 118.2M785.2 122.1L790.1 121.8M806.6 137.2L813.9 118.6M813.9 118.6L822.7 117.7M812.6 121.9L817.4 121.5M834.5 137.2L841.1 118.4M841.1 118.4L849.9 117.2M839.9 121.8L844.7 121.1M862.3 137.2L868.6 118.2M868.6 118.2L877.3 116.9M867.5 121.7L872.2 120.9M890.1 137.2L896.3 118.2M896.3 118.2L905.0 116.8M895.2 121.6L900.0 120.9M918.0 137.2L924.2 118.2M924.2 118.2L932.8 116.8M923.0 121.6L931.7 120.3M945.8 137.2L952.0 118.2M952.0 118.2L960.7 116.8M950.9 121.6L959.6 120.3M973.6 137.2L979.7 118.2M979.7 118.2L988.3 116.7M978.6 121.6L987.3 120.2M1001.5 137.2L1007.0 118.0M1007.0 118.0L1015.7 116.4M1006.0 121.5L1014.7 119.8M1029.3 137.2L1034.2 117.8M1034.2 117.8L1042.8 115.9M1033.3 121.3L1041.9 119.4M1057.1 137.2L1061.5 117.7M1061.5 117.7L1070.1 115.6M1060.8 121.2L1069.3 119.1M1084.9 137.2L1089.2 117.7M1089.2 117.7L1097.7 115.4M1088.4 121.2L1096.9 119.0M1112.8 137.2L1117.0 117.7M1117.0 117.7L1125.5 115.4M1116.2 121.2L1124.8 118.9M1140.6 137.2L1144.9 117.7M1144.9 117.7L1153.4 115.5M1144.1 121.2L1152.6 119.0M1168.4 137.2L1172.9 117.7M1172.9 117.7L1181.4 115.6M1172.1 121.2L1180.6 119.1M1196.3 137.2L1200.9 117.8M1200.9 117.8L1209.5 115.7M1200.1 121.3L1208.6 119.2M1224.1 137.2L1229.0 117.8M1229.0 117.8L1237.5 115.9M1228.1 121.3L1236.7 119.3M1251.9 137.2L1257.0 117.9M1257.0 117.9L1265.6 116.0M1256.1 121.4L1264.7 119.5M1279.7 137.2L1285.0 117.9M1285.0 117.9L1293.6 116.1M1284.1 121.4L1292.7 119.6M27.4 164.6L42.4 151.3M42.4 151.3L50.5 154.5M39.7 153.7L47.9 156.9M55.2 164.6L70.1 151.2M70.1 151.2L78.3 154.4M67.4 153.6L75.7 156.8M83.1 164.6L97.7 151.0M97.7 151.0L106.0 154.0M95.1 153.4L103.4 156.5M110.9 164.6L125.1 150.5M125.1 150.5L133.5 153.3M122.6 153.0L130.9 155.8M138.7 164.6L152.4 149.9M152.4 149.9L160.8 152.4M149.9 152.6L158.4 155.0M166.6 164.6L179.7 149.4M179.7 149.4L188.2 151.6M177.3 152.2L185.8 154.3M194.4 164.6L207.1 149.1M207.1 149.1L215.6 151.0M204.8 151.9L213.4 153.7M222.2 164.6L234.5 148.8M234.5 148.8L243.1 150.4M232.3 151.6L237.0 152.5M250.0 164.6L262.0 148.5M262.0 148.5L270.6 150.0M259.8 151.4L264.6 152.2M277.9 164.6L289.6 148.3M289.6 148.3L298.3 149.7M287.5 151.3L292.2 152.0M305.7 164.6L317.4 148.4M317.4 148.4L326.1 149.7M315.3 151.3L320.1 152.0M333.5 164.6L345.5 148.5M345.5 148.5L354.2 150.0M343.4 151.4L348.1 152.2M361.4 164.6L373.6 148.7M373.6 148.7L382.2 150.3M371.4 151.6L376.1 152.5M389.2 164.6L401.5 148.8M401.5 148.8L410.1 150.4M399.3 151.6L404.0 152.5M417.0 164.6L429.2 148.7M429.2 148.7L437.9 150.3M427.0 151.6L431.8 152.5M444.8 164.6L456.7 148.4M456.7 148.4L465.4 149.8M454.5 151.3L459.3 152.1M472.7 164.6L483.9 148.0M483.9 148.0L492.6 149.1M481.9 151.0L490.6 152.0M500.5 164.6L511.2 147.6M511.2 147.6L519.9 148.4M509.2 150.7L518.0 151.5M528.3 164.6L538.6 147.4M538.6 147.4L547.4 148.0M536.8 150.5L541.6 150.8M556.2 164.6L566.2 147.2M566.2 147.2L575.0 147.7M564.4 150.4L569.2 150.6M584.0 164.6L593.8 147.1M593.8 147.1L602.6 147.5M592.0 150.3L596.9 150.5M611.8 164.6L621.5 147.0M621.5 147.0L630.3 147.3M619.7 150.2L624.6 150.3M639.7 164.6L649.1 146.9M649.1 146.9L657.9 147.1M647.4 150.1L652.3 150.2M667.5 164.6L676.7 146.8M676.7 146.8L685.5 146.9M675.1 150.0L679.9 150.1M695.3 164.6L704.3 146.7M704.3 146.7L713.1 146.6M702.7 149.9L707.5 149.9M723.2 164.6L731.8 146.5M731.8 146.5L740.6 146.3M730.2 149.8L735.1 149.6M751.0 164.6L759.2 146.3M759.2 146.3L768.0 145.9M757.7 149.6L762.6 149.4M778.8 164.6L786.6 146.1M786.6 146.1L795.3 145.5M785.2 149.4L790.0 149.1M806.6 164.6L813.8 145.9M813.8 145.9L822.6 145.0M812.5 149.2L817.3 148.7M834.5 164.6L841.1 145.7M841.1 145.7L849.8 144.5M839.9 149.1L844.7 148.4M862.3 164.6L868.6 145.6M868.6 145.6L877.3 144.2M867.5 149.0L872.2 148.2M890.1 164.6L896.3 145.5M896.3 145.5L905.0 144.2M895.2 149.0L903.9 147.6M918.0 164.6L924.2 145.5M924.2 145.5L932.8 144.2M923.0 149.0L931.7 147.6M945.8 164.6L952.0 145.5M952.0 145.5L960.7 144.2M950.9 149.0L959.6 147.6M973.6 164.6L979.7 145.5M979.7 145.5L988.4 144.1M978.6 148.9L987.3 147.5M1001.5 164.6L1007.1 145.4M1007.1 145.4L1015.8 143.8M1006.1 148.8L1014.8 147.2M1029.3 164.6L1034.5 145.2M1034.5 145.2L1043.1 143.4M1033.5 148.7L1042.1 146.9M1057.1 164.6L1061.9 145.1M1061.9 145.1L1070.4 143.1M1061.0 148.6L1069.6 146.6M1084.9 164.6L1089.4 145.1M1089.4 145.1L1098.0 142.9M1088.6 148.6L1097.2 146.4M1112.8 164.6L1117.2 145.0M1117.2 145.0L1125.7 142.9M1116.4 148.6L1124.9 146.4M1140.6 164.6L1145.1 145.1M1145.1 145.1L1153.6 142.9M1144.3 148.6L1152.8 146.4M1168.4 164.6L1173.1 145.1M1173.1 145.1L1181.6 143.0M1172.2 148.6L1180.8 146.5M1196.3 164.6L1201.1 145.1M1201.1 145.1L1209.6 143.1M1200.2 148.6L1208.8 146.6M1224.1 164.6L1229.1 145.2M1229.1 145.2L1237.7 143.3M1228.2 148.7L1236.8 146.7M1251.9 164.6L1257.1 145.2M1257.1 145.2L1265.7 143.4M1256.1 148.7L1264.7 146.9M1279.7 164.6L1285.0 145.3M1285.0 145.3L1293.7 143.5M1284.1 148.7L1292.7 147.0M27.4 191.9L42.5 178.7M42.5 178.7L50.6 182.0M39.8 181.1L47.9 184.4M55.2 191.9L70.3 178.7M70.3 178.7L78.4 182.0M67.6 181.1L75.7 184.3M83.1 191.9L97.9 178.5M97.9 178.5L106.1 181.6M95.2 180.9L103.5 184.1M110.9 191.9L125.3 178.0M125.3 178.0L133.6 180.9M122.7 180.5L131.0 183.4M138.7 191.9L152.5 177.4M152.5 177.4L160.9 179.9M150.0 180.0L158.5 182.5M166.6 191.9L179.9 177.0M179.9 177.0L188.4 179.2M177.5 179.6L186.0 181.9M194.4 191.9L207.4 176.7M207.4 176.7L215.9 178.7M205.0 179.4L213.6 181.4M222.2 191.9L234.8 176.4M234.8 176.4L243.4 178.2M232.5 179.1L237.3 180.2M250.0 191.9L262.2 176.0M262.2 176.0L270.9 177.6M260.0 178.9L264.8 179.7M277.9 191.9L289.6 175.7M289.6 175.7L298.3 177.1M287.5 178.6L292.3 179.4M305.7 191.9L317.3 175.6M317.3 175.6L326.0 176.9M315.2 178.5L320.0 179.2M333.5 191.9L345.3 175.7M345.3 175.7L354.0 177.1M343.2 178.6L348.0 179.4M361.4 191.9L373.4 175.9M373.4 175.9L382.1 177.4M371.2 178.8L376.0 179.6M389.2 191.9L401.3 176.0M401.3 176.0L410.0 177.6M399.2 178.9L403.9 179.7M417.0 191.9L429.0 175.9M429.0 175.9L437.7 177.4M426.9 178.8L431.6 179.6M444.8 191.9L456.4 175.5M456.4 175.5L465.1 176.8M454.3 178.5L459.1 179.2M472.7 191.9L483.6 175.1M483.6 175.1L492.3 176.0M481.6 178.1L486.4 178.6M500.5 191.9L510.9 174.8M510.9 174.8L519.7 175.4M509.0 177.9L513.8 178.2M528.3 191.9L538.4 174.6M538.4 174.6L547.2 175.1M536.6 177.7L541.4 178.0M556.2 191.9L566.0 174.5M566.0 174.5L574.8 174.9M564.3 177.6L569.1 177.8M584.0 191.9L593.7 174.4M593.7 174.4L602.5 174.7M592.0 177.6L596.8 177.7M611.8 191.9L621.5 174.4M621.5 174.4L630.3 174.6M619.7 177.5L624.6 177.7M639.7 191.9L649.2 174.3M649.2 174.3L658.0 174.5M647.5 177.5L652.3 177.6M667.5 191.9L676.9 174.2M676.9 174.2L685.7 174.4M675.2 177.4L680.0 177.5M695.3 191.9L704.5 174.1M704.5 174.1L713.3 174.2M702.8 177.3L707.7 177.3M723.2 191.9L732.0 173.9M732.0 173.9L740.8 173.8M730.4 177.2L735.2 177.1M751.0 191.9L759.4 173.7M759.4 173.7L768.2 173.4M757.9 177.0L762.7 176.8M778.8 191.9L786.7 173.5M786.7 173.5L795.4 172.9M785.2 176.8L790.1 176.5M806.6 191.9L813.9 173.2M813.9 173.2L822.6 172.4M812.6 176.6L817.4 176.1M834.5 191.9L841.2 173.0M841.2 173.0L849.9 171.9M840.0 176.4L844.8 175.8M862.3 191.9L868.7 172.9M868.7 172.9L877.4 171.6M867.5 176.3L876.2 175.0M890.1 191.9L896.4 172.9M896.4 172.9L905.1 171.5M895.3 176.3L904.0 175.0M918.0 191.9L924.2 172.9M924.2 172.9L932.9 171.5M923.1 176.3L931.8 174.9M945.8 191.9L951.9 172.9M951.9 172.9L960.6 171.5M950.8 176.3L959.5 174.9M973.6 191.9L979.6 172.8M979.6 172.8L988.3 171.3M978.5 176.2L987.2 174.8M1001.5 191.9L1007.2 172.7M1007.2 172.7L1015.8 171.1M1006.1 176.2L1014.8 174.6M1029.3 191.9L1034.7 172.6M1034.7 172.6L1043.3 170.9M1033.7 176.1L1042.3 174.4M1057.1 191.9L1062.2 172.5M1062.2 172.5L1070.8 170.7M1061.3 176.0L1069.9 174.2M1084.9 191.9L1089.8 172.5M1089.8 172.5L1098.4 170.5M1088.9 176.0L1097.5 174.0M1112.8 191.9L1117.5 172.5M1117.5 172.5L1126.1 170.5M1116.7 176.0L1125.3 173.9M1140.6 191.9L1145.4 172.5M1145.4 172.5L1154.0 170.5M1144.5 176.0L1153.1 174.0M1168.4 191.9L1173.3 172.5M1173.3 172.5L1181.9 170.5M1172.4 176.0L1181.0 174.0M1196.3 191.9L1201.2 172.5M1201.2 172.5L1209.8 170.6M1200.3 176.0L1208.9 174.1M1224.1 191.9L1229.2 172.5M1229.2 172.5L1237.8 170.7M1228.3 176.0L1236.9 174.2M1251.9 191.9L1257.1 172.6M1257.1 172.6L1265.7 170.8M1256.2 176.0L1264.8 174.2M1279.7 191.9L1285.1 172.6M1285.1 172.6L1293.7 170.8M1284.1 176.1L1292.7 174.3M27.4 219.2L42.5 206.1M42.5 206.1L50.6 209.4M39.8 208.4L47.9 211.7M55.2 219.2L70.3 206.1M70.3 206.1L78.5 209.3M67.6 208.4L75.7 211.7M83.1 219.2L97.9 205.9M97.9 205.9L106.2 209.0M95.3 208.3L103.5 211.4M110.9 219.2L125.3 205.3M125.3 205.3L133.6 208.2M122.7 207.8L131.0 210.7M138.7 219.2L152.6 204.8M152.6 204.8L161.0 207.3M150.1 207.4L158.5 209.9M166.6 219.2L180.1 204.5M180.1 204.5L188.6 206.8M177.6 207.1L186.1 209.5M194.4 219.2L207.7 204.3M207.7 204.3L216.2 206.6M205.3 207.0L210.0 208.3M222.2 219.2L235.3 204.1M235.3 204.1L243.8 206.2M232.9 206.8L237.6 207.9M250.0 219.2L262.6 203.6M262.6 203.6L271.2 205.4M260.3 206.4L265.0 207.4M277.9 219.2L289.7 203.1M289.7 203.1L298.4 204.5M287.6 206.0L292.4 206.8M305.7 219.2L317.1 202.8M317.1 202.8L325.8 203.9M315.0 205.7L319.8 206.4M333.5 219.2L344.8 202.7M344.8 202.7L353.5 203.8M342.8 205.7L347.6 206.3M361.4 219.2L372.8 202.8M372.8 202.8L381.5 204.0M370.7 205.7L375.5 206.4M389.2 219.2L400.7 202.8M400.7 202.8L409.4 204.1M398.6 205.8L403.4 206.5M417.0 219.2L428.3 202.7M428.3 202.7L437.0 203.8M426.2 205.6L431.0 206.2M444.8 219.2L455.6 202.4M455.6 202.4L464.4 203.2M453.7 205.4L458.5 205.9M472.7 219.2L483.0 202.1M483.0 202.1L491.8 202.7M481.2 205.2L486.0 205.5M500.5 219.2L510.6 201.9M510.6 201.9L519.4 202.4M508.8 205.0L513.6 205.3M528.3 219.2L538.2 201.8M538.2 201.8L547.0 202.2M536.5 205.0L541.3 205.2M556.2 219.2L566.0 201.8M566.0 201.8L574.8 202.1M564.2 204.9L569.0 205.1M584.0 219.2L593.7 201.7M593.7 201.7L602.5 202.1M592.0 204.9L596.8 205.1M611.8 219.2L621.6 201.7M621.6 201.7L630.4 202.1M619.8 204.9L624.6 205.1M639.7 219.2L649.4 201.7M649.4 201.7L658.2 202.0M647.6 204.9L652.5 205.0M667.5 219.2L677.1 201.7M677.1 201.7L685.9 201.9M675.4 204.8L680.2 205.0M695.3 219.2L704.7 201.6M704.7 201.6L713.5 201.7M703.0 204.7L707.9 204.8M723.2 219.2L732.2 201.4M732.2 201.4L741.0 201.4M730.6 204.6L735.4 204.6M751.0 219.2L759.6 201.2M759.6 201.2L768.4 200.9M758.0 204.4L762.9 204.3M778.8 219.2L786.9 200.9M786.9 200.9L795.6 200.4M785.4 204.2L790.2 203.9M806.6 219.2L814.1 200.7M814.1 200.7L822.9 199.9M812.8 204.0L817.6 203.6M834.5 219.2L841.4 200.5M841.4 200.5L850.1 199.4M840.2 203.8L848.9 202.8M862.3 219.2L868.9 200.3M868.9 200.3L877.6 199.1M867.7 203.7L876.4 202.5M890.1 219.2L896.5 200.2M896.5 200.2L905.2 199.0M895.3 203.7L904.0 202.4M918.0 219.2L924.2 200.2M924.2 200.2L932.9 198.8M923.1 203.6L931.8 202.3M945.8 219.2L951.8 200.1M951.8 200.1L960.5 198.7M950.7 203.6L959.4 202.1M973.6 219.2L979.4 200.1M979.4 200.1L988.0 198.5M978.3 203.5L987.0 201.9M1001.5 219.2L1007.0 200.0M1007.0 200.0L1015.7 198.3M1006.0 203.5L1014.7 201.8M1029.3 219.2L1034.7 200.0M1034.7 200.0L1043.4 198.3M1033.7 203.4L1042.4 201.7M1057.1 219.2L1062.4 199.9M1062.4 199.9L1071.1 198.2M1061.5 203.4L1070.1 201.6M1084.9 219.2L1090.2 199.9M1090.2 199.9L1098.8 198.1M1089.2 203.4L1097.8 201.6M1112.8 219.2L1117.9 199.9M1117.9 199.9L1126.5 198.0M1117.0 203.4L1125.6 201.5M1140.6 219.2L1145.7 199.9M1145.7 199.9L1154.3 198.0M1144.8 203.3L1153.4 201.5M1168.4 219.2L1173.5 199.9M1173.5 199.9L1182.1 198.0M1172.6 203.4L1181.2 201.5M1196.3 219.2L1201.4 199.9M1201.4 199.9L1210.0 198.0M1200.5 203.4L1209.1 201.5M1224.1 219.2L1229.3 199.9M1229.3 199.9L1237.9 198.1M1228.4 203.4L1237.0 201.6M1251.9 219.2L1257.2 199.9M1257.2 199.9L1265.8 198.1M1256.2 203.4L1264.8 201.6M1279.7 219.2L1285.1 199.9M1285.1 199.9L1293.7 198.2M1284.1 203.4L1292.7 201.6M27.4 246.5L42.4 233.3M42.4 233.3L50.6 236.6M39.7 235.7L44.2 237.5M55.2 246.5L70.2 233.3M70.2 233.3L78.4 236.5M67.5 235.7L72.0 237.5M83.1 246.5L97.8 233.0M97.8 233.0L106.1 236.1M95.2 235.5L99.7 237.2M110.9 246.5L125.1 232.5M125.1 232.5L133.5 235.3M122.6 235.0L127.2 236.5M138.7 246.5L152.6 232.1M152.6 232.1L161.0 234.6M150.1 234.7L154.7 236.1M166.6 246.5L180.3 232.0M180.3 232.0L188.8 234.5M177.8 234.6L182.5 236.0M194.4 246.5L208.2 232.0M208.2 232.0L216.6 234.5M205.7 234.7L210.3 236.0M222.2 246.5L235.8 231.9M235.8 231.9L244.3 234.3M233.3 234.5L238.0 235.8M250.0 246.5L263.0 231.3M263.0 231.3L271.6 233.4M260.7 234.1L265.4 235.2M277.9 246.5L289.9 230.6M289.9 230.6L298.6 232.1M287.7 233.4L292.5 234.3M305.7 246.5L316.9 229.9M316.9 229.9L325.6 231.0M314.9 232.9L319.7 233.5M333.5 246.5L344.2 229.6M344.2 229.6L352.9 230.4M342.3 232.7L347.1 233.1M361.4 246.5L371.8 229.5M371.8 229.5L380.5 230.1M369.9 232.5L374.7 232.9M389.2 246.5L399.4 229.4M399.4 229.4L408.2 230.0M397.6 232.5L402.4 232.8M417.0 246.5L427.1 229.3M427.1 229.3L435.9 229.7M425.3 232.4L430.1 232.6M444.8 246.5L454.7 229.2M454.7 229.2L463.5 229.6M453.0 232.3L457.8 232.5M472.7 246.5L482.5 229.1M482.5 229.1L491.3 229.5M480.7 232.3L485.6 232.5M500.5 246.5L510.4 229.1M510.4 229.1L519.2 229.5M508.6 232.3L513.4 232.5M528.3 246.5L538.2 229.1M538.2 229.1L547.0 229.5M536.4 232.3L541.2 232.5M556.2 246.5L566.0 229.1M566.0 229.1L574.8 229.5M564.2 232.2L569.0 232.4M584.0 246.5L593.8 229.1M593.8 229.1L602.6 229.5M592.0 232.2L596.9 232.4M611.8 246.5L621.7 229.1M621.7 229.1L630.5 229.5M619.9 232.3L624.7 232.5M639.7 246.5L649.5 229.1M649.5 229.1L658.3 229.5M647.8 232.3L652.6 232.5M667.5 246.5L677.3 229.1M677.3 229.1L686.1 229.5M675.5 232.2L680.4 232.4M695.3 246.5L704.9 229.0M704.9 229.0L713.7 229.3M703.2 232.2L708.0 232.3M723.2 246.5L732.4 228.8M732.4 228.8L741.2 228.9M730.8 232.0L735.6 232.1M751.0 246.5L759.8 228.6M759.8 228.6L768.6 228.5M758.2 231.8L763.1 231.8M778.8 246.5L787.1 228.3M787.1 228.3L795.9 228.0M785.6 231.6L790.4 231.4M806.6 246.5L814.4 228.1M814.4 228.1L823.1 227.4M813.0 231.4L817.8 231.1M834.5 246.5L841.7 227.9M841.7 227.9L850.4 227.0M840.4 231.2L849.1 230.3M862.3 246.5L869.1 227.7M869.1 227.7L877.8 226.6M867.9 231.1L876.6 230.0M890.1 246.5L896.6 227.6M896.6 227.6L905.3 226.3M895.4 231.0L904.1 229.8M918.0 246.5L924.1 227.5M924.1 227.5L932.8 226.1M923.0 230.9L931.7 229.5M945.8 246.5L951.5 227.4M951.5 227.4L960.2 225.8M950.5 230.8L959.2 229.3M973.6 246.5L979.1 227.3M979.1 227.3L987.7 225.6M978.1 230.8L986.7 229.1M1001.5 246.5L1006.8 227.3M1006.8 227.3L1015.4 225.5M1005.8 230.7L1014.5 229.0M1029.3 246.5L1034.6 227.3M1034.6 227.3L1043.2 225.5M1033.7 230.7L1042.3 229.0M1057.1 246.5L1062.5 227.3M1062.5 227.3L1071.1 225.5M1061.5 230.7L1070.1 229.0M1084.9 246.5L1090.3 227.3M1090.3 227.3L1098.9 225.5M1089.3 230.7L1098.0 229.0M1112.8 246.5L1118.1 227.3M1118.1 227.3L1126.7 225.5M1117.1 230.7L1125.8 229.0M1140.6 246.5L1145.9 227.2M1145.9 227.2L1154.5 225.5M1144.9 230.7L1153.5 228.9M1168.4 246.5L1173.7 227.2M1173.7 227.2L1182.3 225.4M1172.7 230.7L1181.4 228.9M1196.3 246.5L1201.5 227.2M1201.5 227.2L1210.1 225.4M1200.6 230.7L1209.2 228.9M1224.1 246.5L1229.3 227.2M1229.3 227.2L1237.9 225.4M1228.4 230.7L1237.0 228.9M1251.9 246.5L1257.2 227.2M1257.2 227.2L1265.8 225.4M1256.2 230.7L1264.8 228.9M1279.7 246.5L1285.0 227.2M1285.0 227.2L1293.6 225.4M1284.1 230.7L1292.7 228.9M27.4 273.9L42.2 260.4M42.2 260.4L50.4 263.6M39.6 262.9L44.1 264.6M55.2 273.9L70.0 260.3M70.0 260.3L78.2 263.4M67.3 262.8L71.8 264.5M83.1 273.9L97.5 260.0M97.5 260.0L105.8 262.9M94.9 262.5L99.5 264.1M110.9 273.9L124.9 259.6M124.9 259.6L133.3 262.2M122.4 262.2L127.0 263.6M138.7 273.9L152.6 259.4M152.6 259.4L161.0 262.0M150.1 262.0L154.7 263.4M166.6 273.9L180.5 259.6M180.5 259.6L188.9 262.2M178.0 262.1L182.6 263.6M194.4 273.9L208.4 259.6M208.4 259.6L216.8 262.3M205.9 262.2L210.5 263.7M222.2 273.9L236.2 259.5M236.2 259.5L244.6 262.1M233.6 262.1L238.3 263.5M250.0 273.9L263.4 259.0M263.4 259.0L271.9 261.3M261.0 261.7L265.7 262.9M277.9 273.9L290.1 258.0M290.1 258.0L298.7 259.6M287.9 260.9L292.6 261.8M305.7 273.9L316.6 257.1M316.6 257.1L325.4 258.1M314.7 260.1L319.5 260.7M333.5 273.9L343.5 256.6M343.5 256.6L352.3 257.0M341.7 259.7L346.6 259.9M361.4 273.9L370.8 256.2M370.8 256.2L379.6 256.4M369.1 259.4L374.0 259.5M389.2 273.9L398.4 256.1M398.4 256.1L407.2 256.1M396.7 259.3L401.5 259.3M417.0 273.9L426.1 256.1M426.1 256.1L434.9 256.1M424.5 259.3L429.3 259.3M444.8 273.9L454.1 256.2M454.1 256.2L462.9 256.2M452.5 259.3L457.3 259.4M472.7 273.9L482.3 256.4M482.3 256.4L491.1 256.6M480.6 259.5L485.4 259.7M500.5 273.9L510.5 256.5M510.5 256.5L519.2 257.0M508.7 259.6L513.5 259.9M528.3 273.9L538.3 256.5M538.3 256.5L547.1 257.0M536.5 259.7L541.4 259.9M556.2 273.9L566.1 256.5M566.1 256.5L574.9 256.9M564.3 259.6L569.1 259.8M584.0 273.9L593.9 256.5M593.9 256.5L602.7 256.9M592.1 259.6L596.9 259.8M611.8 273.9L621.8 256.5M621.8 256.5L630.6 256.9M620.0 259.6L624.8 259.9M639.7 273.9L649.6 256.5M649.6 256.5L658.4 257.0M647.8 259.7L652.7 259.9M667.5 273.9L677.4 256.5M677.4 256.5L686.2 256.9M675.6 259.6L680.5 259.9M695.3 273.9L705.1 256.4M705.1 256.4L713.9 256.8M703.3 259.6L708.2 259.7M723.2 273.9L732.6 256.2M732.6 256.2L741.4 256.4M730.9 259.4L735.7 259.5M751.0 273.9L760.0 256.0M760.0 256.0L768.8 256.0M758.4 259.2L763.2 259.2M778.8 273.9L787.3 255.8M787.3 255.8L796.1 255.5M785.8 259.0L790.6 258.9M806.6 273.9L814.6 255.5M814.6 255.5L823.4 255.0M813.2 258.8L822.0 258.3M834.5 273.9L841.9 255.3M841.9 255.3L850.7 254.5M840.6 258.7L849.3 257.9M862.3 273.9L869.3 255.1M869.3 255.1L878.0 254.1M868.0 258.5L876.7 257.5M890.1 273.9L896.6 254.9M896.6 254.9L905.3 253.7M895.4 258.4L904.2 257.1M918.0 273.9L923.9 254.8M923.9 254.8L932.6 253.3M922.9 258.2L931.5 256.7M945.8 273.9L951.3 254.6M951.3 254.6L959.9 253.0M950.3 258.1L958.9 256.4M973.6 273.9L978.9 254.6M978.9 254.6L987.5 252.8M977.9 258.0L986.6 256.3M1001.5 273.9L1006.7 254.6M1006.7 254.6L1015.3 252.7M1005.7 258.0L1014.3 256.2M1029.3 273.9L1034.5 254.6M1034.5 254.6L1043.1 252.8M1033.6 258.0L1042.2 256.2M1057.1 273.9L1062.4 254.6M1062.4 254.6L1071.0 252.8M1061.5 258.1L1070.1 256.3M1084.9 273.9L1090.3 254.6M1090.3 254.6L1098.9 252.9M1089.3 258.1L1098.0 256.3M1112.8 273.9L1118.2 254.6M1118.2 254.6L1126.8 252.9M1117.2 258.1L1125.8 256.3M1140.6 273.9L1146.0 254.6M1146.0 254.6L1154.6 252.9M1145.0 258.1L1153.6 256.3M1168.4 273.9L1173.7 254.6M1173.7 254.6L1182.4 252.8M1172.8 258.1L1181.4 256.3M1196.3 273.9L1201.5 254.6M1201.5 254.6L1210.1 252.8M1200.6 258.0L1209.2 256.2M1224.1 273.9L1229.3 254.6M1229.3 254.6L1237.9 252.7M1228.3 258.0L1237.0 256.2M1251.9 273.9L1257.1 254.5M1257.1 254.5L1265.7 252.7M1256.1 258.0L1264.8 256.2M1279.7 273.9L1284.9 254.5M1284.9 254.5L1293.5 252.7M1284.0 258.0L1292.6 256.2M27.4 301.2L41.8 287.3M41.8 287.3L50.1 290.2M39.2 289.8L43.8 291.4M55.2 301.2L69.5 287.2M69.5 287.2L77.8 290.0M66.9 289.7L71.5 291.3M83.1 301.2L97.1 286.9M97.1 286.9L105.5 289.5M94.5 289.5L99.2 290.9M110.9 301.2L124.7 286.7M124.7 286.7L133.1 289.2M122.2 289.3L126.8 290.7M138.7 301.2L152.5 286.7M152.5 286.7L161.0 289.3M150.1 289.3L154.7 290.7M166.6 301.2L180.6 286.9M180.6 286.9L189.0 289.6M178.0 289.5L182.7 291.0M194.4 301.2L208.5 287.0M208.5 287.0L216.9 289.7M206.0 289.6L210.6 291.1M222.2 301.2L236.3 287.0M236.3 287.0L244.6 289.6M233.7 289.5L238.3 291.0M250.0 301.2L263.5 286.4M263.5 286.4L272.0 288.8M261.1 289.1L265.8 290.4M277.9 301.2L290.0 285.3M290.0 285.3L298.7 286.9M287.8 288.2L292.6 289.1M305.7 301.2L316.4 284.3M316.4 284.3L325.1 285.1M314.4 287.3L319.3 287.8M333.5 301.2L343.0 283.6M343.0 283.6L351.8 283.8M341.3 286.8L346.1 286.9M361.4 301.2L370.1 283.2M370.1 283.2L378.9 283.0M368.5 286.4L373.4 286.4M389.2 301.2L397.7 283.1M397.7 283.1L406.5 282.8M396.1 286.3L401.0 286.2M417.0 301.2L425.6 283.1M425.6 283.1L434.4 282.8M424.0 286.4L428.9 286.2M444.8 301.2L453.8 283.3M453.8 283.3L462.6 283.2M452.2 286.5L457.0 286.5M472.7 301.2L482.5 283.8M482.5 283.8L491.3 284.2M480.8 286.9L485.6 287.1M500.5 301.2L511.0 284.2M511.0 284.2L519.7 284.8M509.1 287.2L513.9 287.6M528.3 301.2L538.8 284.1M538.8 284.1L547.5 284.8M536.9 287.2L541.7 287.6M556.2 301.2L566.2 283.9M566.2 283.9L575.0 284.4M564.4 287.0L569.3 287.3M584.0 301.2L593.9 283.8M593.9 283.8L602.7 284.2M592.1 287.0L597.0 287.2M611.8 301.2L621.8 283.9M621.8 283.9L630.6 284.3M620.0 287.0L624.8 287.2M639.7 301.2L649.7 283.9M649.7 283.9L658.4 284.3M647.9 287.0L652.7 287.2M667.5 301.2L677.4 283.9M677.4 283.9L686.2 284.3M675.7 287.0L680.5 287.2M695.3 301.2L705.1 283.8M705.1 283.8L713.9 284.1M703.4 286.9L708.2 287.1M723.2 301.2L732.7 283.6M732.7 283.6L741.5 283.8M730.9 286.8L735.8 286.9M751.0 301.2L760.1 283.4M760.1 283.4L768.9 283.4M758.4 286.6L763.3 286.6M778.8 301.2L787.5 283.2M787.5 283.2L796.2 282.9M785.9 286.4L790.7 286.3M806.6 301.2L814.8 282.9M814.8 282.9L823.6 282.5M813.3 286.2L822.1 285.8M834.5 301.2L842.1 282.7M842.1 282.7L850.9 282.0M840.7 286.0L849.5 285.4M862.3 301.2L869.4 282.5M869.4 282.5L878.2 281.6M868.1 285.9L876.9 284.9M890.1 301.2L896.7 282.3M896.7 282.3L905.4 281.1M895.5 285.7L904.2 284.5M918.0 301.2L923.9 282.1M923.9 282.1L932.6 280.6M922.8 285.5L931.5 284.0M945.8 301.2L951.2 282.0M951.2 282.0L959.9 280.2M950.3 285.4L958.9 283.7M973.6 301.2L978.8 281.9M978.8 281.9L987.5 280.1M977.9 285.4L986.5 283.6M1001.5 301.2L1006.6 281.9M1006.6 281.9L1015.2 280.1M1005.7 285.4L1014.3 283.5M1029.3 301.2L1034.5 281.9M1034.5 281.9L1043.1 280.1M1033.6 285.4L1042.2 283.6M1057.1 301.2L1062.4 281.9M1062.4 281.9L1071.0 280.1M1061.4 285.4L1066.2 284.4M1084.9 301.2L1090.3 281.9M1090.3 281.9L1098.9 280.2M1089.3 285.4L1094.1 284.4M1112.8 301.2L1118.2 281.9M1118.2 281.9L1126.8 280.2M1117.2 285.4L1125.8 283.7M1140.6 301.2L1146.0 281.9M1146.0 281.9L1154.6 280.2M1145.0 285.4L1153.6 283.6M1168.4 301.2L1173.7 281.9M1173.7 281.9L1182.3 280.1M1172.7 285.4L1181.4 283.6M1196.3 301.2L1201.4 281.9M1201.4 281.9L1210.0 280.0M1200.5 285.4L1209.1 283.5M1224.1 301.2L1229.1 281.8M1229.1 281.8L1237.7 280.0M1228.2 285.3L1236.8 283.4M1251.9 301.2L1256.9 281.8M1256.9 281.8L1265.5 279.9M1256.0 285.3L1264.6 283.4M1279.7 301.2L1284.7 281.8M1284.7 281.8L1293.3 279.9M1283.8 285.3L1292.4 283.4M27.4 328.5L41.3 314.2M41.3 314.2L49.7 316.8M38.8 316.8L43.4 318.2M55.2 328.5L69.0 314.0M69.0 314.0L77.4 316.5M66.5 316.6L71.2 318.0M83.1 328.5L96.7 313.9M96.7 313.9L105.1 316.3M94.2 316.5L98.9 317.8M110.9 328.5L124.4 313.8M124.4 313.8L132.9 316.2M122.0 316.5L126.7 317.8M138.7 328.5L152.4 313.9M152.4 313.9L160.9 316.4M149.9 316.6L154.6 317.9M166.6 328.5L180.5 314.2M180.5 314.2L188.9 316.7M178.0 316.7L182.6 318.2M194.4 328.5L208.4 314.3M208.4 314.3L216.8 316.9M205.9 316.8L210.5 318.3M222.2 328.5L236.1 314.1M236.1 314.1L244.5 316.7M233.6 316.7L238.2 318.1M250.0 328.5L263.3 313.5M263.3 313.5L271.8 315.7M260.9 316.2L265.6 317.4M277.9 328.5L289.9 312.5M289.9 312.5L298.5 314.0M287.7 315.4L292.5 316.2M305.7 328.5L316.2 311.5M316.2 311.5L325.0 312.2M314.3 314.6L319.1 315.0M333.5 328.5L342.6 310.7M342.6 310.7L351.4 310.7M340.9 313.9L345.8 313.9M361.4 328.5L369.5 310.3M369.5 310.3L378.3 309.8M368.0 313.6L372.9 313.3M389.2 328.5L397.3 310.2M397.3 310.2L406.1 309.8M395.8 313.5L400.7 313.3M417.0 328.5L425.4 310.4M425.4 310.4L434.2 310.0M423.9 313.6L428.7 313.4M444.8 328.5L453.5 310.5M453.5 310.5L462.3 310.3M452.0 313.8L456.8 313.6M472.7 328.5L483.0 311.4M483.0 311.4L491.8 312.0M481.1 314.5L486.0 314.8M500.5 328.5L511.7 311.9M511.7 311.9L520.4 313.0M509.6 314.9L514.5 315.5M528.3 328.5L539.3 311.8M539.3 311.8L548.0 312.7M537.3 314.8L542.1 315.3M556.2 328.5L566.5 311.4M566.5 311.4L575.2 312.0M564.6 314.5L569.4 314.8M584.0 328.5L593.9 311.1M593.9 311.1L602.7 311.6M592.1 314.3L596.9 314.5M611.8 328.5L621.7 311.2M621.7 311.2L630.5 311.6M620.0 314.3L624.8 314.5M639.7 328.5L649.6 311.2M649.6 311.2L658.4 311.6M647.8 314.3L652.7 314.5M667.5 328.5L677.4 311.2M677.4 311.2L686.2 311.6M675.6 314.3L680.4 314.5M695.3 328.5L705.1 311.1M705.1 311.1L713.9 311.4M703.3 314.2L708.1 314.4M723.2 328.5L732.6 310.9M732.6 310.9L741.4 311.1M730.9 314.1L735.8 314.2M751.0 328.5L760.1 310.7M760.1 310.7L768.9 310.7M758.5 313.9L763.3 313.9M778.8 328.5L787.5 310.5M787.5 310.5L796.3 310.4M786.0 313.8L790.8 313.7M806.6 328.5L814.9 310.3M814.9 310.3L823.7 309.9M813.4 313.6L818.3 313.4M834.5 328.5L842.3 310.1M842.3 310.1L851.1 309.5M840.9 313.4L849.7 312.8M862.3 328.5L869.6 309.9M869.6 309.9L878.4 309.1M868.3 313.3L877.1 312.4M890.1 328.5L896.9 309.7M896.9 309.7L905.6 308.6M895.6 313.1L904.4 312.0M918.0 328.5L924.0 309.5M924.0 309.5L932.7 308.1M922.9 312.9L931.6 311.5M945.8 328.5L951.3 309.3M951.3 309.3L960.0 307.6M950.3 312.8L959.0 311.1M973.6 328.5L978.9 309.2M978.9 309.2L987.5 307.5M978.0 312.7L986.6 310.9M1001.5 328.5L1006.7 309.2M1006.7 309.2L1015.3 307.4M1005.7 312.7L1014.3 310.9M1029.3 328.5L1034.5 309.2M1034.5 309.2L1043.1 307.4M1033.6 312.7L1038.3 311.7M1057.1 328.5L1062.4 309.3M1062.4 309.3L1071.1 307.5M1061.5 312.7L1066.2 311.8M1084.9 328.5L1090.3 309.3M1090.3 309.3L1099.0 307.5M1089.4 312.7L1094.1 311.8M1112.8 328.5L1118.1 309.3M1118.1 309.3L1126.8 307.5M1117.2 312.7L1121.9 311.8M1140.6 328.5L1145.9 309.2M1145.9 309.2L1154.5 307.4M1144.9 312.7L1153.5 310.9M1168.4 328.5L1173.5 309.2M1173.5 309.2L1182.1 307.3M1172.6 312.7L1181.2 310.8M1196.3 328.5L1201.2 309.2M1201.2 309.2L1209.8 307.2M1200.3 312.6L1208.9 310.7M1224.1 328.5L1228.9 309.1M1228.9 309.1L1237.5 307.1M1228.0 312.6L1236.6 310.6M1251.9 328.5L1256.6 309.1M1256.6 309.1L1265.2 307.1M1255.8 312.6L1264.3 310.6M1279.7 328.5L1284.4 309.1M1284.4 309.1L1293.0 307.0M1283.6 312.6L1292.1 310.5M27.4 355.9L40.9 341.1M40.9 341.1L49.4 343.4M38.4 343.7L43.1 345.0M55.2 355.9L68.6 341.0M68.6 341.0L77.1 343.3M66.2 343.7L70.9 344.9M83.1 355.9L96.3 340.9M96.3 340.9L104.9 343.1M93.9 343.6L98.6 344.8M110.9 355.9L124.2 340.9M124.2 340.9L132.7 343.1M121.8 343.6L126.5 344.8M138.7 355.9L152.1 341.0M152.1 341.0L160.6 343.3M149.7 343.7L154.4 345.0M166.6 355.9L180.1 341.2M180.1 341.2L188.6 343.6M177.7 343.8L182.3 345.1M194.4 355.9L208.0 341.2M208.0 341.2L216.5 343.7M205.6 343.9L210.2 345.2M222.2 355.9L235.7 341.1M235.7 341.1L244.2 343.4M233.3 343.8L237.9 345.0M250.0 355.9L263.1 340.7M263.1 340.7L271.6 342.8M260.8 343.4L265.5 344.6M277.9 355.9L290.2 340.1M290.2 340.1L298.8 341.8M288.0 342.9L292.7 343.9M305.7 355.9L316.6 339.1M316.6 339.1L325.3 340.0M314.6 342.1L319.4 342.6M333.5 355.9L342.4 337.9M342.4 337.9L351.2 337.8M340.8 341.2L345.6 341.1M361.4 355.9L368.8 337.3M368.8 337.3L377.5 336.5M367.4 340.6L372.3 340.2M389.2 355.9L396.6 337.3M396.6 337.3L405.4 336.5M395.3 340.6L400.1 340.2M417.0 355.9L425.2 337.6M425.2 337.6L434.0 337.2M423.8 340.9L428.6 340.7M444.8 355.9L453.2 337.7M453.2 337.7L462.0 337.4M451.7 341.0L456.6 340.8M472.7 355.9L483.0 338.8M483.0 338.8L491.8 339.4M481.2 341.8L486.0 342.2M500.5 355.9L511.8 339.4M511.8 339.4L520.5 340.5M509.8 342.3L514.6 343.0M528.3 355.9L539.3 339.2M539.3 339.2L548.1 340.1M537.4 342.2L542.2 342.7M556.2 355.9L566.4 338.7M566.4 338.7L575.2 339.3M564.6 341.8L569.4 342.1M584.0 355.9L593.8 338.4M593.8 338.4L602.6 338.8M592.0 341.6L596.9 341.7M611.8 355.9L621.6 338.4M621.6 338.4L630.4 338.7M619.8 341.5L624.7 341.7M639.7 355.9L649.4 338.4M649.4 338.4L658.2 338.8M647.7 341.6L652.5 341.8M667.5 355.9L677.2 338.4M677.2 338.4L686.0 338.7M675.5 341.5L680.3 341.7M695.3 355.9L704.9 338.3M704.9 338.3L713.7 338.6M703.2 341.5L708.0 341.6M723.2 355.9L732.5 338.2M732.5 338.2L741.3 338.3M730.8 341.4L735.7 341.5M751.0 355.9L760.1 338.0M760.1 338.0L768.9 338.0M758.4 341.3L763.3 341.3M778.8 355.9L787.6 337.9M787.6 337.9L796.4 337.7M786.0 341.1L790.8 341.0M806.6 355.9L815.0 337.7M815.0 337.7L823.8 337.4M813.5 341.0L818.3 340.8M834.5 355.9L842.5 337.5M842.5 337.5L851.2 337.0M841.0 340.8L849.8 340.3M862.3 355.9L869.8 337.3M869.8 337.3L878.6 336.6M868.5 340.7L877.3 339.9M890.1 355.9L897.1 337.1M897.1 337.1L905.9 336.1M895.9 340.5L904.6 339.5M918.0 355.9L924.4 336.9M924.4 336.9L933.1 335.6M923.2 340.3L931.9 339.1M945.8 355.9L951.6 336.7M951.6 336.7L960.3 335.2M950.6 340.2L959.3 338.6M973.6 355.9L979.1 336.6M979.1 336.6L987.8 334.9M978.1 340.1L982.9 339.2M1001.5 355.9L1006.8 336.6M1006.8 336.6L1015.5 334.9M1005.9 340.1L1010.6 339.1M1029.3 355.9L1034.7 336.6M1034.7 336.6L1043.3 334.9M1033.7 340.1L1038.4 339.1M1057.1 355.9L1062.5 336.6M1062.5 336.6L1071.1 334.9M1061.5 340.1L1066.3 339.1M1084.9 355.9L1090.3 336.6M1090.3 336.6L1099.0 334.9M1089.4 340.1L1094.1 339.1M1112.8 355.9L1118.1 336.6M1118.1 336.6L1126.7 334.8M1117.1 340.0L1121.9 339.1M1140.6 355.9L1145.7 336.5M1145.7 336.5L1154.3 334.7M1144.8 340.0L1153.4 338.1M1168.4 355.9L1173.3 336.5M1173.3 336.5L1181.9 334.5M1172.4 340.0L1181.0 338.0M1196.3 355.9L1200.9 336.4M1200.9 336.4L1209.4 334.3M1200.1 339.9L1208.6 337.8M1224.1 355.9L1228.5 336.4M1228.5 336.4L1237.1 334.2M1227.7 339.9L1236.3 337.7M1251.9 355.9L1256.3 336.3M1256.3 336.3L1264.8 334.1M1255.5 339.9L1264.0 337.7M1279.7 355.9L1284.1 336.3M1284.1 336.3L1292.6 334.1M1283.3 339.8L1291.8 337.6M27.4 383.2L40.6 368.1M40.6 368.1L49.1 370.3M38.2 370.8L42.9 372.0M55.2 383.2L68.3 368.1M68.3 368.1L76.9 370.2M66.0 370.8L70.7 371.9M83.1 383.2L96.1 368.0M96.1 368.0L104.6 370.1M93.7 370.7L98.4 371.9M110.9 383.2L123.9 368.0M123.9 368.0L132.5 370.1M121.6 370.7L126.3 371.9M138.7 383.2L151.8 368.1M151.8 368.1L160.4 370.2M149.5 370.8L154.2 371.9M166.6 383.2L179.7 368.2M179.7 368.2L188.3 370.3M177.4 370.9L182.1 372.1M194.4 383.2L207.7 368.3M207.7 368.3L216.2 370.5M205.3 371.0L210.0 372.2M222.2 383.2L235.7 368.4M235.7 368.4L244.2 370.8M233.3 371.1L237.9 372.4M250.0 383.2L263.9 368.8M263.9 368.8L272.3 371.3M261.4 371.4L266.0 372.8M277.9 383.2L291.8 368.8M291.8 368.8L300.2 371.4M289.3 371.4L293.9 372.8M305.7 383.2L318.1 367.5M318.1 367.5L326.8 369.3M315.9 370.4L320.7 371.3M333.5 383.2L342.8 365.5M342.8 365.5L351.6 365.6M341.1 368.7L346.0 368.7M361.4 383.2L367.9 364.3M367.9 364.3L376.6 363.1M366.7 367.7L371.5 367.0M389.2 383.2L394.4 363.9M394.4 363.9L403.0 362.1M393.5 367.4L398.2 366.4M417.0 383.2L422.9 364.1M422.9 364.1L431.6 362.6M444.8 383.2L452.1 364.6M452.1 364.6L460.9 363.7M472.7 383.2L481.7 365.4M481.7 365.4L490.5 365.4M500.5 383.2L510.9 366.1M510.9 366.1L519.6 366.7M528.3 383.2L538.6 366.0M538.6 366.0L547.4 366.6M556.2 383.2L565.9 365.7M565.9 365.7L574.7 366.1M564.2 368.9L569.0 369.1M584.0 383.2L593.5 365.6M593.5 365.6L602.3 365.8M591.8 368.8L596.6 368.9M611.8 383.2L621.3 365.6M621.3 365.6L630.1 365.8M619.6 368.8L624.5 368.9M639.7 383.2L649.2 365.6M649.2 365.6L658.0 365.9M647.5 368.8L652.3 368.9M667.5 383.2L677.1 365.6M677.1 365.6L685.8 365.9M675.3 368.8L680.2 368.9M695.3 383.2L704.8 365.6M704.8 365.6L713.6 365.8M703.1 368.8L707.9 368.9M723.2 383.2L732.5 365.5M732.5 365.5L741.3 365.6M730.8 368.7L735.6 368.7M751.0 383.2L760.1 365.4M760.1 365.4L768.9 365.4M758.4 368.6L763.3 368.6M778.8 383.2L787.6 365.2M787.6 365.2L796.4 365.1M786.0 368.4L790.8 368.4M806.6 383.2L815.1 365.0M815.1 365.0L823.8 364.7M813.5 368.3L818.4 368.1M834.5 383.2L842.5 364.9M842.5 364.9L851.3 364.4M841.1 368.2L845.9 367.9M862.3 383.2L870.0 364.7M870.0 364.7L878.8 364.1M868.6 368.1L873.5 367.7M890.1 383.2L897.5 364.6M897.5 364.6L906.2 363.7M896.1 367.9L904.9 367.1M918.0 383.2L924.8 364.4M924.8 364.4L933.5 363.3M923.6 367.8L928.4 367.2M945.8 383.2L952.1 364.2M952.1 364.2L960.8 362.9M951.0 367.6L955.8 366.9M973.6 383.2L979.5 364.1M979.5 364.1L988.2 362.6M978.5 367.5L983.2 366.7M1001.5 383.2L1007.1 364.0M1007.1 364.0L1015.8 362.4M1006.1 367.5L1010.9 366.6M1029.3 383.2L1034.9 364.0M1034.9 364.0L1043.5 362.3M1033.9 367.4L1038.6 366.5M1057.1 383.2L1062.6 364.0M1062.6 364.0L1071.3 362.3M1061.6 367.4L1066.4 366.5M1084.9 383.2L1090.3 363.9M1090.3 363.9L1098.9 362.2M1089.3 367.4L1094.1 366.4M1112.8 383.2L1117.9 363.9M1117.9 363.9L1126.5 362.0M1117.0 367.3L1121.7 366.3M1140.6 383.2L1145.4 363.8M1145.4 363.8L1154.0 361.8M1144.5 367.3L1153.1 365.3M1168.4 383.2L1172.9 363.7M1172.9 363.7L1181.5 361.6M1172.1 367.2L1180.7 365.1M1196.3 383.2L1200.5 363.6M1200.5 363.6L1209.0 361.4M1199.7 367.2L1208.2 364.9M1224.1 383.2L1228.1 363.6M1228.1 363.6L1236.6 361.3M1227.4 367.1L1235.9 364.8M1251.9 383.2L1255.9 363.6M1255.9 363.6L1264.3 361.2M1255.2 367.1L1263.6 364.7M1279.7 383.2L1283.7 363.6M1283.7 363.6L1292.2 361.2M1283.0 367.1L1291.5 364.7M27.4 410.5L40.4 395.3M40.4 395.3L49.0 397.4M38.1 398.1L42.8 399.2M55.2 410.5L68.2 395.3M68.2 395.3L76.7 397.3M65.8 398.0L70.5 399.1M83.1 410.5L95.9 395.2M95.9 395.2L104.5 397.2M93.6 398.0L98.3 399.1M110.9 410.5L123.7 395.2M123.7 395.2L132.3 397.2M121.4 397.9L126.1 399.0M138.7 410.5L151.6 395.2M151.6 395.2L160.2 397.2M149.3 398.0L154.0 399.1M166.6 410.5L179.5 395.3M179.5 395.3L188.1 397.4M177.2 398.1L181.9 399.2M194.4 410.5L207.7 395.6M207.7 395.6L216.2 397.8M205.3 398.3L210.0 399.5M222.2 410.5L236.3 396.3M236.3 396.3L244.7 399.0M233.8 398.9L238.4 400.3M250.0 410.5L265.3 397.6M265.3 397.6L273.4 401.0M262.6 399.9L267.0 401.8M277.9 410.5L294.0 398.6M294.0 398.6L301.8 402.6M291.1 400.8L295.4 402.9M305.7 410.5L320.8 397.4M320.8 397.4L328.9 400.7M318.1 399.7L322.6 401.6M333.5 410.5L343.8 393.4M343.8 393.4L352.6 394.0M342.0 396.4L346.8 396.8M361.4 410.5L368.0 391.7M368.0 391.7L376.7 390.5M366.8 395.0L371.6 394.4M389.2 410.5L394.0 391.1M394.0 391.1L402.6 389.1M417.0 410.5L421.9 391.1M421.9 391.1L430.4 389.1M444.8 410.5L450.8 391.4M450.8 391.4L459.5 389.9M472.7 410.5L479.9 391.9M479.9 391.9L488.6 390.9M500.5 410.5L508.8 392.3M508.8 392.3L517.6 392.0M528.3 410.5L537.2 392.6M537.2 392.6L546.0 392.5M556.2 410.5L565.2 392.7M565.2 392.7L574.0 392.7M584.0 410.5L593.2 392.8M593.2 392.8L602.0 392.9M591.6 396.0L596.4 396.0M611.8 410.5L621.2 392.9M621.2 392.9L630.0 393.0M619.5 396.0L624.4 396.1M639.7 410.5L649.1 392.9M649.1 392.9L657.9 393.1M647.4 396.1L652.3 396.2M667.5 410.5L677.0 392.9M677.0 392.9L685.8 393.2M675.3 396.1L680.1 396.2M695.3 410.5L704.8 392.9M704.8 392.9L713.6 393.1M703.1 396.1L707.9 396.2M723.2 410.5L732.5 392.8M732.5 392.8L741.3 393.0M751.0 410.5L760.1 392.7M760.1 392.7L768.9 392.7M758.5 395.9L763.3 395.9M778.8 410.5L787.6 392.5M787.6 392.5L796.4 392.4M786.0 395.8L790.8 395.7M806.6 410.5L815.0 392.4M815.0 392.4L823.8 392.0M813.5 395.6L818.3 395.4M834.5 410.5L842.5 392.2M842.5 392.2L851.3 391.7M841.1 395.5L845.9 395.2M862.3 410.5L870.1 392.1M870.1 392.1L878.9 391.5M868.7 395.4L873.5 395.1M890.1 410.5L897.7 392.0M897.7 392.0L906.5 391.3M896.3 395.3L901.2 394.9M918.0 410.5L925.2 391.9M925.2 391.9L933.9 391.0M923.9 395.2L928.7 394.7M945.8 410.5L952.6 391.7M952.6 391.7L961.3 390.6M951.4 395.1L956.2 394.5M973.6 410.5L980.0 391.6M980.0 391.6L988.7 390.3M978.8 395.0L983.6 394.3M1001.5 410.5L1007.5 391.4M1007.5 391.4L1016.2 390.0M1006.4 394.9L1011.2 394.1M1029.3 410.5L1035.0 391.4M1035.0 391.4L1043.7 389.8M1034.0 394.8L1038.8 394.0M1057.1 410.5L1062.6 391.3M1062.6 391.3L1071.3 389.6M1061.6 394.8L1066.4 393.8M1084.9 410.5L1090.2 391.2M1090.2 391.2L1098.8 389.4M1089.2 394.7L1094.0 393.7M1112.8 410.5L1117.6 391.1M1117.6 391.1L1126.2 389.1M1116.7 394.6L1121.5 393.5M1140.6 410.5L1145.0 391.0M1145.0 391.0L1153.6 388.9M1144.2 394.5L1152.8 392.4M1168.4 410.5L1172.5 390.9M1172.5 390.9L1181.0 388.6M1171.7 394.5L1180.2 392.1M1196.3 410.5L1200.0 390.9M1200.0 390.9L1208.5 388.4M1199.3 394.4L1207.8 392.0M1224.1 410.5L1227.7 390.8M1227.7 390.8L1236.1 388.3M1227.0 394.4L1235.5 391.9M1251.9 410.5L1255.4 390.8M1255.4 390.8L1263.9 388.3M1254.8 394.4L1263.2 391.8M1279.7 410.5L1283.3 390.8M1283.3 390.8L1291.7 388.3M1282.7 394.4L1291.1 391.8M27.4 437.8L40.4 422.6M40.4 422.6L49.0 424.7M38.1 425.4L42.8 426.5M55.2 437.8L68.2 422.6M68.2 422.6L76.7 424.6M65.8 425.3L70.5 426.5M83.1 437.8L95.9 422.5M95.9 422.5L104.5 424.5M93.6 425.3L98.3 426.4M110.9 437.8L123.7 422.5M123.7 422.5L132.3 424.4M121.4 425.3L126.1 426.3M138.7 437.8L151.5 422.5M151.5 422.5L160.1 424.4M149.2 425.2L153.9 426.3M166.6 437.8L179.5 422.6M179.5 422.6L188.0 424.6M177.1 425.3L181.9 426.4M194.4 437.8L207.8 423.0M207.8 423.0L216.3 425.2M205.3 425.7L210.0 426.9M222.2 437.8L236.6 424.0M236.6 424.0L244.9 426.8M234.0 426.5L238.6 428.0M250.0 437.8L266.0 425.7M266.0 425.7L273.9 429.6M263.1 427.9L267.4 430.0M277.9 437.8L294.8 427.2M294.8 427.2L302.4 431.8M291.8 429.1L295.9 431.6M305.7 437.8L322.1 426.5M322.1 426.5L329.9 430.6M319.2 428.5L323.4 430.8M333.5 437.8L343.9 420.8M343.9 420.8L352.7 421.4M342.1 423.8L346.9 424.2M361.4 437.8L368.5 419.2M368.5 419.2L377.2 418.2M367.2 422.5L372.0 422.0M389.2 437.8L395.0 418.7M395.0 418.7L403.6 417.1M417.0 437.8L421.5 418.4M421.5 418.4L430.1 416.2M444.8 437.8L449.9 418.5M449.9 418.5L458.5 416.6M472.7 437.8L479.0 418.9M479.0 418.9L487.7 417.5M500.5 437.8L507.7 419.2M507.7 419.2L516.5 418.3M528.3 437.8L536.4 419.5M536.4 419.5L545.2 419.0M556.2 437.8L565.0 419.9M565.0 419.9L573.8 419.7M584.0 437.8L593.3 420.1M593.3 420.1L602.1 420.3M611.8 437.8L621.4 420.3M621.4 420.3L630.2 420.5M639.7 437.8L649.3 420.3M649.3 420.3L658.1 420.6M667.5 437.8L677.1 420.3M677.1 420.3L685.9 420.6M695.3 437.8L705.0 420.3M705.0 420.3L713.8 420.6M723.2 437.8L732.7 420.3M732.7 420.3L741.5 420.5M751.0 437.8L760.2 420.1M760.2 420.1L769.0 420.2M778.8 437.8L787.5 419.9M787.5 419.9L796.3 419.7M806.6 437.8L814.9 419.6M814.9 419.6L823.7 419.2M813.4 422.9L818.2 422.7M834.5 437.8L842.4 419.5M842.4 419.5L851.1 418.9M840.9 422.8L845.8 422.5M862.3 437.8L870.0 419.4M870.0 419.4L878.8 418.8M868.6 422.7L873.5 422.4M890.1 437.8L897.8 419.4M897.8 419.4L906.6 418.7M896.4 422.7L901.2 422.3M918.0 437.8L925.4 419.3M925.4 419.3L934.2 418.5M924.1 422.6L928.9 422.2M945.8 437.8L952.9 419.2M952.9 419.2L961.7 418.2M951.6 422.5L956.4 422.0M973.6 437.8L980.3 419.0M980.3 419.0L989.0 417.9M979.1 422.4L983.9 421.8M1001.5 437.8L1007.7 418.8M1007.7 418.8L1016.4 417.5M1006.6 422.3L1011.3 421.5M1029.3 437.8L1035.1 418.7M1035.1 418.7L1043.8 417.2M1034.1 422.2L1038.8 421.3M1057.1 437.8L1062.5 418.6M1062.5 418.6L1071.1 416.9M1061.5 422.1L1066.3 421.1M1084.9 437.8L1089.9 418.5M1089.9 418.5L1098.5 416.5M1089.0 422.0L1093.7 420.9M1112.8 437.8L1117.2 418.4M1117.2 418.4L1125.8 416.2M1116.4 421.9L1121.1 420.7M1140.6 437.8L1144.6 418.3M1144.6 418.3L1153.1 415.9M1143.9 421.8L1152.4 419.4M1168.4 437.8L1172.0 418.2M1172.0 418.2L1180.5 415.7M1171.4 421.7L1179.8 419.2M1196.3 437.8L1199.6 418.1M1199.6 418.1L1208.0 415.5M1199.0 421.7L1207.4 419.0M1224.1 437.8L1227.3 418.1M1227.3 418.1L1235.6 415.4M1226.7 421.7L1235.1 419.0M1251.9 437.8L1255.1 418.1M1255.1 418.1L1263.5 415.4M1254.5 421.7L1262.9 419.0M1279.7 437.8L1283.0 418.1M1283.0 418.1L1291.4 415.4M1282.4 421.7L1290.8 419.0M27.4 465.2L40.6 450.1M40.6 450.1L49.1 452.3M38.2 452.8L42.9 454.0M55.2 465.2L68.4 450.1M68.4 450.1L76.9 452.2M66.0 452.8L70.7 454.0M83.1 465.2L96.1 450.0M96.1 450.0L104.7 452.1M93.8 452.8L98.5 453.9M110.9 465.2L123.8 449.9M123.8 449.9L132.4 452.0M121.5 452.7L126.2 453.8M138.7 465.2L151.6 449.9M151.6 449.9L160.2 451.9M149.3 452.6L154.0 453.7M166.6 465.2L179.4 449.9M179.4 449.9L188.0 451.9M177.1 452.6L181.8 453.7M194.4 465.2L207.6 450.2M207.6 450.2L216.1 452.3M205.2 452.9L209.9 454.1M222.2 465.2L236.2 450.9M236.2 450.9L244.6 453.5M233.7 453.5L238.3 454.9M250.0 465.2L265.3 452.3M265.3 452.3L273.4 455.7M262.6 454.6L267.0 456.4M277.9 465.2L294.0 453.4M294.0 453.4L301.9 457.4M291.1 455.5L295.4 457.7M305.7 465.2L320.7 451.9M320.7 451.9L328.9 455.1M318.0 454.3L322.5 456.1M333.5 465.2L342.6 447.4M342.6 447.4L351.4 447.4M341.0 450.6L345.8 450.6M361.4 465.2L367.8 446.2M367.8 446.2L376.5 444.9M389.2 465.2L392.2 445.4M392.2 445.4L400.5 442.6M417.0 465.2L419.8 445.4M419.8 445.4L428.1 442.5M444.8 465.2L449.6 445.8M449.6 445.8L458.2 443.7M472.7 465.2L479.6 446.4M479.6 446.4L488.4 445.4M500.5 465.2L507.7 446.5M507.7 446.5L516.5 445.6M528.3 465.2L536.3 446.8M536.3 446.8L545.1 446.3M556.2 465.2L565.2 447.3M565.2 447.3L574.0 447.3M584.0 465.2L593.7 447.7M593.7 447.7L602.5 448.0M611.8 465.2L621.6 447.8M621.6 447.8L630.4 448.1M639.7 465.2L649.5 447.8M649.5 447.8L658.3 448.1M667.5 465.2L677.4 447.8M677.4 447.8L686.2 448.2M695.3 465.2L705.3 447.8M705.3 447.8L714.1 448.3M723.2 465.2L733.0 447.8M733.0 447.8L741.8 448.1M751.0 465.2L760.4 447.5M760.4 447.5L769.2 447.7M778.8 465.2L787.6 447.2M787.6 447.2L796.4 447.0M806.6 465.2L814.7 446.9M814.7 446.9L823.5 446.4M834.5 465.2L842.1 446.7M842.1 446.7L850.9 446.0M840.8 450.0L845.6 449.7M862.3 465.2L869.9 446.7M869.9 446.7L878.7 446.0M868.5 450.0L873.4 449.6M890.1 465.2L897.8 446.7M897.8 446.7L906.5 446.0M896.4 450.0L901.2 449.6M918.0 465.2L925.5 446.7M925.5 446.7L934.3 445.9M924.2 450.0L929.0 449.6M945.8 465.2L953.1 446.6M953.1 446.6L961.8 445.7M951.8 449.9L956.6 449.4M973.6 465.2L980.5 446.4M980.5 446.4L989.2 445.3M979.2 449.8L984.0 449.2M1001.5 465.2L1007.7 446.2M1007.7 446.2L1016.4 444.9M1006.6 449.6L1011.4 448.9M1029.3 465.2L1035.0 446.0M1035.0 446.0L1043.6 444.4M1034.0 449.5L1038.7 448.6M1057.1 465.2L1062.3 445.9M1062.3 445.9L1070.9 444.0M1061.3 449.3L1066.1 448.3M1084.9 465.2L1089.5 445.7M1089.5 445.7L1098.1 443.6M1088.7 449.2L1093.4 448.1M1112.8 465.2L1116.9 445.6M1116.9 445.6L1125.3 443.3M1116.1 449.1L1120.8 447.9M1140.6 465.2L1144.2 445.5M1144.2 445.5L1152.6 443.0M1143.6 449.0L1152.0 446.5M1168.4 465.2L1171.7 445.4M1171.7 445.4L1180.0 442.8M1171.1 449.0L1179.5 446.3M1196.3 465.2L1199.3 445.4M1199.3 445.4L1207.6 442.6M1198.7 449.0L1207.1 446.2M1224.1 465.2L1227.0 445.4M1227.0 445.4L1235.4 442.6M1226.5 449.0L1234.8 446.1M1251.9 465.2L1254.8 445.4M1254.8 445.4L1263.2 442.6M1254.3 449.0L1262.7 446.2M1279.7 465.2L1282.8 445.4M1282.8 445.4L1291.1 442.6M1282.2 449.0L1290.6 446.2M27.4 492.5L40.9 477.7M40.9 477.7L49.4 480.1M38.5 480.4L43.1 481.7M55.2 492.5L68.7 477.8M68.7 477.8L77.2 480.1M66.3 480.4L71.0 481.7M83.1 492.5L96.5 477.7M96.5 477.7L105.0 480.0M94.1 480.4L98.8 481.7M110.9 492.5L124.2 477.6M124.2 477.6L132.8 479.9M121.8 480.3L126.5 481.6M138.7 492.5L151.9 477.5M151.9 477.5L160.4 479.6M149.5 480.2L154.2 481.4M166.6 492.5L179.6 477.3M179.6 477.3L188.1 479.4M177.2 480.0L181.9 481.2M194.4 492.5L207.3 477.3M207.3 477.3L215.9 479.3M205.0 480.0L209.7 481.1M222.2 492.5L235.4 477.4M235.4 477.4L243.9 479.6M233.0 480.1L237.7 481.3M250.0 492.5L263.6 477.8M263.6 477.8L272.0 480.1M261.1 480.4L265.8 481.7M277.9 492.5L291.3 477.7M291.3 477.7L299.8 479.9M288.8 480.3L293.5 481.6M305.7 492.5L316.9 476.0M316.9 476.0L325.7 477.1M314.9 478.9L319.7 479.5M333.5 492.5L340.6 473.8M340.6 473.8L349.4 472.9M339.4 477.2L344.2 476.7M361.4 492.5L365.4 472.9M365.4 472.9L373.9 470.6M389.2 492.5L390.7 472.6M390.7 472.6L398.8 469.2M417.0 492.5L419.3 472.6M419.3 472.6L427.5 469.6M444.8 492.5L450.7 473.4M450.7 473.4L459.3 471.8M472.7 492.5L480.1 473.9M480.1 473.9L488.8 473.1M500.5 492.5L507.9 473.9M507.9 473.9L516.7 473.2M528.3 492.5L536.6 474.3M536.6 474.3L545.4 473.9M556.2 492.5L565.4 474.8M565.4 474.8L574.2 474.9M584.0 492.5L593.9 475.1M593.9 475.1L602.7 475.5M611.8 492.5L621.8 475.2M621.8 475.2L630.6 475.6M639.7 492.5L649.6 475.2M649.6 475.2L658.4 475.6M667.5 492.5L677.7 475.3M677.7 475.3L686.5 475.9M695.3 492.5L705.7 475.4M705.7 475.4L714.5 476.1M723.2 492.5L733.5 475.4M733.5 475.4L742.3 476.0M751.0 492.5L760.8 475.1M760.8 475.1L769.6 475.5M778.8 492.5L787.8 474.6M787.8 474.6L796.6 474.6M806.6 492.5L814.6 474.2M814.6 474.2L823.4 473.6M834.5 492.5L842.0 474.0M842.0 474.0L850.8 473.3M862.3 492.5L869.8 474.0M869.8 474.0L878.6 473.2M868.5 477.3L873.3 476.9M890.1 492.5L897.7 474.0M897.7 474.0L906.5 473.3M896.4 477.3L901.2 476.9M918.0 492.5L925.6 474.0M925.6 474.0L934.3 473.3M924.2 477.3L929.0 477.0M945.8 492.5L953.1 473.9M953.1 473.9L961.9 473.1M951.8 477.3L956.6 476.8M973.6 492.5L980.5 473.7M980.5 473.7L989.2 472.6M979.2 477.1L984.0 476.5M1001.5 492.5L1007.6 473.5M1007.6 473.5L1016.3 472.1M1006.5 476.9L1011.3 476.1M1029.3 492.5L1034.7 473.3M1034.7 473.3L1043.3 471.6M1033.7 476.7L1038.5 475.8M1057.1 492.5L1061.9 473.1M1061.9 473.1L1070.4 471.1M1061.0 476.6L1065.7 475.5M1084.9 492.5L1089.1 472.9M1089.1 472.9L1097.6 470.7M1088.4 476.5L1093.0 475.2M1112.8 492.5L1116.5 472.9M1116.5 472.9L1124.9 470.4M1115.8 476.4L1120.4 475.0M1140.6 492.5L1143.9 472.8M1143.9 472.8L1152.3 470.1M1143.3 476.3L1147.9 474.9M1168.4 492.5L1171.4 472.7M1171.4 472.7L1179.8 470.0M1170.9 476.3L1179.3 473.5M1196.3 492.5L1199.1 472.7M1199.1 472.7L1207.4 469.9M1198.6 476.3L1206.9 473.4M1224.1 492.5L1226.9 472.7M1226.9 472.7L1235.2 469.9M1226.4 476.3L1234.7 473.4M1251.9 492.5L1254.7 472.7M1254.7 472.7L1263.1 469.9M1254.2 476.3L1262.6 473.4M1279.7 492.5L1282.6 472.7M1282.6 472.7L1291.0 469.9M1282.1 476.3L1290.5 473.5M27.4 519.8L41.4 505.5M41.4 505.5L49.8 508.2M38.9 508.1L43.5 509.6M55.2 519.8L69.3 505.6M69.3 505.6L77.7 508.3M66.8 508.2L71.4 509.7M83.1 519.8L97.2 505.7M97.2 505.7L105.6 508.4M94.7 508.2L99.3 509.7M110.9 519.8L125.0 505.6M125.0 505.6L133.4 508.3M122.4 508.2L127.1 509.7M138.7 519.8L152.6 505.4M152.6 505.4L161.0 508.0M150.1 508.0L154.7 509.4M166.6 519.8L180.0 505.1M180.0 505.1L188.5 507.4M177.6 507.7L182.3 509.0M194.4 519.8L207.4 504.6M207.4 504.6L215.9 506.7M205.0 507.4L209.7 508.5M222.2 519.8L234.8 504.3M234.8 504.3L243.4 506.1M232.5 507.1L237.3 508.1M250.0 519.8L262.2 503.9M262.2 503.9L270.8 505.5M260.0 506.8L264.7 507.7M277.9 519.8L289.1 503.3M289.1 503.3L297.8 504.4M287.1 506.3L291.9 506.9M305.7 519.8L315.0 502.2M315.0 502.2L323.8 502.3M313.4 505.3L318.2 505.4M333.5 519.8L339.9 500.9M339.9 500.9L348.6 499.6M338.7 504.3L343.5 503.6M361.4 519.8L364.9 500.2M364.9 500.2L373.3 497.6M389.2 519.8L392.2 500.1M391.6 503.5L396.2 502.0M417.0 519.8L420.7 500.2M420.0 503.6L424.7 502.2M444.8 519.8L450.4 500.6M450.4 500.6L459.1 499.0M472.7 519.8L479.6 501.1M479.6 501.1L488.4 500.1M500.5 519.8L508.5 501.5M508.5 501.5L517.3 501.0M528.3 519.8L537.1 501.9M537.1 501.9L545.9 501.7M556.2 519.8L565.5 502.1M565.5 502.1L574.3 502.2M584.0 519.8L593.8 502.4M593.8 502.4L602.6 502.8M611.8 519.8L621.8 502.5M621.8 502.5L630.6 502.9M639.7 519.8L649.8 502.6M649.8 502.6L658.5 503.1M667.5 519.8L678.2 502.9M678.2 502.9L686.9 503.7M695.3 519.8L706.4 503.2M706.4 503.2L715.1 504.1M723.2 519.8L734.1 503.1M734.1 503.1L742.8 504.0M751.0 519.8L761.3 502.7M761.3 502.7L770.1 503.4M778.8 519.8L788.3 502.2M788.3 502.2L797.1 502.4M806.6 519.8L815.0 501.7M815.0 501.7L823.8 501.3M834.5 519.8L842.1 501.4M842.1 501.4L850.9 500.7M862.3 519.8L869.9 501.3M869.9 501.3L878.7 500.6M890.1 519.8L897.8 501.4M897.8 501.4L906.6 500.7M918.0 519.8L925.6 501.4M925.6 501.4L934.4 500.7M945.8 519.8L953.1 501.2M953.1 501.2L961.9 500.4M951.8 504.6L956.6 504.1M973.6 519.8L980.3 501.0M980.3 501.0L989.1 499.9M979.1 504.4L983.9 503.8M1001.5 519.8L1007.3 500.7M1007.3 500.7L1016.0 499.2M1006.3 504.2L1011.0 503.3M1029.3 519.8L1034.3 500.5M1034.3 500.5L1042.9 498.6M1033.4 504.0L1038.1 502.9M1057.1 519.8L1061.3 500.3M1061.3 500.3L1069.8 498.0M1060.6 503.8L1065.2 502.6M1084.9 519.8L1088.6 500.2M1088.6 500.2L1097.0 497.7M1087.9 503.7L1092.6 502.3M1112.8 519.8L1116.0 500.1M1116.0 500.1L1124.4 497.5M1115.5 503.7L1120.1 502.2M1140.6 519.8L1143.6 500.1M1143.6 500.1L1152.0 497.3M1143.1 503.6L1147.7 502.1M1168.4 519.8L1171.3 500.0M1171.3 500.0L1179.7 497.2M1170.8 503.6L1179.1 500.8M1196.3 519.8L1199.1 500.0M1199.1 500.0L1207.4 497.2M1198.6 503.6L1206.9 500.7M1224.1 519.8L1226.9 500.0M1226.9 500.0L1235.2 497.2M1226.4 503.6L1234.7 500.7M1251.9 519.8L1254.7 500.0M1254.7 500.0L1263.0 497.2M1254.2 503.6L1262.5 500.7M1279.7 519.8L1282.6 500.0M1282.6 500.0L1290.9 497.2M1282.1 503.6L1290.4 500.8M27.4 547.2L42.0 533.5M42.0 533.5L50.2 536.4M39.3 535.9L43.9 537.6M55.2 547.2L70.0 533.7M70.0 533.7L78.3 536.8M67.4 536.1L71.9 537.9M83.1 547.2L98.1 534.0M98.1 534.0L106.3 537.2M95.4 536.4L99.9 538.1M110.9 547.2L126.0 534.1M126.0 534.1L134.2 537.4M123.3 536.5L127.8 538.3M138.7 547.2L153.7 534.0M153.7 534.0L161.9 537.2M151.0 536.3L155.5 538.1M166.6 547.2L181.1 533.4M181.1 533.4L189.4 536.3M178.4 535.9L183.0 537.5M194.4 547.2L208.1 532.6M208.1 532.6L216.5 535.0M205.6 535.2L210.2 536.6M222.2 547.2L235.0 531.8M235.0 531.8L243.6 533.7M232.7 534.5L237.4 535.6M250.0 547.2L262.0 531.2M262.0 531.2L270.7 532.7M259.9 534.0L264.6 534.9M277.9 547.2L289.2 530.7M289.2 530.7L297.9 531.8M287.2 533.6L292.0 534.3M305.7 547.2L316.3 530.2M316.3 530.2L325.1 531.0M314.4 533.3L319.2 533.7M333.5 547.2L342.4 529.3M342.4 529.3L351.2 529.2M361.4 547.2L366.8 527.9M365.9 531.3L370.6 530.4M389.2 547.2L393.1 527.5M392.4 531.0L397.0 529.7M417.0 547.2L421.3 527.6M420.5 531.0L425.2 529.8M444.8 547.2L450.7 528.0M449.6 531.4L454.4 530.5M472.7 547.2L480.0 528.6M480.0 528.6L488.8 527.8M500.5 547.2L509.4 529.2M509.4 529.2L518.2 529.2M528.3 547.2L537.6 529.4M537.6 529.4L546.4 529.5M556.2 547.2L565.4 529.5M565.4 529.5L574.2 529.6M584.0 547.2L593.7 529.7M593.7 529.7L602.5 529.9M611.8 547.2L621.8 529.8M621.8 529.8L630.6 530.3M639.7 547.2L650.1 530.1M650.1 530.1L658.8 530.7M667.5 547.2L678.6 530.5M678.6 530.5L687.3 531.6M695.3 547.2L706.7 530.7M706.7 530.7L715.4 531.9M723.2 547.2L734.4 530.6M734.4 530.6L743.1 531.7M751.0 547.2L761.7 530.3M761.7 530.3L770.4 531.1M778.8 547.2L788.9 529.9M788.9 529.9L797.7 530.4M806.6 547.2L816.0 529.5M816.0 529.5L824.8 529.7M834.5 547.2L842.9 529.0M842.9 529.0L851.7 528.7M862.3 547.2L870.3 528.8M870.3 528.8L879.1 528.3M890.1 547.2L898.1 528.8M898.1 528.8L906.8 528.2M918.0 547.2L925.7 528.7M925.7 528.7L934.5 528.1M945.8 547.2L953.1 528.5M953.1 528.5L961.8 527.7M973.6 547.2L980.1 528.2M980.1 528.2L988.8 527.0M978.9 531.6L983.7 531.0M1001.5 547.2L1006.9 527.9M1006.9 527.9L1015.5 526.2M1005.9 531.4L1010.6 530.4M1029.3 547.2L1033.6 527.7M1033.6 527.7L1042.2 525.5M1032.9 531.2L1037.5 530.0M1057.1 547.2L1060.6 527.5M1060.6 527.5L1069.0 524.9M1060.0 531.0L1064.6 529.6M1084.9 547.2L1087.9 527.4M1087.9 527.4L1096.2 524.6M1087.4 530.9L1091.9 529.4M1112.8 547.2L1115.5 527.4M1115.5 527.4L1123.8 524.5M1115.0 530.9L1119.6 529.3M1140.6 547.2L1143.3 527.4M1143.3 527.4L1151.6 524.5M1142.8 530.9L1147.4 529.3M1168.4 547.2L1171.2 527.4M1171.2 527.4L1179.5 524.5M1170.7 530.9L1175.3 529.3M1196.3 547.2L1199.0 527.4M1199.0 527.4L1207.4 524.5M1198.5 530.9L1206.9 528.1M1224.1 547.2L1226.9 527.4M1226.9 527.4L1235.2 524.5M1226.4 530.9L1234.7 528.1M1251.9 547.2L1254.7 527.4M1254.7 527.4L1263.0 524.5M1254.2 530.9L1262.5 528.1M1279.7 547.2L1282.6 527.4M1282.6 527.4L1290.9 524.5M1282.1 530.9L1290.4 528.1M27.4 574.5L42.6 561.5M42.6 561.5L50.7 564.8M39.8 563.8L44.3 565.7M55.2 574.5L70.8 561.9M70.8 561.9L78.8 565.5M68.0 564.2L72.4 566.2M83.1 574.5L99.1 562.5M99.1 562.5L107.0 566.4M96.2 564.7L100.5 566.8M110.9 574.5L127.2 563.0M127.2 563.0L135.0 567.1M124.3 565.0L128.6 567.3M138.7 574.5L155.1 563.1M155.1 563.1L162.9 567.2M152.2 565.1L156.4 567.4M166.6 574.5L182.5 562.5M182.5 562.5L190.4 566.3M179.7 564.6L184.0 566.8M194.4 574.5L209.3 561.2M209.3 561.2L217.5 564.4M206.6 563.6L211.1 565.4M222.2 574.5L235.8 559.9M235.8 559.9L244.3 562.3M233.4 562.5L238.0 563.8M250.0 574.5L262.7 559.1M262.7 559.1L271.3 560.9M260.5 561.8L265.2 562.9M277.9 574.5L290.4 558.9M290.4 558.9L299.0 560.7M288.2 561.7L292.9 562.7M305.7 574.5L319.1 559.7M319.1 559.7L327.6 561.9M316.7 562.3L321.4 563.6M333.5 574.5L347.6 560.3M347.6 560.3L356.0 562.9M361.4 574.5L371.6 557.3M369.8 560.3L374.6 560.6M389.2 574.5L392.0 554.7M391.5 558.2L396.1 556.6M417.0 574.5L419.7 554.7M419.2 558.1L423.8 556.5M444.8 574.5L451.1 555.5M450.0 558.8L454.8 558.1M472.7 574.5L480.1 555.9M480.1 555.9L488.9 555.2M500.5 574.5L509.3 556.6M509.3 556.6L518.1 556.4M528.3 574.5L537.6 556.8M537.6 556.8L546.4 556.9M556.2 574.5L565.5 556.8M565.5 556.8L574.3 557.0M584.0 574.5L593.8 557.1M593.8 557.1L602.6 557.4M611.8 574.5L622.1 557.3M622.1 557.3L630.8 557.9M639.7 574.5L650.3 557.6M650.3 557.6L659.0 558.3M667.5 574.5L678.6 557.9M678.6 557.9L687.4 558.9M695.3 574.5L706.7 558.1M706.7 558.1L715.4 559.2M723.2 574.5L734.4 557.9M734.4 557.9L743.1 559.0M751.0 574.5L761.6 557.6M761.6 557.6L770.4 558.4M778.8 574.5L789.3 557.5M789.3 557.5L798.1 558.2M806.6 574.5L816.9 557.3M816.9 557.3L825.7 557.9M834.5 574.5L843.9 556.9M843.9 556.9L852.7 557.1M862.3 574.5L871.0 556.5M871.0 556.5L879.8 556.3M890.1 574.5L898.4 556.3M898.4 556.3L907.2 555.9M918.0 574.5L925.8 556.1M925.8 556.1L934.6 555.5M945.8 574.5L952.9 555.8M952.9 555.8L961.7 554.9M973.6 574.5L979.7 555.5M979.7 555.5L988.4 554.0M1001.5 574.5L1006.3 555.1M1006.3 555.1L1014.9 553.1M1029.3 574.5L1032.9 554.8M1032.9 554.8L1041.3 552.3M1032.2 558.4L1036.8 557.0M1057.1 574.5L1059.7 554.7M1059.7 554.7L1068.0 551.7M1059.3 558.2L1063.8 556.6M1084.9 574.5L1087.0 554.6M1087.0 554.6L1095.3 551.5M1086.7 558.2L1091.2 556.5M1112.8 574.5L1114.8 554.6M1114.8 554.6L1123.0 551.4M1114.4 558.2L1118.9 556.4M1140.6 574.5L1142.8 554.6M1142.8 554.6L1151.1 551.5M1142.4 558.2L1147.0 556.5M1168.4 574.5L1170.9 554.7M1170.9 554.7L1179.2 551.7M1170.5 558.2L1175.0 556.6M1196.3 574.5L1198.9 554.7M1198.9 554.7L1207.2 551.7M1198.4 558.2L1203.0 556.6M1224.1 574.5L1226.7 554.7M1226.7 554.7L1235.0 551.8M1226.3 558.2L1234.6 555.3M1251.9 574.5L1254.6 554.7M1254.6 554.7L1262.9 551.8M1254.1 558.2L1262.4 555.3M1279.7 574.5L1282.5 554.7M1282.5 554.7L1290.8 551.8M1282.0 558.3L1290.3 555.4M27.4 601.8L43.1 589.5M43.1 589.5L51.1 593.2M40.3 591.7L48.3 595.4M55.2 601.8L71.5 590.1M71.5 590.1L79.3 594.2M68.5 592.2L76.4 596.3M83.1 601.8L99.9 591.0M99.9 591.0L107.5 595.4M96.8 592.9L104.4 597.3M110.9 601.8L128.2 591.8M128.2 591.8L135.6 596.5M125.1 593.6L132.5 598.4M138.7 601.8L156.2 592.2M156.2 592.2L163.5 597.1M153.1 593.9L157.1 596.6M166.6 601.8L183.8 591.8M183.8 591.8L191.2 596.6M180.7 593.6L184.8 596.2M194.4 601.8L210.7 590.3M210.7 590.3L218.5 594.4M207.8 592.4L212.0 594.6M222.2 601.8L236.9 588.3M236.9 588.3L245.2 591.4M234.3 590.7L238.8 592.4M250.0 601.8L263.6 587.2M263.6 587.2L272.1 589.6M261.2 589.8L265.9 591.1M277.9 601.8L291.4 587.1M291.4 587.1L299.9 589.5M289.0 589.8L293.6 591.1M305.7 601.8L320.4 588.2M320.4 588.2L328.6 591.3M317.7 590.7L322.3 592.3M333.5 601.8L349.3 589.5M349.3 589.5L357.3 593.3M361.4 601.8L373.9 586.2M373.9 586.2L382.5 588.1M389.2 601.8L389.7 581.8M389.6 585.3L393.9 583.2M417.0 601.8L417.9 581.8M417.7 585.3L422.1 583.3M444.8 601.8L451.6 583.0M450.4 586.3L455.2 585.7M472.7 601.8L480.1 583.3M480.1 583.3L488.9 582.5M500.5 601.8L508.8 583.6M508.8 583.6L517.6 583.2M528.3 601.8L537.5 584.0M537.5 584.0L546.3 584.1M556.2 601.8L566.0 584.4M566.0 584.4L574.7 584.7M584.0 601.8L594.5 584.8M594.5 584.8L603.3 585.5M611.8 601.8L622.6 585.0M622.6 585.0L631.4 585.9M639.7 601.8L650.5 585.0M650.5 585.0L659.2 585.9M667.5 601.8L678.4 585.1M678.4 585.1L687.2 586.0M695.3 601.8L706.4 585.2M706.4 585.2L715.1 586.2M723.2 601.8L734.0 585.0M734.0 585.0L742.8 585.9M751.0 601.8L761.6 584.9M761.6 584.9L770.3 585.6M778.8 601.8L789.4 584.9M789.4 584.9L798.1 585.6M806.6 601.8L817.1 584.8M817.1 584.8L825.8 585.4M834.5 601.8L844.3 584.4M844.3 584.4L853.1 584.8M862.3 601.8L871.4 584.0M871.4 584.0L880.2 584.0M890.1 601.8L898.6 583.7M898.6 583.7L907.4 583.4M918.0 601.8L925.8 583.4M925.8 583.4L934.6 582.8M945.8 601.8L952.7 583.1M952.7 583.1L961.4 582.0M973.6 601.8L979.3 582.7M979.3 582.7L987.9 581.0M1001.5 601.8L1005.7 582.3M1005.7 582.3L1014.2 580.0M1029.3 601.8L1032.1 582.0M1032.1 582.0L1040.4 579.2M1057.1 601.8L1058.9 581.9M1058.9 581.9L1067.1 578.6M1084.9 601.8L1086.2 581.9M1086.2 581.9L1094.3 578.4M1086.0 585.5L1090.4 583.6M1112.8 601.8L1114.1 581.9M1114.1 581.9L1122.1 578.4M1113.8 585.5L1118.3 583.5M1140.6 601.8L1142.3 581.9M1142.3 581.9L1150.4 578.6M1142.0 585.5L1146.5 583.7M1168.4 601.8L1170.6 581.9M1170.6 581.9L1178.8 578.8M1170.2 585.5L1174.7 583.8M1196.3 601.8L1198.6 582.0M1198.6 582.0L1206.8 578.9M1198.2 585.5L1202.7 583.9M1224.1 601.8L1226.4 582.0M1226.4 582.0L1234.7 578.9M1226.0 585.5L1234.2 582.5M1251.9 601.8L1254.3 582.0M1254.3 582.0L1262.5 578.9M1253.9 585.5L1262.1 582.5M1279.7 601.8L1282.3 582.0M1282.3 582.0L1290.5 579.0M1281.8 585.6L1290.1 582.6M27.4 629.2L43.6 617.4M43.6 617.4L51.4 621.4M40.6 619.5L48.5 623.5M55.2 629.2L71.9 618.1M71.9 618.1L79.6 622.4M68.9 620.1L76.6 624.4M83.1 629.2L100.3 619.0M100.3 619.0L107.7 623.8M97.2 620.9L104.6 625.6M110.9 629.2L128.7 620.0M128.7 620.0L135.8 625.1M125.5 621.6L132.6 626.8M138.7 629.2L156.7 620.5M156.7 620.5L163.7 625.8M153.5 622.0L160.5 627.3M166.6 629.2L184.5 620.3M184.5 620.3L191.5 625.6M181.3 621.9L188.3 627.2M194.4 629.2L211.6 619.0M211.6 619.0L219.0 623.7M208.5 620.8L215.9 625.5M222.2 629.2L237.8 616.7M237.8 616.7L245.8 620.3M235.0 618.9L243.0 622.6M250.0 629.2L264.5 615.4M264.5 615.4L272.8 618.3M261.9 617.9L270.2 620.8M277.9 629.2L292.1 615.1M292.1 615.1L300.4 617.9M289.5 617.6L294.1 619.2M305.7 629.2L320.0 615.2M320.0 615.2L328.4 618.1M317.5 617.7L322.0 619.3M333.5 629.2L347.9 615.3M347.9 615.3L356.2 618.1M345.3 617.8L349.9 619.3M361.4 629.2L372.2 612.4M372.2 612.4L381.0 613.3M389.2 629.2L392.8 609.5M392.8 609.5L401.2 607.0M417.0 629.2L420.2 609.4M420.2 609.4L428.6 606.7M444.8 629.2L451.3 610.2M451.3 610.2L460.0 609.0M472.7 629.2L480.3 610.7M480.3 610.7L489.1 610.0M500.5 629.2L509.3 611.2M509.3 611.2L518.1 611.0M528.3 629.2L538.1 611.7M538.1 611.7L546.9 612.0M556.2 629.2L566.8 612.2M566.8 612.2L575.5 613.0M584.0 629.2L595.2 612.6M595.2 612.6L604.0 613.7M611.8 629.2L623.1 612.7M623.1 612.7L631.9 613.8M639.7 629.2L650.8 612.5M650.8 612.5L659.5 613.6M667.5 629.2L678.4 612.4M678.4 612.4L687.1 613.3M695.3 629.2L706.1 612.3M706.1 612.3L714.8 613.1M723.2 629.2L733.7 612.2M733.7 612.2L742.5 612.9M751.0 629.2L761.4 612.1M761.4 612.1L770.2 612.8M778.8 629.2L789.2 612.1M789.2 612.1L798.0 612.8M806.6 629.2L816.8 611.9M816.8 611.9L825.6 612.5M834.5 629.2L844.0 611.6M844.0 611.6L852.8 611.8M862.3 629.2L871.3 611.3M871.3 611.3L880.1 611.3M890.1 629.2L898.6 611.0M898.6 611.0L907.4 610.7M918.0 629.2L925.7 610.7M925.7 610.7L934.5 610.1M945.8 629.2L952.4 610.3M952.4 610.3L961.2 609.1M973.6 629.2L978.9 609.9M978.9 609.9L987.5 608.1M1001.5 629.2L1005.1 609.5M1005.1 609.5L1013.6 607.0M1029.3 629.2L1031.5 609.3M1031.5 609.3L1039.8 606.2M1057.1 629.2L1058.4 609.2M1058.4 609.2L1066.4 605.7M1084.9 629.2L1085.8 609.2M1085.8 609.2L1093.8 605.5M1112.8 629.2L1113.6 609.2M1113.6 609.2L1121.6 605.5M1140.6 629.2L1141.9 609.2M1141.9 609.2L1150.0 605.7M1141.6 612.8L1146.1 610.9M1168.4 629.2L1170.4 609.3M1170.4 609.3L1178.6 606.1M1170.0 612.8L1174.5 611.1M1196.3 629.2L1198.4 609.3M1198.4 609.3L1206.7 606.2M1198.0 612.9L1206.3 609.7M1224.1 629.2L1226.2 609.3M1226.2 609.3L1234.4 606.1M1225.8 612.9L1234.1 609.7M1251.9 629.2L1254.1 609.3M1254.1 609.3L1262.3 606.2M1253.7 612.9L1261.9 609.7M1279.7 629.2L1282.1 609.3M1282.1 609.3L1290.4 606.3M1281.7 612.9L1289.9 609.8M27.4 656.5L43.9 645.2M43.9 645.2L51.6 649.4M40.9 647.2L48.7 651.4M55.2 656.5L72.1 645.7M72.1 645.7L79.7 650.2M69.1 647.7L76.6 652.1M83.1 656.5L100.5 646.6M100.5 646.6L107.8 651.5M97.3 648.4L104.7 653.2M110.9 656.5L128.8 647.5M128.8 647.5L135.8 652.7M125.5 649.1L132.6 654.3M138.7 656.5L156.8 647.9M156.8 647.9L163.8 653.3M153.5 649.5L160.5 654.8M166.6 656.5L184.6 647.8M184.6 647.8L191.6 653.2M181.3 649.4L188.3 654.7M194.4 656.5L211.8 646.7M211.8 646.7L219.1 651.5M208.7 648.4L216.0 653.3M222.2 656.5L238.3 644.6M238.3 644.6L246.1 648.5M235.4 646.7L243.3 650.6M250.0 656.5L265.4 643.7M265.4 643.7L273.5 647.2M262.7 646.0L270.8 649.5M277.9 656.5L293.4 643.9M293.4 643.9L301.5 647.5M290.6 646.2L298.7 649.8M305.7 656.5L320.9 643.5M320.9 643.5L329.0 646.9M318.2 645.8L326.3 649.2M333.5 656.5L346.7 641.5M346.7 641.5L355.2 643.6M344.3 644.2L349.0 645.3M361.4 656.5L370.5 638.7M370.5 638.7L379.3 638.7M368.8 641.9L373.7 641.9M389.2 656.5L394.7 637.3M394.7 637.3L403.3 635.6M417.0 656.5L422.3 637.2M422.3 637.2L430.9 635.4M444.8 656.5L452.0 637.8M452.0 637.8L460.8 636.9M472.7 656.5L482.1 638.8M482.1 638.8L490.9 639.0M500.5 656.5L511.3 639.7M511.3 639.7L520.1 640.5M528.3 656.5L539.3 639.8M539.3 639.8L548.1 640.8M556.2 656.5L567.3 639.9M567.3 639.9L576.0 640.9M584.0 656.5L595.4 640.1M595.4 640.1L604.1 641.2M611.8 656.5L623.2 640.1M623.2 640.1L632.0 641.3M639.7 656.5L650.9 640.0M650.9 640.0L659.6 641.1M667.5 656.5L678.5 639.8M678.5 639.8L687.2 640.8M695.3 656.5L706.0 639.6M706.0 639.6L714.8 640.4M723.2 656.5L733.5 639.4M733.5 639.4L742.3 640.0M731.6 642.5L736.5 642.8M751.0 656.5L761.1 639.2M761.1 639.2L769.9 639.8M759.3 642.3L764.1 642.6M778.8 656.5L788.7 639.1M788.7 639.1L797.5 639.5M786.9 642.2L791.7 642.4M806.6 656.5L816.0 638.8M816.0 638.8L824.8 638.9M814.3 642.0L819.1 642.1M834.5 656.5L843.4 638.6M843.4 638.6L852.2 638.5M862.3 656.5L871.0 638.5M871.0 638.5L879.8 638.3M890.1 656.5L898.5 638.3M898.5 638.3L907.3 638.0M918.0 656.5L925.5 638.0M925.5 638.0L934.3 637.2M945.8 656.5L952.1 637.5M952.1 637.5L960.8 636.2M973.6 656.5L978.4 637.1M978.4 637.1L987.0 635.1M1001.5 656.5L1004.8 636.8M1004.8 636.8L1013.2 634.1M1029.3 656.5L1031.3 636.6M1031.3 636.6L1039.5 633.4M1057.1 656.5L1058.2 636.5M1058.2 636.5L1066.3 633.0M1084.9 656.5L1085.7 636.5M1085.7 636.5L1093.7 632.8M1112.8 656.5L1113.5 636.5M1113.5 636.5L1121.5 632.8M1140.6 656.5L1141.8 636.5M1141.8 636.5L1149.9 633.0M1168.4 656.5L1170.4 636.6M1170.4 636.6L1178.6 633.4M1170.1 640.2L1174.6 638.4M1196.3 656.5L1198.4 636.6M1198.4 636.6L1206.7 633.5M1198.0 640.2L1206.3 637.1M1224.1 656.5L1226.2 636.6M1226.2 636.6L1234.4 633.5M1225.8 640.2L1234.0 637.0M1251.9 656.5L1254.1 636.6M1254.1 636.6L1262.3 633.5M1253.7 640.2L1261.9 637.1M1279.7 656.5L1282.1 636.6M1282.1 636.6L1290.3 633.6M1281.7 640.2L1289.9 637.2M27.4 683.8L44.2 673.0M44.2 673.0L51.8 677.4M41.2 675.0L48.8 679.4M55.2 683.8L72.2 673.3M72.2 673.3L79.7 677.8M69.2 675.2L76.7 679.7M83.1 683.8L100.3 673.8M100.3 673.8L107.7 678.5M97.2 675.6L104.6 680.3M110.9 683.8L128.6 674.5M128.6 674.5L135.8 679.5M125.4 676.1L132.6 681.2M138.7 683.8L156.6 674.9M156.6 674.9L163.7 680.1M153.4 676.5L160.5 681.7M166.6 683.8L184.3 674.7M184.3 674.7L191.5 679.8M181.1 676.3L188.3 681.5M194.4 683.8L211.5 673.5M211.5 673.5L219.0 678.1M208.4 675.3L215.9 680.0M222.2 683.8L238.3 672.0M238.3 672.0L246.2 675.9M235.4 674.1L243.3 678.0M250.0 683.8L266.1 672.0M266.1 672.0L274.0 675.9M263.2 674.1L271.1 678.0M277.9 683.8L294.6 672.9M294.6 672.9L302.3 677.3M291.6 674.9L299.2 679.3M305.7 683.8L322.6 673.1M322.6 673.1L330.2 677.5M319.5 675.0L327.1 679.5M333.5 683.8L348.1 670.1M348.1 670.1L356.4 673.1M345.5 672.6L350.0 674.2M361.4 683.8L368.8 665.3M368.8 665.3L377.6 664.5M367.5 668.6L372.3 668.2M389.2 683.8L392.3 664.1M392.3 664.1L400.6 661.3M391.7 667.6L396.3 666.1M417.0 683.8L420.9 664.2M420.9 664.2L429.3 661.8M444.8 683.8L452.7 665.4M452.7 665.4L461.5 664.8M472.7 683.8L484.2 667.5M484.2 667.5L492.9 668.7M500.5 683.8L513.0 668.2M513.0 668.2L521.6 670.0M528.3 683.8L540.5 667.9M540.5 667.9L549.1 669.5M556.2 683.8L567.7 667.5M567.7 667.5L576.4 668.7M584.0 683.8L595.4 667.4M595.4 667.4L604.1 668.6M611.8 683.8L623.2 667.4M623.2 667.4L631.9 668.6M621.2 670.3L626.0 671.0M639.7 683.8L651.0 667.4M651.0 667.4L659.7 668.5M649.0 670.3L653.8 671.0M667.5 683.8L678.7 667.2M678.7 667.2L687.4 668.3M676.7 670.2L681.5 670.8M695.3 683.8L706.1 666.9M706.1 666.9L714.8 667.8M704.1 670.0L708.9 670.4M723.2 683.8L733.4 666.6M733.4 666.6L742.2 667.2M731.5 669.7L736.4 670.0M751.0 683.8L760.9 666.5M760.9 666.5L769.7 666.9M759.1 669.6L764.0 669.8M778.8 683.8L788.4 666.3M788.4 666.3L797.2 666.6M786.7 669.4L791.5 669.6M806.6 683.8L815.4 665.9M815.4 665.9L824.2 665.7M813.9 669.1L818.7 669.0M834.5 683.8L843.0 665.7M843.0 665.7L851.8 665.5M841.5 669.0L846.3 668.8M862.3 683.8L870.8 665.7M870.8 665.7L879.6 665.5M869.3 669.0L874.1 668.8M890.1 683.8L898.4 665.6M898.4 665.6L907.2 665.2M918.0 683.8L925.2 665.2M925.2 665.2L934.0 664.3M945.8 683.8L951.5 664.7M951.5 664.7L960.2 663.1M973.6 683.8L977.7 664.3M977.7 664.3L986.2 662.0M1001.5 683.8L1004.3 664.0M1004.3 664.0L1012.7 661.2M1029.3 683.8L1031.3 663.9M1031.3 663.9L1039.5 660.7M1057.1 683.8L1058.5 663.9M1058.5 663.9L1066.6 660.4M1084.9 683.8L1086.0 663.8M1086.0 663.8L1094.0 660.3M1112.8 683.8L1113.9 663.8M1113.9 663.8L1121.9 660.3M1140.6 683.8L1142.3 663.9M1142.3 663.9L1150.4 660.6M1168.4 683.8L1170.7 663.9M1170.7 663.9L1178.9 660.8M1170.3 667.5L1174.8 665.8M1196.3 683.8L1198.6 664.0M1198.6 664.0L1206.8 660.9M1198.2 667.5L1206.4 664.5M1224.1 683.8L1226.3 663.9M1226.3 663.9L1234.6 660.9M1225.9 667.5L1234.2 664.4M1251.9 683.8L1254.2 664.0M1254.2 664.0L1262.5 660.9M1253.8 667.5L1262.1 664.5M1279.7 683.8L1282.3 664.0M1282.3 664.0L1290.6 661.0M1281.8 667.6L1290.1 664.6M27.4 711.2L44.6 701.0M44.6 701.0L52.1 705.7M41.5 702.8L49.0 707.6M38.4 704.7L42.5 707.3M55.2 711.2L72.4 701.0M72.4 701.0L79.9 705.7M69.3 702.8L76.8 707.5M66.2 704.6L70.3 707.2M83.1 711.2L100.2 700.9M100.2 700.9L107.7 705.6M97.1 702.8L104.6 707.4M94.1 704.6L98.2 707.2M110.9 711.2L128.2 701.1M128.2 701.1L135.6 705.8M125.1 702.9L132.5 707.7M121.9 704.7L126.0 707.3M138.7 711.2L156.1 701.2M156.1 701.2L163.4 706.0M153.0 703.0L160.3 707.8M166.6 711.2L183.7 700.8M183.7 700.8L191.2 705.5M180.6 702.7L188.1 707.4M194.4 711.2L210.9 699.9M210.9 699.9L218.6 704.1M207.9 701.9L215.6 706.1M222.2 711.2L238.2 699.1M238.2 699.1L246.1 703.0M235.3 701.3L243.2 705.2M250.0 711.2L266.3 699.5M266.3 699.5L274.1 703.6M263.4 701.6L271.2 705.7M277.9 711.2L294.8 700.5M294.8 700.5L302.3 705.0M291.7 702.4L299.3 706.9M305.7 711.2L322.7 700.7M322.7 700.7L330.2 705.2M319.7 702.6L327.2 707.1M333.5 711.2L348.8 698.3M348.8 698.3L356.9 701.7M346.1 700.6L354.2 704.0M361.4 711.2L369.7 693.0M369.7 693.0L378.5 692.6M368.2 696.2L373.0 696.0M389.2 711.2L392.1 691.4M392.1 691.4L400.4 688.5M391.6 694.9L396.1 693.4M417.0 711.2L420.8 691.5M420.8 691.5L429.2 689.1M420.1 695.0L424.8 693.7M444.8 711.2L453.3 693.0M453.3 693.0L462.1 692.7M472.7 711.2L484.7 695.2M484.7 695.2L493.4 696.7M500.5 711.2L513.2 695.7M513.2 695.7L521.8 697.6M528.3 711.2L540.8 695.5M540.8 695.5L549.4 697.3M556.2 711.2L568.0 695.1M568.0 695.1L576.7 696.5M565.9 698.0L570.7 698.7M584.0 711.2L595.6 694.9M595.6 694.9L604.3 696.1M593.5 697.8L598.3 698.5M611.8 711.2L623.3 694.8M623.3 694.8L632.0 696.0M621.3 697.7L626.0 698.4M639.7 711.2L651.1 694.8M651.1 694.8L659.8 696.0M649.1 697.7L653.9 698.4M667.5 711.2L678.9 694.7M678.9 694.7L687.6 695.9M676.8 697.7L681.6 698.3M695.3 711.2L706.1 694.3M706.1 694.3L714.9 695.2M704.2 697.4L709.0 697.8M723.2 711.2L733.3 693.9M733.3 693.9L742.1 694.5M731.5 697.0L736.3 697.3M751.0 711.2L761.0 693.8M761.0 693.8L769.8 694.3M759.2 696.9L764.0 697.2M778.8 711.2L788.6 693.7M788.6 693.7L797.4 694.1M786.9 696.9L791.7 697.1M806.6 711.2L815.5 693.2M815.5 693.2L824.3 693.1M813.9 696.4L818.7 696.4M834.5 711.2L843.0 693.0M843.0 693.0L851.8 692.8M841.4 696.3L846.3 696.2M862.3 711.2L870.8 693.0M870.8 693.0L879.6 692.7M869.3 696.3L874.1 696.1M890.1 711.2L898.2 692.8M898.2 692.8L907.0 692.3M896.7 696.1L901.6 695.9M918.0 711.2L924.7 692.3M924.7 692.3L933.4 691.2M945.8 711.2L950.4 691.7M950.4 691.7L959.0 689.6M973.6 711.2L976.5 691.4M976.5 691.4L984.8 688.5M1001.5 711.2L1003.4 691.2M1003.4 691.2L1011.5 688.0M1029.3 711.2L1030.9 691.2M1030.9 691.2L1039.0 687.9M1057.1 711.2L1058.7 691.2M1058.7 691.2L1066.8 687.8M1084.9 711.2L1086.5 691.2M1086.5 691.2L1094.6 687.8M1112.8 711.2L1114.6 691.2M1114.6 691.2L1122.8 688.0M1140.6 711.2L1142.9 691.3M1142.9 691.3L1151.1 688.2M1168.4 711.2L1170.9 691.3M1170.9 691.3L1179.2 688.3M1170.4 694.9L1175.0 693.2M1196.3 711.2L1198.8 691.3M1198.8 691.3L1207.1 688.3M1198.3 694.9L1206.6 691.9M1224.1 711.2L1226.7 691.3M1226.7 691.3L1235.0 688.4M1226.2 694.9L1234.5 692.0M1251.9 711.2L1254.7 691.3M1254.7 691.3L1263.0 688.5M1254.2 694.9L1262.5 692.1M1279.7 711.2L1282.8 691.4M1282.8 691.4L1291.1 688.6M1282.2 694.9L1290.6 692.2M27.4 738.5L45.0 729.0M45.0 729.0L52.2 734.0M41.8 730.7L49.1 735.7M38.7 732.4L42.6 735.2M55.2 738.5L72.8 728.9M72.8 728.9L80.0 733.8M69.6 730.6L76.9 735.6M66.5 732.3L70.5 735.1M83.1 738.5L100.4 728.5M100.4 728.5L107.8 733.3M97.3 730.3L104.6 735.1M94.1 732.1L98.2 734.7M110.9 738.5L127.9 728.0M127.9 728.0L135.4 732.6M124.9 729.9L132.4 734.5M121.8 731.8L125.9 734.3M138.7 738.5L155.5 727.6M155.5 727.6L163.1 732.0M152.5 729.6L160.1 734.0M149.5 731.5L153.7 733.9M166.6 738.5L183.0 727.1M183.0 727.1L190.7 731.3M180.0 729.1L187.8 733.3M194.4 738.5L210.4 726.5M210.4 726.5L218.3 730.3M207.5 728.6L215.4 732.5M222.2 738.5L238.0 726.2M238.0 726.2L246.0 729.9M235.1 728.4L243.1 732.1M250.0 738.5L266.1 726.5M266.1 726.5L274.0 730.4M263.2 728.7L271.1 732.6M277.9 738.5L294.3 727.1M294.3 727.1L302.1 731.3M291.4 729.2L299.1 733.3M305.7 738.5L322.3 727.3M322.3 727.3L330.0 731.5M319.3 729.3L327.0 733.5M333.5 738.5L349.9 726.9M349.9 726.9L357.6 731.0M346.9 729.0L354.7 733.1M361.4 738.5L374.7 723.6M374.7 723.6L383.2 725.9M372.3 726.3L377.0 727.5M389.2 738.5L396.7 719.9M396.7 719.9L405.4 719.2M395.3 723.3L400.1 722.8M417.0 738.5L424.2 719.8M424.2 719.8L432.9 718.9M422.9 723.2L427.7 722.7M444.8 738.5L455.1 721.3M455.1 721.3L463.9 721.9M453.2 724.4L458.1 724.7M472.7 738.5L484.9 722.7M484.9 722.7L493.6 724.3M482.7 725.5L487.5 726.4M500.5 738.5L513.2 723.0M513.2 723.0L521.8 724.9M510.9 725.8L515.6 726.8M528.3 738.5L540.9 722.9M540.9 722.9L549.5 724.7M538.6 725.7L543.4 726.7M556.2 738.5L568.4 722.7M568.4 722.7L577.1 724.3M566.2 725.5L571.0 726.4M584.0 738.5L596.1 722.5M596.1 722.5L604.7 724.1M593.9 725.4L598.7 726.3M611.8 738.5L623.6 722.3M623.6 722.3L632.3 723.7M621.5 725.2L626.3 726.0M639.7 738.5L651.2 722.1M651.2 722.1L659.9 723.4M649.1 725.1L653.9 725.8M667.5 738.5L678.9 722.1M678.9 722.1L687.6 723.3M676.9 725.0L681.7 725.7M695.3 738.5L706.1 721.7M706.1 721.7L714.9 722.5M704.2 724.7L709.0 725.2M723.2 738.5L733.3 721.2M733.3 721.2L742.1 721.8M731.5 724.3L736.3 724.6M751.0 738.5L761.0 721.1M761.0 721.1L769.7 721.6M759.2 724.3L764.0 724.5M778.8 738.5L788.7 721.1M788.7 721.1L797.4 721.5M786.9 724.2L791.7 724.4M806.6 738.5L815.8 720.7M815.8 720.7L824.6 720.8M814.2 723.9L819.0 723.9M834.5 738.5L843.1 720.5M843.1 720.5L851.9 720.3M841.6 723.7L846.4 723.6M862.3 738.5L870.7 720.3M870.7 720.3L879.5 720.0M869.2 723.6L874.0 723.4M890.1 738.5L897.7 720.0M897.7 720.0L906.5 719.3M896.4 723.3L901.2 722.9M918.0 738.5L923.6 719.3M923.6 719.3L932.2 717.7M922.6 722.7L927.3 721.9M945.8 738.5L948.7 718.7M948.7 718.7L957.1 715.9M973.6 738.5L974.6 718.5M974.6 718.5L982.6 714.9M1001.5 738.5L1001.7 718.5M1001.7 718.5L1009.6 714.6M1029.3 738.5L1029.8 718.5M1029.8 718.5L1037.7 714.7M1057.1 738.5L1058.3 718.5M1058.3 718.5L1066.4 715.0M1084.9 738.5L1086.8 718.6M1086.8 718.6L1095.0 715.3M1112.8 738.5L1115.1 718.6M1115.1 718.6L1123.4 715.6M1140.6 738.5L1143.1 718.6M1143.1 718.6L1151.4 715.7M1168.4 738.5L1170.9 718.6M1170.9 718.6L1179.2 715.6M1170.5 722.2L1175.0 720.6M1196.3 738.5L1198.8 718.6M1198.8 718.6L1207.1 715.7M1198.3 722.2L1206.6 719.2M1224.1 738.5L1227.0 718.7M1227.0 718.7L1235.4 715.9M1226.5 722.3L1234.9 719.5M1251.9 738.5L1255.4 718.8M1255.4 718.8L1263.8 716.2M1254.7 722.3L1263.1 719.7M1279.7 738.5L1283.4 718.8M1283.4 718.8L1291.8 716.3M1282.7 722.3L1291.1 719.8M27.4 765.8L45.2 756.6M45.2 756.6L52.3 761.8M42.0 758.3L49.1 763.4M38.8 759.9L42.7 762.8M55.2 765.8L73.0 756.6M73.0 756.6L80.1 761.7M69.8 758.2L76.9 763.4M66.6 759.9L70.5 762.7M83.1 765.8L100.6 756.2M100.6 756.2L107.9 761.1M97.4 757.9L104.7 762.9M94.3 759.6L98.3 762.4M110.9 765.8L127.9 755.4M127.9 755.4L135.4 760.0M124.9 757.2L132.4 761.8M121.8 759.1L125.9 761.7M138.7 765.8L155.2 754.5M155.2 754.5L162.9 758.7M152.3 756.5L160.0 760.8M149.3 758.6L153.5 760.9M166.6 765.8L182.6 753.8M182.6 753.8L190.5 757.7M179.7 756.0L187.6 759.8M176.8 758.1L181.1 760.3M194.4 765.8L210.0 753.3M210.0 753.3L218.0 756.9M207.2 755.6L215.2 759.2M222.2 765.8L237.7 753.2M237.7 753.2L245.8 756.7M234.9 755.5L243.0 759.0M250.0 765.8L265.8 753.5M265.8 753.5L273.8 757.2M263.0 755.7L270.9 759.4M277.9 765.8L294.0 754.0M294.0 754.0L301.9 758.0M291.1 756.1L299.0 760.1M305.7 765.8L322.3 754.7M322.3 754.7L330.0 759.0M319.3 756.7L327.0 761.0M333.5 765.8L350.3 754.9M350.3 754.9L357.9 759.4M347.3 756.9L354.9 761.3M361.4 765.8L377.0 753.3M377.0 753.3L385.0 756.9M374.2 755.6L378.6 757.6M389.2 765.8L401.4 749.9M401.4 749.9L410.0 751.5M399.2 752.8L403.9 753.7M417.0 765.8L428.2 749.2M428.2 749.2L437.0 750.3M426.2 752.2L431.0 752.8M444.8 765.8L457.9 750.6M457.9 750.6L466.4 752.7M455.5 753.3L460.2 754.5M472.7 765.8L486.9 751.7M486.9 751.7L495.3 754.5M484.3 754.3L488.9 755.8M500.5 765.8L514.6 751.6M514.6 751.6L523.0 754.3M512.1 754.2L516.7 755.6M528.3 765.8L541.7 750.9M541.7 750.9L550.2 753.2M539.3 753.6L544.0 754.9M556.2 765.8L569.2 750.6M569.2 750.6L577.7 752.7M566.8 753.3L571.5 754.5M584.0 765.8L597.2 750.8M597.2 750.8L605.7 752.9M594.8 753.5L599.5 754.7M611.8 765.8L625.0 750.8M625.0 750.8L633.5 752.9M622.6 753.5L627.3 754.7M639.7 765.8L652.2 750.2M652.2 750.2L660.8 752.0M649.9 753.0L654.7 754.0M667.5 765.8L679.2 749.6M679.2 749.6L687.9 750.9M677.1 752.5L681.9 753.3M695.3 765.8L706.0 748.9M706.0 748.9L714.7 749.7M704.0 751.9L708.9 752.4M723.2 765.8L733.1 748.5M733.1 748.5L741.9 748.9M731.3 751.6L736.2 751.9M751.0 765.8L760.8 748.4M760.8 748.4L769.6 748.8M759.1 751.5L763.9 751.8M778.8 765.8L788.5 748.3M788.5 748.3L797.3 748.6M786.8 751.5L791.6 751.6M806.6 765.8L816.0 748.1M816.0 748.1L824.8 748.2M814.3 751.3L819.1 751.4M834.5 765.8L843.3 747.9M843.3 747.9L852.1 747.7M841.7 751.1L846.5 751.0M862.3 765.8L870.5 747.6M870.5 747.6L879.3 747.1M869.0 750.9L873.9 750.6M890.1 765.8L897.0 747.0M897.0 747.0L905.7 746.0M895.8 750.4L900.6 749.8M918.0 765.8L922.2 746.3M922.2 746.3L930.7 744.0M945.8 765.8L946.9 745.8M946.9 745.8L954.9 742.3M973.6 765.8L972.9 745.8M972.9 745.8L980.6 741.5M1001.5 765.8L1000.2 745.8M1000.2 745.8L1007.8 741.4M1029.3 765.8L1028.5 745.8M1028.5 745.8L1036.1 741.5M1057.1 765.8L1057.5 745.8M1057.5 745.8L1065.4 742.0M1084.9 765.8L1086.7 745.9M1086.7 745.9L1094.9 742.6M1112.8 765.8L1115.4 746.0M1115.4 746.0L1123.7 743.0M1140.6 765.8L1143.4 746.0M1143.4 746.0L1151.7 743.1M1142.9 749.6L1147.5 748.0M1168.4 765.8L1171.1 746.0M1171.1 746.0L1179.4 743.1M1170.6 749.6L1175.2 748.0M1196.3 765.8L1199.1 746.0M1199.1 746.0L1207.5 743.2M1198.6 749.6L1206.9 746.8M1224.1 765.8L1227.7 746.1M1227.7 746.1L1236.2 743.6M1227.1 749.7L1235.5 747.2M1251.9 765.8L1255.9 746.2M1255.9 746.2L1264.4 743.9M1255.2 749.7L1263.7 747.4M1279.7 765.8L1283.8 746.2M1283.8 746.2L1292.3 743.9M1283.1 749.7L1291.5 747.4M27.4 793.1L45.2 784.0M45.2 784.0L52.3 789.2M42.0 785.7L49.1 790.8M38.8 787.3L42.7 790.2M55.2 793.1L73.0 784.0M73.0 784.0L80.2 789.1M69.8 785.6L77.0 790.8M66.6 787.3L70.5 790.1M83.1 793.1L100.7 783.6M100.7 783.6L107.9 788.7M97.5 785.4L104.7 790.4M94.3 787.1L98.3 789.8M110.9 793.1L128.0 782.8M128.0 782.8L135.5 787.4M124.9 784.6L132.4 789.3M121.8 786.5L126.0 789.1M138.7 793.1L155.1 781.7M155.1 781.7L162.9 785.8M152.2 783.7L159.9 787.9M149.2 785.8L153.5 788.1M166.6 793.1L182.3 780.8M182.3 780.8L190.3 784.5M179.5 783.0L187.4 786.8M176.6 785.3L181.0 787.3M194.4 793.1L209.7 780.3M209.7 780.3L217.8 783.8M207.0 782.6L215.1 786.1M222.2 793.1L237.5 780.2M237.5 780.2L245.6 783.6M234.7 782.5L242.8 785.9M250.0 793.1L265.5 780.4M265.5 780.4L273.6 784.0M262.7 782.7L270.8 786.2M277.9 793.1L293.7 780.9M293.7 780.9L301.7 784.7M290.9 783.1L298.8 786.9M305.7 793.1L322.0 781.5M322.0 781.5L329.8 785.6M319.1 783.6L326.9 787.7M333.5 793.1L349.9 781.6M349.9 781.6L357.7 785.7M346.9 783.7L354.7 787.8M361.4 793.1L376.8 780.4M376.8 780.4L384.9 783.9M374.0 782.7L378.5 784.6M389.2 793.1L402.8 778.5M402.8 778.5L411.3 780.9M400.3 781.1L405.0 782.4M417.0 793.1L430.2 778.1M430.2 778.1L438.8 780.3M427.9 780.8L432.5 782.0M444.8 793.1L459.4 779.4M459.4 779.4L467.6 782.3M456.7 781.8L461.3 783.5M472.7 793.1L487.9 780.1M487.9 780.1L496.0 783.5M485.1 782.5L489.6 784.3M500.5 793.1L515.5 779.9M515.5 779.9L523.7 783.2M512.8 782.3L517.3 784.1M528.3 793.1L542.5 779.0M542.5 779.0L550.9 781.8M540.0 781.6L544.6 783.1M556.2 793.1L569.8 778.5M569.8 778.5L578.3 781.0M567.4 781.2L572.0 782.5M584.0 793.1L598.2 779.1M598.2 779.1L606.6 781.8M595.7 781.6L600.3 783.1M611.8 793.1L626.4 779.5M626.4 779.5L634.7 782.5M623.8 781.9L628.4 783.6M639.7 793.1L653.8 779.0M653.8 779.0L662.1 781.6M651.2 781.5L655.8 783.0M667.5 793.1L679.7 777.3M679.7 777.3L688.3 778.9M677.5 780.1L682.2 781.0M695.3 793.1L705.5 775.9M705.5 775.9L714.2 776.4M703.6 779.0L708.5 779.3M723.2 793.1L732.7 775.6M732.7 775.6L741.5 775.8M731.0 778.7L735.8 778.9M751.0 793.1L760.6 775.6M760.6 775.6L769.4 775.8M758.8 778.7L763.7 778.9M778.8 793.1L788.4 775.6M788.4 775.6L797.2 775.8M786.7 778.8L791.5 778.9M806.6 793.1L816.0 775.4M816.0 775.4L824.8 775.6M814.3 778.6L819.1 778.7M834.5 793.1L843.2 775.2M843.2 775.2L852.0 775.0M841.7 778.4L846.5 778.3M862.3 793.1L870.1 774.7M870.1 774.7L878.9 774.1M868.7 778.1L873.6 777.7M890.1 793.1L896.2 774.1M896.2 774.1L904.9 772.6M895.1 777.5L899.9 776.7M918.0 793.1L921.0 773.4M921.0 773.4L929.4 770.6M945.8 793.1L945.9 773.1M945.9 773.1L953.7 769.2M973.6 793.1L972.2 773.2M972.2 773.2L979.8 768.7M1001.5 793.1L999.8 773.2M999.8 773.2L1007.3 768.6M1029.3 793.1L1027.9 773.2M1027.9 773.2L1035.5 768.7M1057.1 793.1L1057.0 773.1M1057.0 773.1L1064.8 769.1M1084.9 793.1L1086.6 773.2M1086.6 773.2L1094.8 769.9M1112.8 793.1L1115.7 773.4M1115.7 773.4L1124.1 770.6M1115.2 776.9L1119.8 775.4M1140.6 793.1L1144.1 773.4M1144.1 773.4L1152.5 770.9M1143.5 777.0L1148.1 775.6M1168.4 793.1L1172.2 773.5M1172.2 773.5L1180.7 771.1M1171.5 777.0L1176.2 775.7M1196.3 793.1L1200.4 773.6M1200.4 773.6L1208.9 771.3M1199.7 777.1L1208.2 774.8M1224.1 793.1L1228.3 773.6M1228.3 773.6L1236.8 771.3M1227.5 777.1L1236.1 774.9M1251.9 793.1L1256.1 773.6M1256.1 773.6L1264.6 771.3M1255.3 777.1L1263.8 774.8M1279.7 793.1L1283.9 773.6M1283.9 773.6L1292.4 771.3M1283.2 777.1L1291.7 774.8M27.4 820.5L45.2 811.3M45.2 811.3L52.3 816.4M42.0 812.9L49.1 818.1M38.8 814.6L42.7 817.4M55.2 820.5L73.0 811.2M73.0 811.2L80.1 816.3M69.8 812.9L76.9 818.0M66.6 814.5L70.5 817.4M83.1 820.5L100.6 810.8M100.6 810.8L107.9 815.8M97.4 812.6L104.7 817.5M94.3 814.3L98.3 817.0M110.9 820.5L127.9 809.9M127.9 809.9L135.4 814.5M124.8 811.8L132.4 816.4M121.8 813.7L125.9 816.2M138.7 820.5L155.0 808.8M155.0 808.8L162.8 812.9M152.1 810.9L159.9 815.0M149.1 813.0L153.4 815.2M166.6 820.5L182.1 807.9M182.1 807.9L190.2 811.5M179.3 810.2L187.3 813.8M176.5 812.4L180.9 814.4M194.4 820.5L209.5 807.4M209.5 807.4L217.7 810.7M206.8 809.7L214.9 813.1M204.1 812.1L208.5 813.9M222.2 820.5L237.2 807.2M237.2 807.2L245.4 810.4M234.5 809.6L242.7 812.8M250.0 820.5L265.1 807.3M265.1 807.3L273.3 810.6M262.4 809.7L270.6 813.0M277.9 820.5L293.2 807.6M293.2 807.6L301.3 811.1M290.4 809.9L298.5 813.4M305.7 820.5L321.3 807.9M321.3 807.9L329.3 811.5M318.5 810.2L326.5 813.8M333.5 820.5L349.0 807.8M349.0 807.8L357.0 811.3M346.2 810.1L354.3 813.6M361.4 820.5L376.1 807.0M376.1 807.0L384.3 810.0M373.4 809.4L378.0 811.1M389.2 820.5L403.0 806.0M403.0 806.0L411.4 808.5M400.5 808.6L405.1 810.0M417.0 820.5L430.8 806.0M430.8 806.0L439.2 808.5M428.3 808.6L433.0 810.0M444.8 820.5L459.5 806.8M459.5 806.8L467.8 809.9M456.9 809.3L461.4 811.0M472.7 820.5L487.8 807.4M487.8 807.4L495.9 810.7M485.1 809.7L489.6 811.5M500.5 820.5L515.5 807.2M515.5 807.2L523.7 810.4M512.8 809.6L517.3 811.4M528.3 820.5L542.6 806.5M542.6 806.5L551.0 809.3M540.1 809.0L544.6 810.5M556.2 820.5L570.1 806.1M570.1 806.1L578.5 808.7M567.6 808.7L572.2 810.1M584.0 820.5L598.4 806.6M598.4 806.6L606.8 809.5M595.8 809.1L600.4 810.7M611.8 820.5L626.6 807.0M626.6 807.0L634.8 810.0M623.9 809.4L628.5 811.1M639.7 820.5L654.0 806.6M654.0 806.6L662.3 809.4M651.4 809.1L656.0 810.6M667.5 820.5L679.7 804.7M679.7 804.7L688.4 806.3M677.5 807.5L682.3 808.4M695.3 820.5L705.2 803.1M705.2 803.1L714.0 803.5M703.4 806.2L708.3 806.4M723.2 820.5L732.6 802.8M732.6 802.8L741.4 803.0M730.9 806.0L735.7 806.1M751.0 820.5L760.5 802.9M760.5 802.9L769.3 803.1M758.8 806.0L763.6 806.1M778.8 820.5L788.4 802.9M788.4 802.9L797.1 803.1M786.6 806.1L791.5 806.2M806.6 820.5L815.9 802.8M815.9 802.8L824.7 802.9M814.3 806.0L819.1 806.0M834.5 820.5L843.2 802.5M843.2 802.5L852.0 802.3M841.6 805.7L846.4 805.6M862.3 820.5L869.9 802.0M869.9 802.0L878.6 801.2M868.5 805.3L873.3 804.9M890.1 820.5L895.7 801.3M895.7 801.3L904.4 799.6M894.7 804.7L899.5 803.8M918.0 820.5L920.7 800.7M920.7 800.7L929.0 797.8M945.8 820.5L945.9 800.5M945.9 800.5L953.7 796.5M973.6 820.5L972.3 800.5M972.3 800.5L979.9 796.0M1001.5 820.5L999.9 800.5M999.9 800.5L1007.4 795.9M1029.3 820.5L1028.0 800.5M1028.0 800.5L1035.6 796.0M1057.1 820.5L1057.1 800.5M1057.1 800.5L1064.9 796.5M1084.9 820.5L1086.8 800.6M1086.8 800.6L1095.0 797.3M1086.5 804.1L1091.0 802.4M1112.8 820.5L1116.3 800.8M1116.3 800.8L1124.7 798.2M1115.6 804.3L1120.3 802.9M1140.6 820.5L1145.1 801.0M1145.1 801.0L1153.6 798.9M1144.3 804.5L1149.0 803.3M1168.4 820.5L1173.7 801.2M1173.7 801.2L1182.3 799.4M1172.8 804.7L1181.4 802.9M1196.3 820.5L1201.8 801.3M1201.8 801.3L1210.5 799.6M1200.8 804.7L1209.5 803.1M1224.1 820.5L1229.0 801.1M1229.0 801.1L1237.5 799.1M1228.1 804.6L1236.7 802.6M1251.9 820.5L1256.2 800.9M1256.2 800.9L1264.7 798.7M1255.4 804.5L1264.0 802.2M1279.7 820.5L1284.0 800.9M1284.0 800.9L1292.5 798.7M1283.3 804.4L1291.8 802.2M27.4 847.8L45.0 838.3M45.0 838.3L52.2 843.3M41.8 840.0L49.1 845.0M38.7 841.7L42.6 844.5M55.2 847.8L72.8 838.2M72.8 838.2L80.0 843.1M69.6 839.9L76.9 844.8M66.4 841.6L70.4 844.3M83.1 847.8L100.3 837.7M100.3 837.7L107.7 842.4M97.2 839.5L104.6 844.3M94.1 841.3L98.2 843.9M110.9 847.8L127.6 836.8M127.6 836.8L135.3 841.2M124.6 838.8L132.2 843.2M121.6 840.8L125.8 843.2M138.7 847.8L154.7 835.8M154.7 835.8L162.6 839.7M151.9 838.0L159.7 841.9M149.0 840.1L153.3 842.3M166.6 847.8L181.9 835.0M181.9 835.0L190.0 838.4M179.1 837.3L187.2 840.7M176.4 839.6L180.8 841.5M194.4 847.8L209.3 834.5M209.3 834.5L217.5 837.6M206.6 836.9L214.8 840.0M203.9 839.3L208.4 841.0M222.2 847.8L236.9 834.2M236.9 834.2L245.2 837.3M234.3 836.7L242.5 839.7M250.0 847.8L264.7 834.2M264.7 834.2L273.0 837.3M262.1 836.7L270.3 839.7M277.9 847.8L292.6 834.3M292.6 834.3L300.9 837.4M290.0 836.7L298.2 839.8M305.7 847.8L320.5 834.3M320.5 834.3L328.7 837.5M317.8 836.8L326.1 839.9M333.5 847.8L348.1 834.1M348.1 834.1L356.4 837.1M345.5 836.6L353.8 839.6M361.4 847.8L375.5 833.7M375.5 833.7L383.9 836.4M373.0 836.2L377.6 837.7M389.2 847.8L402.9 833.2M402.9 833.2L411.3 835.7M400.4 835.9L405.1 837.2M417.0 847.8L430.8 833.3M430.8 833.3L439.2 835.8M428.3 835.9L432.9 837.3M444.8 847.8L459.1 833.8M459.1 833.8L467.5 836.6M456.5 836.3L461.1 837.8M472.7 847.8L487.3 834.1M487.3 834.1L495.6 837.1M484.6 836.6L489.2 838.2M500.5 847.8L515.0 834.0M515.0 834.0L523.3 836.9M512.4 836.5L516.9 838.1M528.3 847.8L542.3 833.5M542.3 833.5L550.7 836.2M539.8 836.1L544.4 837.5M556.2 847.8L570.0 833.3M570.0 833.3L578.4 835.8M567.5 835.9L572.1 837.3M584.0 847.8L598.1 833.6M598.1 833.6L606.5 836.3M595.6 836.2L600.2 837.7M611.8 847.8L626.1 833.8M626.1 833.8L634.5 836.6M623.6 836.3L628.1 837.9M639.7 847.8L653.5 833.3M653.5 833.3L661.9 835.9M651.0 835.9L655.6 837.3M667.5 847.8L679.5 831.8M679.5 831.8L688.2 833.4M677.4 834.7L682.1 835.6M695.3 847.8L705.5 830.6M705.5 830.6L714.3 831.2M703.7 833.7L708.5 834.0M723.2 847.8L732.8 830.3M732.8 830.3L741.6 830.5M731.0 833.4L735.9 833.6M751.0 847.8L760.6 830.2M760.6 830.2L769.4 830.5M758.8 833.4L763.7 833.5M778.8 847.8L788.4 830.2M788.4 830.2L797.2 830.5M786.6 833.4L791.5 833.5M806.6 847.8L815.9 830.1M815.9 830.1L824.7 830.2M814.2 833.3L819.1 833.3M834.5 847.8L843.1 829.7M843.1 829.7L851.9 829.5M841.5 833.0L846.4 832.9M862.3 847.8L869.7 829.2M869.7 829.2L878.5 828.4M868.4 832.6L873.2 832.1M890.1 847.8L895.7 828.6M895.7 828.6L904.3 826.9M918.0 847.8L921.1 828.0M921.1 828.0L929.5 825.3M945.8 847.8L946.6 827.8M946.6 827.8L954.6 824.2M973.6 847.8L973.1 827.8M973.1 827.8L980.8 823.6M1001.5 847.8L1000.6 827.8M1000.6 827.8L1008.2 823.5M1029.3 847.8L1028.8 827.8M1028.8 827.8L1036.5 823.6M1057.1 847.8L1057.8 827.8M1057.8 827.8L1065.8 824.1M1084.9 847.8L1087.4 827.9M1087.4 827.9L1095.6 824.9M1086.9 831.5L1091.5 829.9M1112.8 847.8L1116.8 828.2M1116.8 828.2L1125.2 825.9M1116.0 831.7L1120.7 830.4M1140.6 847.8L1145.7 828.5M1145.7 828.5L1154.3 826.6M1144.8 831.9L1153.4 830.1M1168.4 847.8L1174.3 828.7M1174.3 828.7L1183.0 827.2M1173.2 832.1L1181.9 830.6M1196.3 847.8L1202.4 828.8M1202.4 828.8L1211.1 827.3M1201.3 832.2L1210.0 830.8M1224.1 847.8L1229.9 828.7M1229.9 828.7L1238.6 827.1M1228.9 832.1L1237.5 830.6M1251.9 847.8L1256.9 828.4M1256.9 828.4L1265.4 826.5M1256.0 831.9L1264.6 830.0M1279.7 847.8L1284.3 828.3M1284.3 828.3L1292.9 826.2M1283.5 831.8L1292.0 829.7M27.4 875.1L44.6 865.0M44.6 865.0L52.1 869.7M41.5 866.8L49.0 871.6M38.4 868.6L42.5 871.2M55.2 875.1L72.4 864.8M72.4 864.8L79.8 869.5M69.3 866.7L76.7 871.3M66.2 868.5L70.3 871.1M83.1 875.1L99.9 864.3M99.9 864.3L107.5 868.8M96.9 866.3L104.5 870.7M93.8 868.2L98.0 870.7M110.9 875.1L127.2 863.6M127.2 863.6L135.0 867.7M124.3 865.7L132.1 869.7M121.3 867.7L125.6 870.0M138.7 875.1L154.4 862.7M154.4 862.7L162.4 866.4M151.6 865.0L159.6 868.6M148.8 867.2L153.2 869.2M166.6 875.1L181.6 862.0M181.6 862.0L189.8 865.3M178.9 864.4L187.1 867.7M176.2 866.7L180.7 868.5M194.4 875.1L209.0 861.5M209.0 861.5L217.3 864.5M206.4 864.0L214.7 867.0M222.2 875.1L236.6 861.3M236.6 861.3L244.9 864.1M234.0 863.8L242.3 866.6M250.0 875.1L264.3 861.1M264.3 861.1L272.7 864.0M261.8 863.7L270.1 866.5M277.9 875.1L292.1 861.1M292.1 861.1L300.5 863.9M289.6 863.6L297.9 866.4M305.7 875.1L319.9 861.0M319.9 861.0L328.2 863.8M317.3 863.6L325.7 866.3M333.5 875.1L347.5 860.8M347.5 860.8L355.9 863.5M345.0 863.4L349.6 864.9M361.4 875.1L375.1 860.6M375.1 860.6L383.5 863.0M372.6 863.2L377.2 864.5M389.2 875.1L402.7 860.4M402.7 860.4L411.2 862.7M400.2 863.0L404.9 864.3M417.0 875.1L430.5 860.4M430.5 860.4L439.0 862.7M428.1 863.0L432.8 864.3M444.8 875.1L458.6 860.6M458.6 860.6L467.0 863.1M456.1 863.2L460.8 864.6M472.7 875.1L486.6 860.8M486.6 860.8L495.0 863.4M484.1 863.4L488.7 864.8M500.5 875.1L514.4 860.7M514.4 860.7L522.8 863.2M511.9 863.3L516.5 864.7M528.3 875.1L541.9 860.5M541.9 860.5L550.4 862.8M539.5 863.1L544.1 864.4M556.2 875.1L569.6 860.3M569.6 860.3L578.1 862.7M567.2 863.0L571.9 864.3M584.0 875.1L597.6 860.4M597.6 860.4L606.0 862.8M595.1 863.1L599.8 864.4M611.8 875.1L625.4 860.4M625.4 860.4L633.8 862.8M622.9 863.1L627.6 864.4M639.7 875.1L652.7 859.9M652.7 859.9L661.2 862.0M650.3 862.7L655.0 863.8M667.5 875.1L679.3 859.0M679.3 859.0L688.0 860.4M677.2 861.9L682.0 862.7M695.3 875.1L705.9 858.2M705.9 858.2L714.7 859.0M704.0 861.2L708.9 861.7M723.2 875.1L733.2 857.8M733.2 857.8L741.9 858.3M731.4 860.9L736.2 861.2M751.0 875.1L760.8 857.7M760.8 857.7L769.6 858.0M759.0 860.8L763.8 861.0M778.8 875.1L788.4 857.6M788.4 857.6L797.2 857.8M786.7 860.7L791.5 860.9M806.6 875.1L815.9 857.4M815.9 857.4L824.7 857.5M814.2 860.6L819.0 860.6M834.5 875.1L843.0 857.0M843.0 857.0L851.8 856.8M841.5 860.3L846.3 860.1M862.3 875.1L869.7 856.6M869.7 856.6L878.5 855.8M868.4 859.9L873.2 859.5M890.1 875.1L895.9 856.0M895.9 856.0L904.6 854.4M918.0 875.1L921.8 855.5M921.8 855.5L930.3 853.1M945.8 875.1L947.8 855.2M947.8 855.2L956.0 852.1M973.6 875.1L974.4 855.1M974.4 855.1L982.4 851.5M1001.5 875.1L1001.8 855.1M1001.8 855.1L1009.8 851.3M1029.3 875.1L1030.0 855.1M1030.0 855.1L1038.0 851.4M1057.1 875.1L1058.8 855.2M1058.8 855.2L1067.0 851.9M1084.9 875.1L1088.0 855.4M1088.0 855.4L1096.3 852.6M1087.4 858.9L1092.0 857.4M1112.8 875.1L1117.1 855.6M1117.1 855.6L1125.6 853.4M1116.3 859.1L1121.0 857.9M1140.6 875.1L1145.9 855.8M1145.9 855.8L1154.5 854.0M1144.9 859.3L1153.5 857.5M1168.4 875.1L1174.3 856.0M1174.3 856.0L1182.9 854.5M1173.2 859.4L1181.9 857.9M1196.3 875.1L1202.3 856.1M1202.3 856.1L1211.0 854.6M1201.2 859.5L1209.9 858.0M1224.1 875.1L1229.9 856.0M1229.9 856.0L1238.6 854.5M1228.9 859.4L1237.6 857.9M1251.9 875.1L1257.3 855.9M1257.3 855.9L1265.9 854.1M1256.3 859.3L1264.9 857.6M1279.7 875.1L1284.6 855.7M1284.6 855.7L1293.2 853.8M1283.8 859.2L1292.3 857.3M27.4 902.5L44.2 891.5M44.2 891.5L51.8 895.9M41.1 893.5L48.8 897.9M38.1 895.5L42.3 897.9M55.2 902.5L71.8 891.3M71.8 891.3L79.5 895.6M68.9 893.3L76.5 897.6M65.9 895.3L70.1 897.7M83.1 902.5L99.4 890.9M99.4 890.9L107.2 895.0M96.4 893.0L104.2 897.0M93.5 895.1L97.8 897.3M110.9 902.5L126.7 890.3M126.7 890.3L134.7 894.0M123.9 892.5L131.8 896.2M121.0 894.6L125.4 896.7M138.7 902.5L154.0 889.6M154.0 889.6L162.1 893.0M151.3 891.9L159.4 895.3M148.5 894.2L153.0 896.1M166.6 902.5L181.3 889.0M181.3 889.0L189.6 892.1M178.7 891.4L186.9 894.5M176.0 893.8L180.5 895.6M194.4 902.5L208.8 888.6M208.8 888.6L217.1 891.4M206.2 891.1L214.5 893.9M222.2 902.5L236.3 888.3M236.3 888.3L244.7 891.0M233.8 890.9L242.2 893.6M250.0 902.5L264.0 888.1M264.0 888.1L272.4 890.8M261.5 890.7L269.9 893.3M277.9 902.5L291.7 888.0M291.7 888.0L300.1 890.6M289.2 890.6L297.6 893.2M305.7 902.5L319.4 887.9M319.4 887.9L327.9 890.4M317.0 890.5L325.4 893.0M333.5 902.5L347.1 887.8M347.1 887.8L355.6 890.1M344.6 890.4L349.3 891.7M361.4 902.5L374.7 887.6M374.7 887.6L383.2 889.8M372.3 890.3L377.0 891.5M389.2 902.5L402.4 887.5M402.4 887.5L410.9 889.7M400.0 890.2L404.7 891.4M417.0 902.5L430.2 887.5M430.2 887.5L438.8 889.6M427.9 890.2L432.6 891.4M444.8 902.5L458.2 887.5M458.2 887.5L466.7 889.8M455.8 890.2L460.4 891.5M472.7 902.5L486.0 887.6M486.0 887.6L494.6 889.9M483.6 890.3L488.3 891.5M500.5 902.5L513.8 887.5M513.8 887.5L522.3 889.8M511.4 890.2L516.1 891.4M528.3 902.5L541.5 887.4M541.5 887.4L550.0 889.5M539.1 890.1L543.8 891.3M556.2 902.5L569.2 887.3M569.2 887.3L577.8 889.4M566.9 890.0L571.6 891.2M584.0 902.5L597.0 887.3M597.0 887.3L605.6 889.3M594.7 890.0L599.4 891.1M611.8 902.5L624.7 887.1M624.7 887.1L633.2 889.1M622.4 889.9L627.1 891.0M639.7 902.5L652.0 886.8M652.0 886.8L660.7 888.5M649.8 889.6L654.6 890.5M667.5 902.5L679.1 886.2M679.1 886.2L687.8 887.5M677.0 889.1L681.8 889.8M695.3 902.5L706.2 885.7M706.2 885.7L714.9 886.6M704.2 888.7L709.0 889.2M723.2 902.5L733.4 885.3M733.4 885.3L742.2 885.9M731.6 888.4L736.4 888.7M751.0 902.5L760.9 885.1M760.9 885.1L769.7 885.5M759.1 888.2L764.0 888.5M778.8 902.5L788.4 884.9M788.4 884.9L797.2 885.2M786.7 888.1L791.5 888.2M806.6 902.5L815.8 884.7M815.8 884.7L824.6 884.7M814.2 887.9L819.0 887.9M834.5 902.5L843.0 884.4M843.0 884.4L851.8 884.1M841.4 887.6L846.3 887.5M862.3 902.5L869.8 883.9M869.8 883.9L878.6 883.2M868.4 887.3L873.3 886.8M890.1 902.5L896.3 883.4M896.3 883.4L905.0 882.1M918.0 902.5L922.6 883.0M922.6 883.0L931.2 881.0M945.8 902.5L949.0 882.7M949.0 882.7L957.4 880.1M973.6 902.5L975.9 882.6M975.9 882.6L984.1 879.5M1001.5 902.5L1003.3 882.5M1003.3 882.5L1011.5 879.3M1029.3 902.5L1031.3 882.6M1031.3 882.6L1039.5 879.4M1057.1 902.5L1059.8 882.6M1059.8 882.6L1068.1 879.7M1084.9 902.5L1088.5 882.8M1088.5 882.8L1097.0 880.3M1087.9 886.3L1092.5 884.9M1112.8 902.5L1117.2 883.0M1117.2 883.0L1125.8 880.8M1116.4 886.5L1121.1 885.3M1140.6 902.5L1145.8 883.1M1145.8 883.1L1154.4 881.3M1144.8 886.6L1153.4 884.8M1168.4 902.5L1174.0 883.3M1174.0 883.3L1182.7 881.6M1173.0 886.7L1181.7 885.1M1196.3 902.5L1202.0 883.3M1202.0 883.3L1210.7 881.7M1201.0 886.8L1209.6 885.2M1224.1 902.5L1229.7 883.3M1229.7 883.3L1238.4 881.7M1228.7 886.7L1237.4 885.1M1251.9 902.5L1257.3 883.2M1257.3 883.2L1265.9 881.4M1256.3 886.7L1264.9 884.9M1279.7 902.5L1284.8 883.1M1284.8 883.1L1293.4 881.2M1283.9 886.6L1292.5 884.7M27.4 929.8L43.6 918.0M43.6 918.0L51.4 922.1M40.7 920.2L48.5 924.2M37.8 922.3L42.1 924.5M55.2 929.8L71.3 917.8M71.3 917.8L79.2 921.7M68.4 920.0L76.3 923.9M65.5 922.1L69.8 924.3M83.1 929.8L98.8 917.5M98.8 917.5L106.8 921.2M96.0 919.7L104.0 923.4M93.1 921.9L97.5 923.9M110.9 929.8L126.2 917.0M126.2 917.0L134.3 920.4M123.5 919.3L131.6 922.7M120.7 921.6L125.2 923.5M138.7 929.8L153.6 916.5M153.6 916.5L161.8 919.6M150.9 918.9L159.1 922.0M148.3 921.3L152.8 923.0M166.6 929.8L181.0 916.0M181.0 916.0L189.3 918.9M178.4 918.5L186.7 921.4M194.4 929.8L208.5 915.6M208.5 915.6L216.9 918.3M206.0 918.2L214.3 920.9M222.2 929.8L236.1 915.4M236.1 915.4L244.5 917.9M233.6 918.0L242.0 920.5M250.0 929.8L263.7 915.2M263.7 915.2L272.2 917.6M261.3 917.8L269.7 920.3M277.9 929.8L291.4 915.1M291.4 915.1L299.9 917.4M289.0 917.7L297.4 920.1M305.7 929.8L319.1 914.9M319.1 914.9L327.6 917.2M316.7 917.6L325.2 919.9M333.5 929.8L346.8 914.8M346.8 914.8L355.3 917.0M344.4 917.5L349.1 918.7M361.4 929.8L374.4 914.7M374.4 914.7L383.0 916.8M372.1 917.4L376.8 918.6M389.2 929.8L402.2 914.6M402.2 914.6L410.7 916.6M399.8 917.3L404.5 918.4M417.0 929.8L430.0 914.5M430.0 914.5L438.5 916.6M427.6 917.3L432.3 918.4M444.8 929.8L457.8 914.5M457.8 914.5L466.4 916.6M455.5 917.3L460.2 918.4M472.7 929.8L485.6 914.5M485.6 914.5L494.2 916.6M483.3 917.3L488.0 918.4M500.5 929.8L513.4 914.5M513.4 914.5L522.0 916.5M511.1 917.2L515.8 918.3M528.3 929.8L541.1 914.4M541.1 914.4L549.7 916.3M538.8 917.2L543.5 918.2M556.2 929.8L568.8 914.3M568.8 914.3L577.4 916.2M566.5 917.1L571.3 918.1M584.0 929.8L596.5 914.2M596.5 914.2L605.1 916.0M594.3 917.0L599.0 918.0M611.8 929.8L624.1 914.0M624.1 914.0L632.8 915.7M621.9 916.9L626.7 917.8M639.7 929.8L651.6 913.7M651.6 913.7L660.3 915.2M649.5 916.6L654.2 917.5M667.5 929.8L678.9 913.4M678.9 913.4L687.6 914.6M676.9 916.3L681.7 917.0M695.3 929.8L706.2 913.0M706.2 913.0L715.0 913.9M704.2 916.0L709.1 916.5M723.2 929.8L733.6 912.7M733.6 912.7L742.3 913.4M731.7 915.8L736.5 916.2M751.0 929.8L761.0 912.5M761.0 912.5L769.8 912.9M759.2 915.6L764.0 915.9M778.8 929.8L788.4 912.3M788.4 912.3L797.2 912.5M786.7 915.4L791.5 915.6M806.6 929.8L815.8 912.0M815.8 912.0L824.6 912.0M814.1 915.2L819.0 915.2M834.5 929.8L843.0 911.7M843.0 911.7L851.7 911.4M841.4 914.9L846.3 914.8M862.3 929.8L869.9 911.3M869.9 911.3L878.7 910.6M868.5 914.6L873.4 914.2M890.1 929.8L896.7 910.9M896.7 910.9L905.4 909.7M918.0 929.8L923.3 910.5M923.3 910.5L932.0 908.8M945.8 929.8L950.1 910.3M950.1 910.3L958.6 908.0M973.6 929.8L977.1 910.1M977.1 910.1L985.5 907.5M1001.5 929.8L1004.6 910.0M1004.6 910.0L1012.9 907.3M1029.3 929.8L1032.4 910.0M1032.4 910.0L1040.8 907.3M1057.1 929.8L1060.6 910.1M1060.6 910.1L1069.0 907.5M1084.9 929.8L1088.9 910.2M1088.9 910.2L1097.4 907.8M1088.2 913.7L1092.9 912.4M1112.8 929.8L1117.3 910.3M1117.3 910.3L1125.9 908.2M1116.5 913.8L1121.2 912.7M1140.6 929.8L1145.6 910.4M1145.6 910.4L1154.2 908.5M1144.7 913.9L1153.3 912.0M1168.4 929.8L1173.8 910.5M1173.8 910.5L1182.4 908.8M1172.8 914.0L1181.4 912.2M1196.3 929.8L1201.7 910.6M1201.7 910.6L1210.4 908.8M1200.7 914.0L1209.4 912.3M1224.1 929.8L1229.5 910.5M1229.5 910.5L1238.1 908.8M1228.5 914.0L1237.2 912.3M1251.9 929.8L1257.2 910.5M1257.2 910.5L1265.8 908.7M1256.2 914.0L1264.8 912.2M1279.7 929.8L1284.8 910.4M1284.8 910.4L1293.4 908.6M1283.9 913.9L1292.5 912.0" fill="none" stroke="#000" stroke-opacity="0.72" stroke-width="0.85"/>
<g font-family="'Liberation Sans',sans-serif" font-weight="bold" font-size="11" text-anchor="middle">
<text x="89.8" y="278.6" fill="#ffffff">0.5</text>
<text x="100.6" y="320.3" fill="#ffffff">1.7</text>
<text x="144.7" y="306.8" fill="#ffffff">0.4</text>
<text x="125.9" y="351.9" fill="#ffffff">0.6</text>
<text x="45.1" y="350" fill="#ffffff">0.9</text>
<text x="28.2" y="305.8" fill="#ffffff">0.2</text>
<text x="61" y="304.9" fill="#ffffff">0.3</text>
<text x="173" y="367.5" fill="#ffffff">1.2</text>
<text x="241" y="296" fill="#ffffff">2.1</text>
<text x="287.1" y="301.7" fill="#ffffff">2.2</text>
<text x="277.7" y="320.3" fill="#ffffff">2.2</text>
<text x="322.9" y="326.1" fill="#ffffff">2.8</text>
<text x="344.5" y="407.3" fill="#ffffff">1.4</text>
<text x="213" y="496" fill="#ffffff">1.7</text>
<text x="361.5" y="507" fill="#ffffff">0.9</text>
<text x="208.3" y="402.6" fill="#ffffff">0.2</text>
<text x="140" y="390.4" fill="#ffffff">2.6</text>
<text x="143.8" y="439.3" fill="#ffffff">0.6</text>
<text x="448" y="279" fill="#ffffff">2.6</text>
<text x="443.4" y="330.8" fill="#ffffff">0.6</text>
<text x="496.8" y="327.3" fill="#ffffff">0.9</text>
<text x="543.2" y="345.1" fill="#ffffff">0.5</text>
<text x="562.9" y="381.4" fill="#ffffff">0.6</text>
<text x="550.7" y="426.5" fill="#ffffff">1.0</text>
<text x="690.5" y="262.3" fill="#ffffff">0.7</text>
<text x="658.9" y="305.5" fill="#ffffff">1.7</text>
<text x="727.6" y="317.3" fill="#ffffff">0.5</text>
<text x="695.6" y="356.3" fill="#ffffff">1.2</text>
<text x="775.2" y="322.4" fill="#ffffff">1.3</text>
<text x="747.3" y="375.4" fill="#ffffff">0.8</text>
<text x="834.2" y="325.2" fill="#ffffff">2.5</text>
<text x="981" y="376.5" fill="#ffffff">0.5</text>
<text x="805.4" y="445.9" fill="#ffffff">0.2</text>
<text x="844.2" y="446.6" fill="#ffffff">0.6</text>
<text x="803.5" y="479.8" fill="#ffffff">0.3</text>
<text x="929.1" y="446.4" fill="#ffffff">3.3</text>
<text x="881.5" y="473.5" fill="#ffffff">0.9</text>
<text x="1094.8" y="475.2" fill="#ffffff">0.6</text>
<text x="1078.8" y="511" fill="#ffffff">0.4</text>
<text x="842.5" y="541.8" fill="#ffffff">0.5</text>
<text x="1070" y="547.1" fill="#ffffff">0.3</text>
<text x="283.9" y="566.3" fill="#ffffff">0.3</text>
<text x="308" y="592.3" fill="#ffffff">0.8</text>
<text x="344" y="649" fill="#ffffff">0.5</text>
<text x="296.1" y="689.6" fill="#ffffff">0.4</text>
<text x="132.5" y="577" fill="#ffffff">0.8</text>
<text x="208.5" y="658" fill="#ffffff">0.3</text>
<text x="130" y="849.5" fill="#ffffff">0.2</text>
<text x="375.2" y="739.1" fill="#ffffff">0.3</text>
<text x="519.9" y="747.2" fill="#ffffff">0.5</text>
<text x="559" y="762" fill="#ffffff">0.7</text>
<text x="418" y="855.2" fill="#ffffff">0.3</text>
<text x="325" y="894.7" fill="#ffffff">1.7</text>
<text x="445.3" y="895.3" fill="#ffffff">0.9</text>
<text x="931" y="601" fill="#ffffff">0.6</text>
<text x="789" y="851" fill="#ffffff">0.3</text>
<text x="1025.5" y="764.5" fill="#ffffff">0.2</text>
<text x="993.5" y="877" fill="#ffffff">1.5</text>
<text x="775.5" y="568.2" fill="#ffffff">0.1</text>
<text x="799.3" y="506.8" fill="#ffffff">0.2</text>
</g>
<g font-family="'Liberation Sans',sans-serif" font-size="7.5" fill="#222">
<text x="829" y="8.6" font-size="8.3">15W</text>
<text transform="translate(2.2,296) rotate(90)">66N</text>
<text transform="translate(1272.3,217) rotate(90)">66N</text>
</g>
</g>
<rect x="0.5" y="1.5" width="240.2" height="77" fill="#fff" stroke="#c4c4c4" stroke-width="1"/>
<g font-family="'DejaVu Sans Condensed','Liberation Sans',sans-serif" fill="#111" font-size="11">
<text x="1.8" y="20.9" font-size="13" stroke="#111" stroke-width="0.35" textLength="126.4" lengthAdjust="spacingAndGlyphs">Veðurstofan/IS750dev</text>
<text x="128.4" y="20.9" textLength="74.5" lengthAdjust="spacingAndGlyphs">: Vindur (10m),</text>
<text x="2" y="34.5" textLength="229.6" lengthAdjust="spacingAndGlyphs">rigning/skúrir (grænt/blátt/rautt - mm/1klst) og</text>
<text x="2" y="47.7" textLength="235.3" lengthAdjust="spacingAndGlyphs">slydda/snjókoma (grátt/bleikt/grænt - mm/1klst)</text>
<text x="2" y="60.6" textLength="121.5" lengthAdjust="spacingAndGlyphs">IT: Mið. 17. 09. 2025 00Z</text>
<text x="2" y="73.6" stroke="#111" stroke-width="0.35" textLength="117.5" lengthAdjust="spacingAndGlyphs">VT: Mið. 17.09.2025 17Z</text>
<text x="123.5" y="73.6" textLength="37.2" lengthAdjust="spacingAndGlyphs">(+17 h)</text>
</g>
<path d="M240.8 11.4h2.4M240.8 39.4h2.4M240.8 67.4h2.4" stroke="#333" stroke-width="0.8"/>
<rect x="0" y="899.5" width="1280" height="59" fill="#fff"/>
<g stroke="#000" stroke-width="1">
<rect x="0.50" y="900.5" width="49.23" height="14.5" fill="#6e4a72"/>
<rect x="49.73" y="900.5" width="49.23" height="14.5" fill="#9a5f9f"/>
<rect x="98.96" y="900.5" width="49.23" height="14.5" fill="#c873cf"/>
<rect x="148.19" y="900.5" width="49.23" height="14.5" fill="#f986fa"/>
<rect x="197.42" y="900.5" width="49.23" height="14.5" fill="#dc6bdf"/>
<rect x="246.65" y="900.5" width="49.23" height="14.5" fill="#c257c7"/>
<rect x="295.88" y="900.5" width="49.23" height="14.5" fill="#8d2c90"/>
<rect x="345.12" y="900.5" width="49.23" height="14.5" fill="#540055"/>
<rect x="394.35" y="900.5" width="49.23" height="14.5" fill="#6a2a7e"/>
<rect x="443.58" y="900.5" width="49.23" height="14.5" fill="#8259af"/>
<rect x="492.81" y="900.5" width="49.23" height="14.5" fill="#9a86d6"/>
<rect x="542.04" y="900.5" width="49.23" height="14.5" fill="#b4b4fd"/>
<rect x="591.27" y="900.5" width="49.23" height="14.5" fill="#9ea4e6"/>
<rect x="640.50" y="900.5" width="49.23" height="14.5" fill="#8791cd"/>
<rect x="689.73" y="900.5" width="49.23" height="14.5" fill="#5f7aa5"/>
<rect x="738.96" y="900.5" width="49.23" height="14.5" fill="#37607c"/>
<rect x="788.19" y="900.5" width="49.23" height="14.5" fill="#0d4752"/>
<rect x="837.42" y="900.5" width="49.23" height="14.5" fill="#174c58"/>
<rect x="886.65" y="900.5" width="49.23" height="14.5" fill="#21535f"/>
<rect x="935.88" y="900.5" width="49.23" height="14.5" fill="#305f6b"/>
<rect x="985.12" y="900.5" width="49.23" height="14.5" fill="#467079"/>
<rect x="1034.35" y="900.5" width="49.23" height="14.5" fill="#5c8189"/>
<rect x="1083.58" y="900.5" width="49.23" height="14.5" fill="#72939a"/>
<rect x="1132.81" y="900.5" width="49.23" height="14.5" fill="#8ea7ad"/>
<rect x="1182.04" y="900.5" width="49.23" height="14.5" fill="#c0cdd2"/>
<rect x="1231.27" y="900.5" width="49.23" height="14.5" fill="#ffffff"/>
<rect x="0.50" y="930" width="51.20" height="12.5" fill="#c8fbc8"/>
<rect x="51.70" y="930" width="51.20" height="12.5" fill="#a0d8a0"/>
<rect x="102.90" y="930" width="51.20" height="12.5" fill="#72ae72"/>
<rect x="154.10" y="930" width="51.20" height="12.5" fill="#2f752f"/>
<rect x="205.30" y="930" width="51.20" height="12.5" fill="#004a00"/>
<rect x="256.50" y="930" width="51.20" height="12.5" fill="#1a5a26"/>
<rect x="307.70" y="930" width="51.20" height="12.5" fill="#336b42"/>
<rect x="358.90" y="930" width="51.20" height="12.5" fill="#4a7c66"/>
<rect x="410.10" y="930" width="51.20" height="12.5" fill="#5f8c86"/>
<rect x="461.30" y="930" width="51.20" height="12.5" fill="#7796a4"/>
<rect x="512.50" y="930" width="51.20" height="12.5" fill="#8ea4c0"/>
<rect x="563.70" y="930" width="51.20" height="12.5" fill="#a6b2e0"/>
<rect x="614.90" y="930" width="51.20" height="12.5" fill="#bcbcff"/>
<rect x="666.10" y="930" width="51.20" height="12.5" fill="#9696ea"/>
<rect x="717.30" y="930" width="51.20" height="12.5" fill="#7070dc"/>
<rect x="768.50" y="930" width="51.20" height="12.5" fill="#4c4cd0"/>
<rect x="819.70" y="930" width="51.20" height="12.5" fill="#2828c0"/>
<rect x="870.90" y="930" width="51.20" height="12.5" fill="#0000aa"/>
<rect x="922.10" y="930" width="51.20" height="12.5" fill="#6248cc"/>
<rect x="973.30" y="930" width="51.20" height="12.5" fill="#c490ee"/>
<rect x="1024.50" y="930" width="51.20" height="12.5" fill="#f4a8f0"/>
<rect x="1075.70" y="930" width="51.20" height="12.5" fill="#f48cd0"/>
<rect x="1126.90" y="930" width="51.20" height="12.5" fill="#f470a8"/>
<rect x="1178.10" y="930" width="51.20" height="12.5" fill="#f43c58"/>
<rect x="1229.30" y="930" width="51.20" height="12.5" fill="#fa0000"/>
</g>
<g font-family="'DejaVu Sans Condensed','Liberation Sans',sans-serif" font-size="10.3" fill="#111">
<text x="1.2" y="925.8">0.2</text>
<text x="50.4" y="925.8">0.3</text>
<text x="99.7" y="925.8">0.4</text>
<text x="148.9" y="925.8">0.5</text>
<text x="198.1" y="925.8">0.8</text>
<text x="247.4" y="925.8">1</text>
<text x="296.6" y="925.8">1.5</text>
<text x="345.8" y="925.8">2</text>
<text x="395.0" y="925.8">2.5</text>
<text x="444.3" y="925.8">3</text>
<text x="493.5" y="925.8">3.5</text>
<text x="542.7" y="925.8">4</text>
<text x="592.0" y="925.8">4.5</text>
<text x="641.2" y="925.8">5</text>
<text x="690.4" y="925.8">6</text>
<text x="739.7" y="925.8">7</text>
<text x="788.9" y="925.8">8</text>
<text x="838.1" y="925.8">9</text>
<text x="887.4" y="925.8">10</text>
<text x="936.6" y="925.8">12</text>
<text x="985.8" y="925.8">14</text>
<text x="1035.0" y="925.8">16</text>
<text x="1084.3" y="925.8">18</text>
<text x="1133.5" y="925.8">20</text>
<text x="1182.7" y="925.8">25</text>
<text x="1232.0" y="925.8">30</text>
<text x="1.2" y="953.8">0.1</text>
<text x="52.4" y="953.8">0.3</text>
<text x="103.6" y="953.8">0.5</text>
<text x="154.8" y="953.8">0.8</text>
<text x="206.0" y="953.8">1</text>
<text x="257.2" y="953.8">1.5</text>
<text x="308.4" y="953.8">2</text>
<text x="359.6" y="953.8">2.5</text>
<text x="410.8" y="953.8">3</text>
<text x="462.0" y="953.8">3.5</text>
<text x="513.2" y="953.8">4</text>
<text x="564.4" y="953.8">4.5</text>
<text x="615.6" y="953.8">5</text>
<text x="666.8" y="953.8">6</text>
<text x="718.0" y="953.8">7</text>
<text x="769.2" y="953.8">8</text>
<text x="820.4" y="953.8">9</text>
<text x="871.6" y="953.8">10</text>
<text x="922.8" y="953.8">12</text>
<text x="974.0" y="953.8">14</text>
<text x="1025.2" y="953.8">16</text>
<text x="1076.4" y="953.8">18</text>
<text x="1127.6" y="953.8">20</text>
<text x="1178.8" y="953.8">25</text>
<text x="1230.0" y="953.8">30</text>
</g>
<rect x="0" y="0" width="1280" height="1" fill="#000"/>
<rect x="0" y="0" width="1.3" height="958" fill="#000"/>
<rect x="0" y="956.3" width="1280" height="1.7" fill="#000"/>
<rect x="1279" y="0" width="1" height="958" fill="#000"/>
</svg>
</body></html>
